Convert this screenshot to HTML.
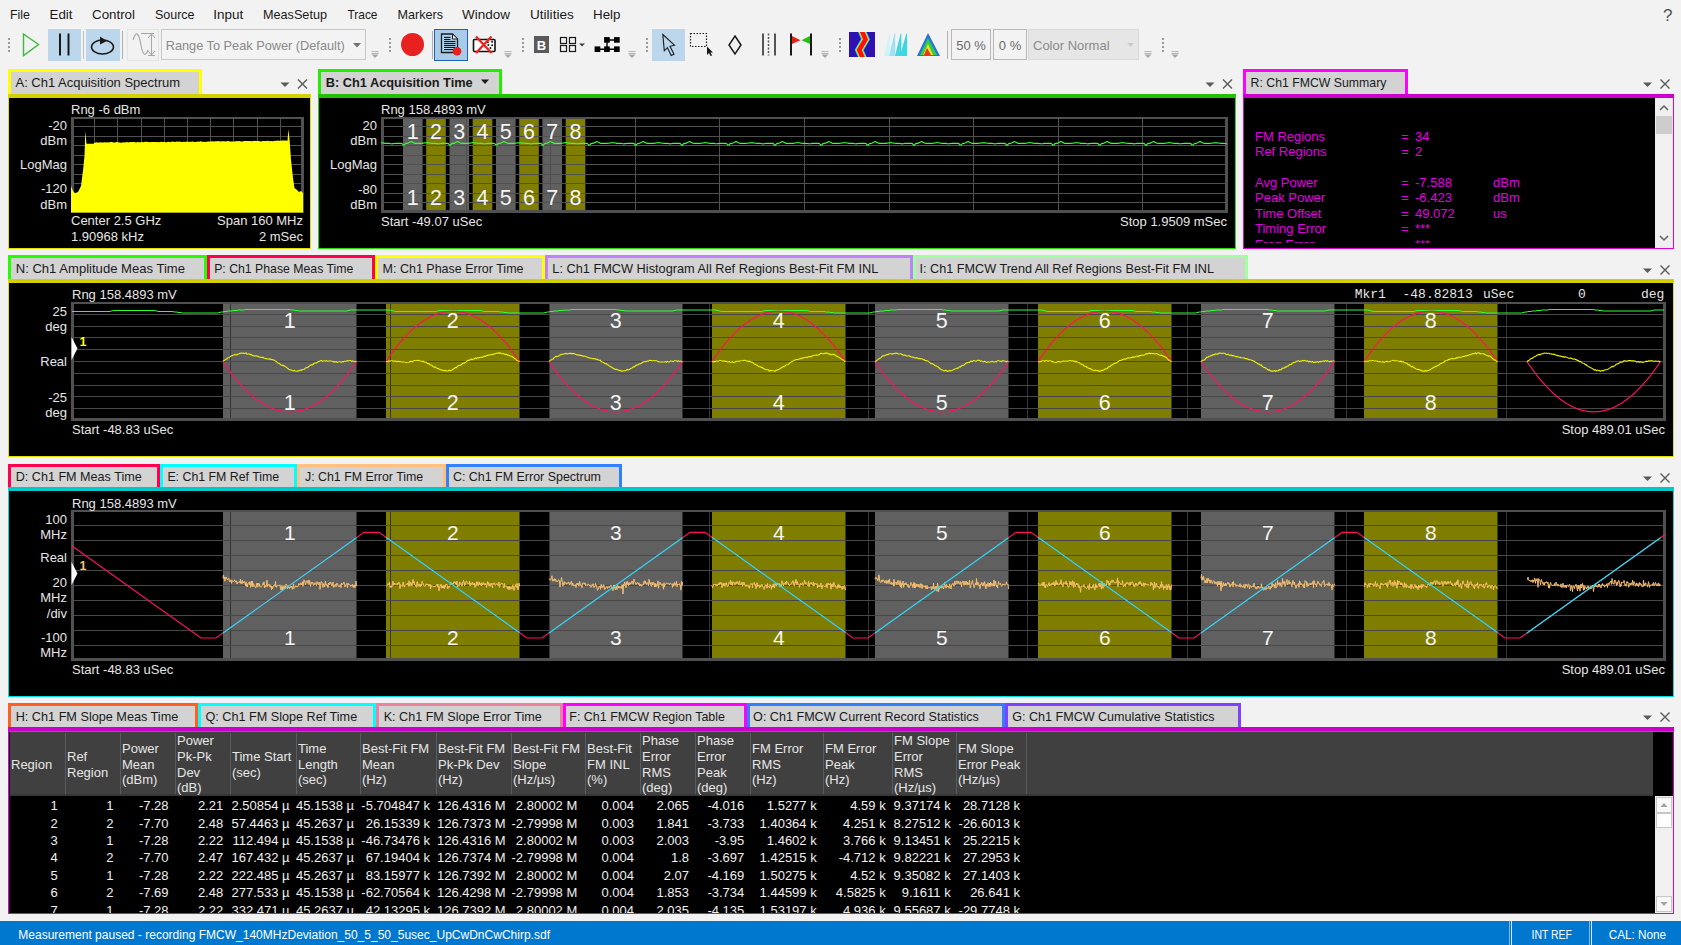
<!DOCTYPE html>
<html><head><meta charset="utf-8"><title>VSA</title>
<style>
html,body{margin:0;padding:0;}
body{width:1681px;height:945px;overflow:hidden;position:relative;background:#f2f2f2;font-family:"Liberation Sans", sans-serif;}
body>div{position:absolute;}
svg{position:absolute;left:0;top:0;}
text{font-family:"Liberation Sans", sans-serif;}
</style></head><body>
<div style="left:8px;top:69px;width:194px;height:25px;background:#d3d3d3;box-sizing:border-box;border:3px solid #ffff00;border-bottom:none"></div><div style="left:8px;top:94px;width:303px;height:155px;background:#000;box-sizing:border-box;border:1px solid #e0e000;border-top:4px solid #d4d000"></div><div style="left:318px;top:69px;width:184px;height:25px;background:#d3d3d3;box-sizing:border-box;border:3px solid #22ee00;border-bottom:none"></div><div style="left:318px;top:94px;width:918px;height:155px;background:#000;box-sizing:border-box;border:1px solid #22dd00;border-top:4px solid #22c000"></div><div style="left:1243px;top:69px;width:165px;height:25px;background:#d3d3d3;box-sizing:border-box;border:3px solid #ff00ff;border-bottom:none"></div><div style="left:1243px;top:94px;width:431px;height:155px;background:#000;box-sizing:border-box;border:1px solid #dd00dd;border-top:4px solid #cc00cc"></div><div style="left:8px;top:255px;width:199px;height:24px;background:#d3d3d3;box-sizing:border-box;border:3px solid #22ff00;border-bottom:none"></div><div style="left:207px;top:255px;width:168px;height:24px;background:#d3d3d3;box-sizing:border-box;border:3px solid #ff0050;border-bottom:none"></div><div style="left:375px;top:255px;width:170px;height:24px;background:#d3d3d3;box-sizing:border-box;border:3px solid #ffff00;border-bottom:none"></div><div style="left:545px;top:255px;width:368px;height:24px;background:#d3d3d3;box-sizing:border-box;border:3px solid #c080ff;border-bottom:none"></div><div style="left:913px;top:255px;width:335px;height:24px;background:#d3d3d3;box-sizing:border-box;border:3px solid #a0ffa0;border-bottom:none"></div><div style="left:8px;top:279px;width:1666px;height:178px;background:#000;box-sizing:border-box;border:1px solid #e0e000;border-top:4px solid #d4d000"></div><div style="left:8px;top:464px;width:152px;height:23px;background:#d3d3d3;box-sizing:border-box;border:3px solid #ff0050;border-bottom:none"></div><div style="left:160px;top:464px;width:137px;height:23px;background:#d3d3d3;box-sizing:border-box;border:3px solid #00ffff;border-bottom:none"></div><div style="left:297px;top:464px;width:149px;height:23px;background:#d3d3d3;box-sizing:border-box;border:3px solid #ffc080;border-bottom:none"></div><div style="left:446px;top:464px;width:176px;height:23px;background:#d3d3d3;box-sizing:border-box;border:3px solid #3080ff;border-bottom:none"></div><div style="left:8px;top:487px;width:1666px;height:210px;background:#000;box-sizing:border-box;border:1px solid #00e0e0;border-top:4px solid #00c8c8"></div><div style="left:8px;top:703px;width:190px;height:24px;background:#d3d3d3;box-sizing:border-box;border:3px solid #ff6020;border-bottom:none"></div><div style="left:198px;top:703px;width:178px;height:24px;background:#d3d3d3;box-sizing:border-box;border:3px solid #00ffff;border-bottom:none"></div><div style="left:376px;top:703px;width:187px;height:24px;background:#d3d3d3;box-sizing:border-box;border:3px solid #f080a0;border-bottom:none"></div><div style="left:563px;top:703px;width:184px;height:24px;background:#d3d3d3;box-sizing:border-box;border:3px solid #ff00ff;border-bottom:none"></div><div style="left:747px;top:703px;width:258px;height:24px;background:#d3d3d3;box-sizing:border-box;border:3px solid #3080ff;border-bottom:none"></div><div style="left:1005px;top:703px;width:236px;height:24px;background:#d3d3d3;box-sizing:border-box;border:3px solid #8040ff;border-bottom:none"></div><div style="left:8px;top:727px;width:1666px;height:187px;background:#000;box-sizing:border-box;border:1px solid #dd00dd;border-top:4px solid #cc00cc"></div><div style="left:0px;top:921px;width:1681px;height:24px;background:#0078d0"></div>
<svg width="1681" height="945" viewBox="0 0 1681 945">
<text x="10" y="19" font-size="13" fill="#1a1a1a" text-anchor="start" textLength="20" lengthAdjust="spacingAndGlyphs">File</text>
<text x="49.5" y="19" font-size="13" fill="#1a1a1a" text-anchor="start" textLength="23.0" lengthAdjust="spacingAndGlyphs">Edit</text>
<text x="92" y="19" font-size="13" fill="#1a1a1a" text-anchor="start" textLength="43" lengthAdjust="spacingAndGlyphs">Control</text>
<text x="155" y="19" font-size="13" fill="#1a1a1a" text-anchor="start" textLength="39.5" lengthAdjust="spacingAndGlyphs">Source</text>
<text x="213.3" y="19" font-size="13" fill="#1a1a1a" text-anchor="start" textLength="30.0" lengthAdjust="spacingAndGlyphs">Input</text>
<text x="263" y="19" font-size="13" fill="#1a1a1a" text-anchor="start" textLength="64" lengthAdjust="spacingAndGlyphs">MeasSetup</text>
<text x="347.5" y="19" font-size="13" fill="#1a1a1a" text-anchor="start" textLength="30.0" lengthAdjust="spacingAndGlyphs">Trace</text>
<text x="397.5" y="19" font-size="13" fill="#1a1a1a" text-anchor="start" textLength="45.5" lengthAdjust="spacingAndGlyphs">Markers</text>
<text x="462" y="19" font-size="13" fill="#1a1a1a" text-anchor="start" textLength="48" lengthAdjust="spacingAndGlyphs">Window</text>
<text x="530" y="19" font-size="13" fill="#1a1a1a" text-anchor="start" textLength="43.8" lengthAdjust="spacingAndGlyphs">Utilities</text>
<text x="593" y="19" font-size="13" fill="#1a1a1a" text-anchor="start" textLength="27.5" lengthAdjust="spacingAndGlyphs">Help</text>
<text x="1663" y="21" font-size="17" fill="#505050" text-anchor="start">?</text>
<text x="15.5" y="87" font-size="13.5" fill="#1a1a1a" text-anchor="start" textLength="164.5" lengthAdjust="spacingAndGlyphs">A: Ch1 Acquisition Spectrum</text>
<path d="M280.5,82.5 L289.5,82.5 L285,87 Z" fill="#5a5a5a"/>
<path d="M298.0,79.5 L307.0,88.5 M307.0,79.5 L298.0,88.5" stroke="#5a5a5a" stroke-width="1.4"/>
<text x="325.7" y="87" font-size="13.5" fill="#1a1a1a" text-anchor="start" font-weight="bold" textLength="147" lengthAdjust="spacingAndGlyphs">B: Ch1 Acquisition Time</text>
<path d="M481,79.5 L489,79.5 L485,84 Z" fill="#1a1a1a"/>
<path d="M1205.5,82.5 L1214.5,82.5 L1210,87 Z" fill="#5a5a5a"/>
<path d="M1223.0,79.5 L1232.0,88.5 M1232.0,79.5 L1223.0,88.5" stroke="#5a5a5a" stroke-width="1.4"/>
<text x="1250.6" y="87" font-size="13.5" fill="#1a1a1a" text-anchor="start" textLength="135.8" lengthAdjust="spacingAndGlyphs">R: Ch1 FMCW Summary</text>
<path d="M1643.0,82.5 L1652.0,82.5 L1647.5,87 Z" fill="#5a5a5a"/>
<path d="M1660.5,79.5 L1669.5,88.5 M1669.5,79.5 L1660.5,88.5" stroke="#5a5a5a" stroke-width="1.4"/>
<text x="15.7" y="273" font-size="13.5" fill="#1a1a1a" text-anchor="start" textLength="169.3" lengthAdjust="spacingAndGlyphs">N: Ch1 Amplitude Meas Time</text>
<text x="214.2" y="273" font-size="13.5" fill="#1a1a1a" text-anchor="start" textLength="139.1" lengthAdjust="spacingAndGlyphs">P: Ch1 Phase Meas Time</text>
<text x="382.6" y="273" font-size="13.5" fill="#1a1a1a" text-anchor="start" textLength="140.9" lengthAdjust="spacingAndGlyphs">M: Ch1 Phase Error Time</text>
<text x="552.3" y="273" font-size="13.5" fill="#1a1a1a" text-anchor="start" textLength="326" lengthAdjust="spacingAndGlyphs">L: Ch1 FMCW Histogram All Ref Regions Best-Fit FM INL</text>
<text x="919.5" y="273" font-size="13.5" fill="#1a1a1a" text-anchor="start" textLength="294.5" lengthAdjust="spacingAndGlyphs">I: Ch1 FMCW Trend All Ref Regions Best-Fit FM INL</text>
<path d="M1643.0,268.5 L1652.0,268.5 L1647.5,273 Z" fill="#5a5a5a"/>
<path d="M1660.5,265.5 L1669.5,274.5 M1669.5,265.5 L1660.5,274.5" stroke="#5a5a5a" stroke-width="1.4"/>
<text x="15.7" y="481" font-size="13.5" fill="#1a1a1a" text-anchor="start" textLength="126" lengthAdjust="spacingAndGlyphs">D: Ch1 FM Meas Time</text>
<text x="167.4" y="481" font-size="13.5" fill="#1a1a1a" text-anchor="start" textLength="111.8" lengthAdjust="spacingAndGlyphs">E: Ch1 FM Ref Time</text>
<text x="305" y="481" font-size="13.5" fill="#1a1a1a" text-anchor="start" textLength="118.2" lengthAdjust="spacingAndGlyphs">J: Ch1 FM Error Time</text>
<text x="452.9" y="481" font-size="13.5" fill="#1a1a1a" text-anchor="start" textLength="148.1" lengthAdjust="spacingAndGlyphs">C: Ch1 FM Error Spectrum</text>
<path d="M1643.0,476.5 L1652.0,476.5 L1647.5,481 Z" fill="#5a5a5a"/>
<path d="M1660.5,473.5 L1669.5,482.5 M1669.5,473.5 L1660.5,482.5" stroke="#5a5a5a" stroke-width="1.4"/>
<text x="15.7" y="721" font-size="13.5" fill="#1a1a1a" text-anchor="start" textLength="162.6" lengthAdjust="spacingAndGlyphs">H: Ch1 FM Slope Meas Time</text>
<text x="205.4" y="721" font-size="13.5" fill="#1a1a1a" text-anchor="start" textLength="151.8" lengthAdjust="spacingAndGlyphs">Q: Ch1 FM Slope Ref Time</text>
<text x="383.7" y="721" font-size="13.5" fill="#1a1a1a" text-anchor="start" textLength="158.1" lengthAdjust="spacingAndGlyphs">K: Ch1 FM Slope Error Time</text>
<text x="569.3" y="721" font-size="13.5" fill="#1a1a1a" text-anchor="start" textLength="155.7" lengthAdjust="spacingAndGlyphs">F: Ch1 FMCW Region Table</text>
<text x="753.1" y="721" font-size="13.5" fill="#1a1a1a" text-anchor="start" textLength="225.8" lengthAdjust="spacingAndGlyphs">O: Ch1 FMCW Current Record Statistics</text>
<text x="1012.3" y="721" font-size="13.5" fill="#1a1a1a" text-anchor="start" textLength="202.2" lengthAdjust="spacingAndGlyphs">G: Ch1 FMCW Cumulative Statistics</text>
<path d="M1643.0,715.5 L1652.0,715.5 L1647.5,720 Z" fill="#5a5a5a"/>
<path d="M1660.5,712.5 L1669.5,721.5 M1669.5,712.5 L1660.5,721.5" stroke="#5a5a5a" stroke-width="1.4"/>
<rect x="94" y="117" width="1" height="95" fill="#505050"/>
<rect x="117" y="117" width="1" height="95" fill="#505050"/>
<rect x="141" y="117" width="1" height="95" fill="#505050"/>
<rect x="164" y="117" width="1" height="95" fill="#505050"/>
<rect x="187" y="117" width="1" height="95" fill="#505050"/>
<rect x="210" y="117" width="1" height="95" fill="#505050"/>
<rect x="233" y="117" width="1" height="95" fill="#505050"/>
<rect x="257" y="117" width="1" height="95" fill="#505050"/>
<rect x="280" y="117" width="1" height="95" fill="#505050"/>
<rect x="71" y="126" width="232" height="1" fill="#505050"/>
<rect x="71" y="136" width="232" height="1" fill="#505050"/>
<rect x="71" y="145" width="232" height="1" fill="#505050"/>
<rect x="71" y="155" width="232" height="1" fill="#505050"/>
<rect x="71" y="164" width="232" height="1" fill="#505050"/>
<rect x="71" y="174" width="232" height="1" fill="#505050"/>
<rect x="71" y="183" width="232" height="1" fill="#505050"/>
<rect x="71" y="193" width="232" height="1" fill="#505050"/>
<rect x="71" y="202" width="232" height="1" fill="#505050"/>
<rect x="71" y="117" width="233" height="2" fill="#505050"/>
<rect x="71" y="210" width="233" height="3" fill="#505050"/>
<rect x="71" y="117" width="3" height="96" fill="#505050"/>
<rect x="301" y="117" width="3" height="96" fill="#505050"/>
<polygon points="71.0,212.5 71.0,186.0 73.0,191.0 75.0,193.3 78.0,192.0 81.0,186.0 83.3,168.0 84.5,156.0 85.3,131.0 86.5,143.8 93.8,143.8 94.0,142.9 95.5,142.5 97.0,142.3 98.5,142.7 100.0,142.2 101.5,142.6 103.0,142.4 104.5,142.2 106.0,142.5 107.5,142.2 109.0,142.4 110.5,142.1 112.0,142.1 113.5,142.4 115.0,142.6 116.5,142.1 118.0,142.2 119.5,142.5 121.0,142.7 122.5,142.4 124.0,142.2 125.5,142.6 127.0,142.0 128.5,142.5 130.0,142.1 131.5,142.0 133.0,142.0 134.5,142.1 136.0,142.4 137.5,142.0 139.0,142.2 140.5,142.3 142.0,142.1 143.5,142.2 145.0,141.8 146.5,141.8 148.0,141.9 149.5,142.2 151.0,142.0 152.5,141.9 154.0,142.1 155.5,142.0 157.0,141.9 158.5,142.2 160.0,142.1 161.5,141.8 163.0,142.0 164.5,142.0 166.0,142.2 167.5,142.1 169.0,141.8 170.5,142.2 172.0,141.6 173.5,141.8 175.0,142.0 176.5,141.6 178.0,141.8 179.5,141.5 181.0,141.9 182.5,142.0 184.0,141.8 185.5,142.0 187.0,141.6 188.5,141.9 190.0,141.8 191.5,141.7 193.0,141.6 194.5,141.9 196.0,142.0 197.5,141.6 199.0,141.7 200.5,141.3 202.0,141.7 203.5,141.7 205.0,141.9 206.5,141.8 208.0,141.4 209.5,141.4 211.0,141.6 212.5,141.2 214.0,141.5 215.5,141.2 217.0,141.2 218.5,141.1 220.0,141.6 221.5,141.2 223.0,141.2 224.5,141.3 226.0,141.6 227.5,141.1 229.0,141.3 230.5,141.4 232.0,141.6 233.5,141.5 235.0,141.5 236.5,141.1 238.0,141.2 239.5,141.1 241.0,141.5 242.5,141.5 244.0,141.0 245.5,141.0 247.0,141.0 248.5,141.0 250.0,141.1 251.5,141.2 253.0,141.0 254.5,140.8 256.0,141.0 257.5,141.0 259.0,141.1 260.5,141.4 262.0,141.2 263.5,141.0 265.0,141.1 266.5,141.1 268.0,140.7 269.5,141.2 271.0,141.1 272.5,141.2 274.0,141.1 275.5,140.8 277.0,140.8 278.5,140.6 280.0,141.0 281.5,140.5 283.0,140.5 284.5,140.6 286.0,140.6 287.5,140.7 287.5,141.0 288.4,129.3 289.6,140.0 291.0,160.0 293.0,178.0 294.5,188.0 297.0,190.0 299.0,192.0 301.0,191.0 303.0,193.0 303.0,212.5" fill="#ffff00"/>
<text x="71" y="114" font-size="13" fill="#e6e6e6" text-anchor="start">Rng -6 dBm</text>
<text x="67" y="130" font-size="13" fill="#e6e6e6" text-anchor="end">-20</text>
<text x="67" y="145" font-size="13" fill="#e6e6e6" text-anchor="end">dBm</text>
<text x="67" y="169" font-size="13" fill="#e6e6e6" text-anchor="end">LogMag</text>
<text x="67" y="193" font-size="13" fill="#e6e6e6" text-anchor="end">-120</text>
<text x="67" y="208.5" font-size="13" fill="#e6e6e6" text-anchor="end">dBm</text>
<text x="71" y="225" font-size="13" fill="#e6e6e6" text-anchor="start">Center 2.5 GHz</text>
<text x="303" y="225" font-size="13" fill="#e6e6e6" text-anchor="end">Span 160 MHz</text>
<text x="71" y="240.5" font-size="13" fill="#e6e6e6" text-anchor="start">1.90968 kHz</text>
<text x="303" y="240.5" font-size="13" fill="#e6e6e6" text-anchor="end">2 mSec</text>
<rect x="403.0" y="119" width="19.6" height="93" fill="#606060"/>
<rect x="426.2" y="119" width="19.6" height="93" fill="#807e00"/>
<rect x="449.5" y="119" width="19.6" height="93" fill="#606060"/>
<rect x="472.7" y="119" width="19.6" height="93" fill="#807e00"/>
<rect x="496.0" y="119" width="19.6" height="93" fill="#606060"/>
<rect x="519.2" y="119" width="19.6" height="93" fill="#807e00"/>
<rect x="542.4" y="119" width="19.6" height="93" fill="#606060"/>
<rect x="565.7" y="119" width="19.6" height="93" fill="#807e00"/>
<rect x="466" y="117" width="1" height="95" fill="#505050"/>
<rect x="550" y="117" width="1" height="95" fill="#505050"/>
<rect x="635" y="117" width="1" height="95" fill="#505050"/>
<rect x="719" y="117" width="1" height="95" fill="#505050"/>
<rect x="804" y="117" width="1" height="95" fill="#505050"/>
<rect x="889" y="117" width="1" height="95" fill="#505050"/>
<rect x="973" y="117" width="1" height="95" fill="#505050"/>
<rect x="1058" y="117" width="1" height="95" fill="#505050"/>
<rect x="1142" y="117" width="1" height="95" fill="#505050"/>
<rect x="381" y="126" width="846" height="1" fill="#505050"/>
<rect x="381" y="136" width="846" height="1" fill="#505050"/>
<rect x="381" y="145" width="846" height="1" fill="#505050"/>
<rect x="381" y="155" width="846" height="1" fill="#505050"/>
<rect x="381" y="164" width="846" height="1" fill="#505050"/>
<rect x="381" y="174" width="846" height="1" fill="#505050"/>
<rect x="381" y="183" width="846" height="1" fill="#505050"/>
<rect x="381" y="193" width="846" height="1" fill="#505050"/>
<rect x="381" y="202" width="846" height="1" fill="#505050"/>
<rect x="381" y="117" width="847" height="2" fill="#505050"/>
<rect x="381" y="210" width="847" height="3" fill="#505050"/>
<rect x="381" y="117" width="3" height="96" fill="#505050"/>
<rect x="1225" y="117" width="3" height="96" fill="#505050"/>
<text x="412.8" y="139" font-size="21.5" fill="#f4f4f4" text-anchor="middle">1</text>
<text x="412.8" y="205" font-size="21.5" fill="#f4f4f4" text-anchor="middle">1</text>
<text x="436.0" y="139" font-size="21.5" fill="#f4f4f4" text-anchor="middle">2</text>
<text x="436.0" y="205" font-size="21.5" fill="#f4f4f4" text-anchor="middle">2</text>
<text x="459.3" y="139" font-size="21.5" fill="#f4f4f4" text-anchor="middle">3</text>
<text x="459.3" y="205" font-size="21.5" fill="#f4f4f4" text-anchor="middle">3</text>
<text x="482.5" y="139" font-size="21.5" fill="#f4f4f4" text-anchor="middle">4</text>
<text x="482.5" y="205" font-size="21.5" fill="#f4f4f4" text-anchor="middle">4</text>
<text x="505.8" y="139" font-size="21.5" fill="#f4f4f4" text-anchor="middle">5</text>
<text x="505.8" y="205" font-size="21.5" fill="#f4f4f4" text-anchor="middle">5</text>
<text x="529.0" y="139" font-size="21.5" fill="#f4f4f4" text-anchor="middle">6</text>
<text x="529.0" y="205" font-size="21.5" fill="#f4f4f4" text-anchor="middle">6</text>
<text x="552.2" y="139" font-size="21.5" fill="#f4f4f4" text-anchor="middle">7</text>
<text x="552.2" y="205" font-size="21.5" fill="#f4f4f4" text-anchor="middle">7</text>
<text x="575.5" y="139" font-size="21.5" fill="#f4f4f4" text-anchor="middle">8</text>
<text x="575.5" y="205" font-size="21.5" fill="#f4f4f4" text-anchor="middle">8</text>
<polyline points="381.0,142.8 382.0,142.9 383.0,143.0 384.0,143.1 385.0,143.3 386.0,143.3 387.0,143.3 388.0,143.3 389.0,143.4 390.0,143.5 391.0,143.7 392.0,143.8 393.0,143.6 394.0,143.5 395.0,143.3 396.0,143.3 397.0,143.3 398.0,143.3 399.0,143.3 400.0,143.3 401.0,143.3 402.0,143.6 403.0,144.7 404.0,145.2 405.0,144.1 406.0,143.3 407.0,143.3 408.0,143.1 409.0,142.6 410.0,142.1 411.0,141.6 412.0,141.9 413.0,142.4 414.0,142.9 415.0,143.3 416.0,143.3 417.0,143.3 418.0,143.3 419.0,143.3 420.0,143.3 421.0,143.3 422.0,143.3 423.0,143.1 424.0,143.0 425.0,142.9 426.0,142.8 427.0,142.7 428.0,142.9 429.0,143.0 430.0,143.1 431.0,143.2 432.0,143.3 433.0,143.3 434.0,143.3 435.0,143.3 436.0,143.5 437.0,143.6 438.0,143.8 439.0,143.7 440.0,143.5 441.0,143.4 442.0,143.3 443.0,143.3 444.0,143.3 445.0,143.3 446.0,143.3 447.0,143.3 448.0,143.3 449.0,144.3 450.0,145.4 451.0,144.5 452.0,143.4 453.0,143.3 454.0,143.3 455.0,142.8 456.0,142.3 457.0,141.8 458.0,141.7 459.0,142.2 460.0,142.7 461.0,143.2 462.0,143.3 463.0,143.3 464.0,143.3 465.0,143.3 466.0,143.3 467.0,143.3 468.0,143.3 469.0,143.2 470.0,143.1 471.0,143.0 472.0,142.8 473.0,142.7 474.0,142.8 475.0,142.9 476.0,143.0 477.0,143.2 478.0,143.3 479.0,143.3 480.0,143.3 481.0,143.3 482.0,143.4 483.0,143.6 484.0,143.7 485.0,143.7 486.0,143.6 487.0,143.5 488.0,143.3 489.0,143.3 490.0,143.3 491.0,143.3 492.0,143.3 493.0,143.3 494.0,143.3 495.0,143.9 496.0,145.0 497.0,144.9 498.0,143.8 499.0,143.3 500.0,143.3 501.0,143.0 502.0,142.5 503.0,142.0 504.0,141.5 505.0,142.0 506.0,142.5 507.0,143.0 508.0,143.3 509.0,143.3 510.0,143.3 511.0,143.3 512.0,143.3 513.0,143.3 514.0,143.3 515.0,143.2 516.0,143.1 517.0,143.0 518.0,142.9 519.0,142.8 520.0,142.8 521.0,142.9 522.0,143.0 523.0,143.1 524.0,143.2 525.0,143.3 526.0,143.3 527.0,143.3 528.0,143.4 529.0,143.5 530.0,143.7 531.0,143.8 532.0,143.7 533.0,143.5 534.0,143.4 535.0,143.3 536.0,143.3 537.0,143.3 538.0,143.3 539.0,143.3 540.0,143.3 541.0,143.4 542.0,144.5 543.0,145.4 544.0,144.3 545.0,143.3 546.0,143.3 547.0,143.2 548.0,142.7 549.0,142.2 550.0,141.7 551.0,141.8 552.0,142.3 553.0,142.8 554.0,143.3 555.0,143.3 556.0,143.3 557.0,143.3 558.0,143.3 559.0,143.3 560.0,143.3 561.0,143.3 562.0,143.2 563.0,143.0 564.0,142.9 565.0,142.8 566.0,142.7 567.0,142.8 568.0,143.0 569.0,143.1 570.0,143.2 571.0,143.3 572.0,143.3 573.0,143.3 574.0,143.3 575.0,143.5 576.0,143.6 577.0,143.7 578.0,143.7 579.0,143.6 580.0,143.4 581.0,143.3 582.0,143.3 583.0,143.3 584.0,143.3 585.0,143.3 586.0,143.3 587.0,143.3 588.0,144.1 589.0,145.2 590.0,144.7 591.0,143.6 592.0,143.3 593.0,143.3 594.0,142.9 595.0,142.4 596.0,141.9 597.0,141.6 598.0,142.1 599.0,142.6 600.0,143.1 601.0,143.3 602.0,143.3 603.0,143.3 604.0,143.3 605.0,143.3 606.0,143.3 607.0,143.3 608.0,143.2 609.0,143.1 610.0,143.0 611.0,142.9 612.0,142.7 613.0,142.8 614.0,142.9 615.0,143.0 616.0,143.1 617.0,143.3 618.0,143.3 619.0,143.3 620.0,143.3 621.0,143.4 622.0,143.5 623.0,143.7 624.0,143.8 625.0,143.6 626.0,143.5 627.0,143.3 628.0,143.3 629.0,143.3 630.0,143.3 631.0,143.3 632.0,143.3 633.0,143.3 634.0,143.6 635.0,144.7 636.0,145.2 637.0,144.1 638.0,143.3 639.0,143.3 640.0,143.1 641.0,142.6 642.0,142.1 643.0,141.6 644.0,141.9 645.0,142.4 646.0,142.9 647.0,143.3 648.0,143.3 649.0,143.3 650.0,143.3 651.0,143.3 652.0,143.3 653.0,143.3 654.0,143.3 655.0,143.1 656.0,143.0 657.0,142.9 658.0,142.8 659.0,142.7 660.0,142.9 661.0,143.0 662.0,143.1 663.0,143.2 664.0,143.3 665.0,143.3 666.0,143.3 667.0,143.3 668.0,143.5 669.0,143.6 670.0,143.8 671.0,143.7 672.0,143.5 673.0,143.4 674.0,143.3 675.0,143.3 676.0,143.3 677.0,143.3 678.0,143.3 679.0,143.3 680.0,143.3 681.0,144.3 682.0,145.4 683.0,144.5 684.0,143.4 685.0,143.3 686.0,143.3 687.0,142.8 688.0,142.3 689.0,141.8 690.0,141.7 691.0,142.2 692.0,142.7 693.0,143.2 694.0,143.3 695.0,143.3 696.0,143.3 697.0,143.3 698.0,143.3 699.0,143.3 700.0,143.3 701.0,143.2 702.0,143.1 703.0,143.0 704.0,142.8 705.0,142.7 706.0,142.8 707.0,142.9 708.0,143.0 709.0,143.2 710.0,143.3 711.0,143.3 712.0,143.3 713.0,143.3 714.0,143.4 715.0,143.6 716.0,143.7 717.0,143.7 718.0,143.6 719.0,143.5 720.0,143.3 721.0,143.3 722.0,143.3 723.0,143.3 724.0,143.3 725.0,143.3 726.0,143.3 727.0,143.9 728.0,145.0 729.0,144.9 730.0,143.8 731.0,143.3 732.0,143.3 733.0,143.0 734.0,142.5 735.0,142.0 736.0,141.5 737.0,142.0 738.0,142.5 739.0,143.0 740.0,143.3 741.0,143.3 742.0,143.3 743.0,143.3 744.0,143.3 745.0,143.3 746.0,143.3 747.0,143.2 748.0,143.1 749.0,143.0 750.0,142.9 751.0,142.8 752.0,142.8 753.0,142.9 754.0,143.0 755.0,143.1 756.0,143.2 757.0,143.3 758.0,143.3 759.0,143.3 760.0,143.4 761.0,143.5 762.0,143.7 763.0,143.8 764.0,143.7 765.0,143.5 766.0,143.4 767.0,143.3 768.0,143.3 769.0,143.3 770.0,143.3 771.0,143.3 772.0,143.3 773.0,143.4 774.0,144.5 775.0,145.4 776.0,144.3 777.0,143.3 778.0,143.3 779.0,143.2 780.0,142.7 781.0,142.2 782.0,141.7 783.0,141.8 784.0,142.3 785.0,142.8 786.0,143.3 787.0,143.3 788.0,143.3 789.0,143.3 790.0,143.3 791.0,143.3 792.0,143.3 793.0,143.3 794.0,143.2 795.0,143.0 796.0,142.9 797.0,142.8 798.0,142.7 799.0,142.8 800.0,143.0 801.0,143.1 802.0,143.2 803.0,143.3 804.0,143.3 805.0,143.3 806.0,143.3 807.0,143.5 808.0,143.6 809.0,143.7 810.0,143.7 811.0,143.6 812.0,143.4 813.0,143.3 814.0,143.3 815.0,143.3 816.0,143.3 817.0,143.3 818.0,143.3 819.0,143.3 820.0,144.1 821.0,145.2 822.0,144.7 823.0,143.6 824.0,143.3 825.0,143.3 826.0,142.9 827.0,142.4 828.0,141.9 829.0,141.6 830.0,142.1 831.0,142.6 832.0,143.1 833.0,143.3 834.0,143.3 835.0,143.3 836.0,143.3 837.0,143.3 838.0,143.3 839.0,143.3 840.0,143.2 841.0,143.1 842.0,143.0 843.0,142.9 844.0,142.7 845.0,142.8 846.0,142.9 847.0,143.0 848.0,143.1 849.0,143.3 850.0,143.3 851.0,143.3 852.0,143.3 853.0,143.4 854.0,143.5 855.0,143.7 856.0,143.8 857.0,143.6 858.0,143.5 859.0,143.3 860.0,143.3 861.0,143.3 862.0,143.3 863.0,143.3 864.0,143.3 865.0,143.3 866.0,143.6 867.0,144.7 868.0,145.2 869.0,144.1 870.0,143.3 871.0,143.3 872.0,143.1 873.0,142.6 874.0,142.1 875.0,141.6 876.0,141.9 877.0,142.4 878.0,142.9 879.0,143.3 880.0,143.3 881.0,143.3 882.0,143.3 883.0,143.3 884.0,143.3 885.0,143.3 886.0,143.3 887.0,143.1 888.0,143.0 889.0,142.9 890.0,142.8 891.0,142.7 892.0,142.9 893.0,143.0 894.0,143.1 895.0,143.2 896.0,143.3 897.0,143.3 898.0,143.3 899.0,143.3 900.0,143.5 901.0,143.6 902.0,143.8 903.0,143.7 904.0,143.5 905.0,143.4 906.0,143.3 907.0,143.3 908.0,143.3 909.0,143.3 910.0,143.3 911.0,143.3 912.0,143.3 913.0,144.3 914.0,145.4 915.0,144.5 916.0,143.4 917.0,143.3 918.0,143.3 919.0,142.8 920.0,142.3 921.0,141.8 922.0,141.7 923.0,142.2 924.0,142.7 925.0,143.2 926.0,143.3 927.0,143.3 928.0,143.3 929.0,143.3 930.0,143.3 931.0,143.3 932.0,143.3 933.0,143.2 934.0,143.1 935.0,143.0 936.0,142.8 937.0,142.7 938.0,142.8 939.0,142.9 940.0,143.0 941.0,143.2 942.0,143.3 943.0,143.3 944.0,143.3 945.0,143.3 946.0,143.4 947.0,143.6 948.0,143.7 949.0,143.7 950.0,143.6 951.0,143.5 952.0,143.3 953.0,143.3 954.0,143.3 955.0,143.3 956.0,143.3 957.0,143.3 958.0,143.3 959.0,143.8 960.0,144.9 961.0,145.0 962.0,143.9 963.0,143.3 964.0,143.3 965.0,143.0 966.0,142.5 967.0,142.0 968.0,141.5 969.0,142.0 970.0,142.5 971.0,143.0 972.0,143.3 973.0,143.3 974.0,143.3 975.0,143.3 976.0,143.3 977.0,143.3 978.0,143.3 979.0,143.2 980.0,143.1 981.0,143.0 982.0,142.9 983.0,142.8 984.0,142.8 985.0,142.9 986.0,143.0 987.0,143.1 988.0,143.2 989.0,143.3 990.0,143.3 991.0,143.3 992.0,143.4 993.0,143.5 994.0,143.7 995.0,143.8 996.0,143.7 997.0,143.5 998.0,143.4 999.0,143.3 1000.0,143.3 1001.0,143.3 1002.0,143.3 1003.0,143.3 1004.0,143.3 1005.0,143.4 1006.0,144.5 1007.0,145.4 1008.0,144.3 1009.0,143.3 1010.0,143.3 1011.0,143.2 1012.0,142.7 1013.0,142.2 1014.0,141.7 1015.0,141.8 1016.0,142.3 1017.0,142.8 1018.0,143.3 1019.0,143.3 1020.0,143.3 1021.0,143.3 1022.0,143.3 1023.0,143.3 1024.0,143.3 1025.0,143.3 1026.0,143.2 1027.0,143.0 1028.0,142.9 1029.0,142.8 1030.0,142.7 1031.0,142.8 1032.0,143.0 1033.0,143.1 1034.0,143.2 1035.0,143.3 1036.0,143.3 1037.0,143.3 1038.0,143.3 1039.0,143.5 1040.0,143.6 1041.0,143.7 1042.0,143.7 1043.0,143.6 1044.0,143.4 1045.0,143.3 1046.0,143.3 1047.0,143.3 1048.0,143.3 1049.0,143.3 1050.0,143.3 1051.0,143.3 1052.0,144.1 1053.0,145.2 1054.0,144.7 1055.0,143.6 1056.0,143.3 1057.0,143.3 1058.0,142.9 1059.0,142.4 1060.0,141.9 1061.0,141.6 1062.0,142.1 1063.0,142.6 1064.0,143.1 1065.0,143.3 1066.0,143.3 1067.0,143.3 1068.0,143.3 1069.0,143.3 1070.0,143.3 1071.0,143.3 1072.0,143.2 1073.0,143.1 1074.0,143.0 1075.0,142.9 1076.0,142.7 1077.0,142.8 1078.0,142.9 1079.0,143.0 1080.0,143.1 1081.0,143.3 1082.0,143.3 1083.0,143.3 1084.0,143.3 1085.0,143.4 1086.0,143.5 1087.0,143.7 1088.0,143.8 1089.0,143.6 1090.0,143.5 1091.0,143.3 1092.0,143.3 1093.0,143.3 1094.0,143.3 1095.0,143.3 1096.0,143.3 1097.0,143.3 1098.0,143.6 1099.0,144.7 1100.0,145.2 1101.0,144.1 1102.0,143.3 1103.0,143.3 1104.0,143.1 1105.0,142.6 1106.0,142.1 1107.0,141.6 1108.0,141.9 1109.0,142.4 1110.0,142.9 1111.0,143.3 1112.0,143.3 1113.0,143.3 1114.0,143.3 1115.0,143.3 1116.0,143.3 1117.0,143.3 1118.0,143.3 1119.0,143.1 1120.0,143.0 1121.0,142.9 1122.0,142.8 1123.0,142.7 1124.0,142.9 1125.0,143.0 1126.0,143.1 1127.0,143.2 1128.0,143.3 1129.0,143.3 1130.0,143.3 1131.0,143.3 1132.0,143.5 1133.0,143.6 1134.0,143.8 1135.0,143.7 1136.0,143.5 1137.0,143.4 1138.0,143.3 1139.0,143.3 1140.0,143.3 1141.0,143.3 1142.0,143.3 1143.0,143.3 1144.0,143.3 1145.0,144.3 1146.0,145.4 1147.0,144.5 1148.0,143.4 1149.0,143.3 1150.0,143.3 1151.0,142.8 1152.0,142.3 1153.0,141.8 1154.0,141.7 1155.0,142.2 1156.0,142.7 1157.0,143.2 1158.0,143.3 1159.0,143.3 1160.0,143.3 1161.0,143.3 1162.0,143.3 1163.0,143.3 1164.0,143.3 1165.0,143.2 1166.0,143.1 1167.0,143.0 1168.0,142.8 1169.0,142.7 1170.0,142.8 1171.0,142.9 1172.0,143.0 1173.0,143.2 1174.0,143.3 1175.0,143.3 1176.0,143.3 1177.0,143.3 1178.0,143.4 1179.0,143.6 1180.0,143.7 1181.0,143.7 1182.0,143.6 1183.0,143.5 1184.0,143.3 1185.0,143.3 1186.0,143.3 1187.0,143.3 1188.0,143.3 1189.0,143.3 1190.0,143.3 1191.0,143.8 1192.0,144.9 1193.0,145.0 1194.0,143.9 1195.0,143.3 1196.0,143.3 1197.0,143.0 1198.0,142.5 1199.0,142.0 1200.0,141.5 1201.0,142.0 1202.0,142.5 1203.0,143.0 1204.0,143.3 1205.0,143.3 1206.0,143.3 1207.0,143.3 1208.0,143.3 1209.0,143.3 1210.0,143.3 1211.0,143.2 1212.0,143.1 1213.0,143.0 1214.0,142.9 1215.0,142.8 1216.0,142.8 1217.0,142.9 1218.0,143.0 1219.0,143.1 1220.0,143.2 1221.0,143.3 1222.0,143.3 1223.0,143.3 1224.0,143.4 1225.0,143.5 1226.0,143.7 1227.0,143.8" stroke="#38ff38" stroke-width="1.15" fill="none"/>
<text x="381" y="114" font-size="13" fill="#e6e6e6" text-anchor="start">Rng 158.4893 mV</text>
<text x="377" y="130" font-size="13" fill="#e6e6e6" text-anchor="end">20</text>
<text x="377" y="145" font-size="13" fill="#e6e6e6" text-anchor="end">dBm</text>
<text x="377" y="169" font-size="13" fill="#e6e6e6" text-anchor="end">LogMag</text>
<text x="377" y="194" font-size="13" fill="#e6e6e6" text-anchor="end">-80</text>
<text x="377" y="209" font-size="13" fill="#e6e6e6" text-anchor="end">dBm</text>
<text x="381" y="225.5" font-size="13" fill="#e6e6e6" text-anchor="start">Start -49.07 uSec</text>
<text x="1227" y="225.5" font-size="13" fill="#e6e6e6" text-anchor="end">Stop 1.9509 mSec</text>
<clipPath id="rclip"><rect x="1244" y="98" width="410" height="145"/></clipPath><g clip-path="url(#rclip)">
<text x="1255" y="140.5" font-size="13" fill="#e000e0" text-anchor="start">FM Regions</text>
<text x="1401" y="140.5" font-size="13" fill="#e000e0" text-anchor="start">=</text>
<text x="1415" y="140.5" font-size="13" fill="#e000e0" text-anchor="start">34</text>
<text x="1493" y="140.5" font-size="13" fill="#e000e0" text-anchor="start"></text>
<text x="1255" y="156" font-size="13" fill="#e000e0" text-anchor="start">Ref Regions</text>
<text x="1401" y="156" font-size="13" fill="#e000e0" text-anchor="start">=</text>
<text x="1415" y="156" font-size="13" fill="#e000e0" text-anchor="start">2</text>
<text x="1493" y="156" font-size="13" fill="#e000e0" text-anchor="start"></text>
<text x="1255" y="186.5" font-size="13" fill="#e000e0" text-anchor="start">Avg Power</text>
<text x="1401" y="186.5" font-size="13" fill="#e000e0" text-anchor="start">=</text>
<text x="1415" y="186.5" font-size="13" fill="#e000e0" text-anchor="start">-7.588</text>
<text x="1493" y="186.5" font-size="13" fill="#e000e0" text-anchor="start">dBm</text>
<text x="1255" y="202" font-size="13" fill="#e000e0" text-anchor="start">Peak Power</text>
<text x="1401" y="202" font-size="13" fill="#e000e0" text-anchor="start">=</text>
<text x="1415" y="202" font-size="13" fill="#e000e0" text-anchor="start">-6.423</text>
<text x="1493" y="202" font-size="13" fill="#e000e0" text-anchor="start">dBm</text>
<text x="1255" y="217.5" font-size="13" fill="#e000e0" text-anchor="start">Time Offset</text>
<text x="1401" y="217.5" font-size="13" fill="#e000e0" text-anchor="start">=</text>
<text x="1415" y="217.5" font-size="13" fill="#e000e0" text-anchor="start">49.072</text>
<text x="1493" y="217.5" font-size="13" fill="#e000e0" text-anchor="start">us</text>
<text x="1255" y="233" font-size="13" fill="#e000e0" text-anchor="start">Timing Error</text>
<text x="1401" y="233" font-size="13" fill="#e000e0" text-anchor="start">=</text>
<text x="1415" y="233" font-size="13" fill="#e000e0" text-anchor="start">***</text>
<text x="1493" y="233" font-size="13" fill="#e000e0" text-anchor="start"></text>
<text x="1255" y="248.5" font-size="13" fill="#e000e0" text-anchor="start">Freq Error</text>
<text x="1401" y="248.5" font-size="13" fill="#e000e0" text-anchor="start">=</text>
<text x="1415" y="248.5" font-size="13" fill="#e000e0" text-anchor="start">***</text>
<text x="1493" y="248.5" font-size="13" fill="#e000e0" text-anchor="start"></text>
</g>
<rect x="1655" y="98" width="18" height="150" fill="#f0f0f0"/>
<rect x="1656" y="116" width="16" height="18" fill="#cdcdcd"/>
<path d="M1660,110 L1664,106 L1668,110" stroke="#606060" stroke-width="1.5" fill="none"/>
<path d="M1660,236 L1664,240 L1668,236" stroke="#606060" stroke-width="1.5" fill="none"/>
<rect x="223.0" y="304" width="133.5" height="116" fill="#606060"/>
<rect x="386.0" y="304" width="133.5" height="116" fill="#807e00"/>
<rect x="549.0" y="304" width="133.5" height="116" fill="#606060"/>
<rect x="712.0" y="304" width="133.5" height="116" fill="#807e00"/>
<rect x="875.0" y="304" width="133.5" height="116" fill="#606060"/>
<rect x="1038.0" y="304" width="133.5" height="116" fill="#807e00"/>
<rect x="1201.0" y="304" width="133.5" height="116" fill="#606060"/>
<rect x="1364.0" y="304" width="133.5" height="116" fill="#807e00"/>
<rect x="230" y="302" width="1" height="118" fill="#343434"/>
<rect x="390" y="302" width="1" height="118" fill="#343434"/>
<rect x="549" y="302" width="1" height="118" fill="#343434"/>
<rect x="709" y="302" width="1" height="118" fill="#343434"/>
<rect x="868" y="302" width="1" height="118" fill="#343434"/>
<rect x="1027" y="302" width="1" height="118" fill="#343434"/>
<rect x="1187" y="302" width="1" height="118" fill="#343434"/>
<rect x="1346" y="302" width="1" height="118" fill="#343434"/>
<rect x="1506" y="302" width="1" height="118" fill="#343434"/>
<rect x="71" y="314" width="1594" height="1" fill="#484848"/>
<rect x="71" y="326" width="1594" height="1" fill="#484848"/>
<rect x="71" y="337" width="1594" height="1" fill="#484848"/>
<rect x="71" y="349" width="1594" height="1" fill="#484848"/>
<rect x="71" y="361" width="1594" height="1" fill="#484848"/>
<rect x="71" y="373" width="1594" height="1" fill="#484848"/>
<rect x="71" y="385" width="1594" height="1" fill="#484848"/>
<rect x="71" y="396" width="1594" height="1" fill="#484848"/>
<rect x="71" y="408" width="1594" height="1" fill="#484848"/>
<rect x="71" y="302" width="1595" height="2" fill="#505050"/>
<rect x="71" y="418" width="1595" height="3" fill="#505050"/>
<rect x="71" y="302" width="3" height="119" fill="#505050"/>
<rect x="1663" y="302" width="3" height="119" fill="#505050"/>
<text x="289.8" y="327.8" font-size="21.5" fill="#f4f4f4" text-anchor="middle">1</text>
<text x="289.8" y="410" font-size="21.5" fill="#f4f4f4" text-anchor="middle">1</text>
<text x="452.8" y="327.8" font-size="21.5" fill="#f4f4f4" text-anchor="middle">2</text>
<text x="452.8" y="410" font-size="21.5" fill="#f4f4f4" text-anchor="middle">2</text>
<text x="615.8" y="327.8" font-size="21.5" fill="#f4f4f4" text-anchor="middle">3</text>
<text x="615.8" y="410" font-size="21.5" fill="#f4f4f4" text-anchor="middle">3</text>
<text x="778.8" y="327.8" font-size="21.5" fill="#f4f4f4" text-anchor="middle">4</text>
<text x="778.8" y="410" font-size="21.5" fill="#f4f4f4" text-anchor="middle">4</text>
<text x="941.8" y="327.8" font-size="21.5" fill="#f4f4f4" text-anchor="middle">5</text>
<text x="941.8" y="410" font-size="21.5" fill="#f4f4f4" text-anchor="middle">5</text>
<text x="1104.8" y="327.8" font-size="21.5" fill="#f4f4f4" text-anchor="middle">6</text>
<text x="1104.8" y="410" font-size="21.5" fill="#f4f4f4" text-anchor="middle">6</text>
<text x="1267.8" y="327.8" font-size="21.5" fill="#f4f4f4" text-anchor="middle">7</text>
<text x="1267.8" y="410" font-size="21.5" fill="#f4f4f4" text-anchor="middle">7</text>
<text x="1430.8" y="327.8" font-size="21.5" fill="#f4f4f4" text-anchor="middle">8</text>
<text x="1430.8" y="410" font-size="21.5" fill="#f4f4f4" text-anchor="middle">8</text>
<polyline points="72.0,311.5 73.0,311.5 74.0,311.5 75.0,311.5 76.0,311.5 77.0,311.5 78.0,311.5 79.0,311.5 80.0,311.5 81.0,311.5 82.0,311.5 83.0,311.5 84.0,311.5 85.0,311.5 86.0,311.5 87.0,311.5 88.0,311.5 89.0,311.5 90.0,311.5 91.0,311.5 92.0,311.5 93.0,311.5 94.0,311.5 95.0,311.5 96.0,311.5 97.0,311.5 98.0,311.5 99.0,311.5 100.0,311.5 101.0,311.5 102.0,311.5 103.0,311.5 104.0,311.5 105.0,311.5 106.0,311.5 107.0,311.5 108.0,311.5 109.0,311.5 110.0,311.5 111.0,311.0 112.0,311.0 113.0,310.5 114.0,310.5 115.0,310.5 116.0,310.5 117.0,310.5 118.0,310.5 119.0,310.5 120.0,310.5 121.0,310.5 122.0,310.5 123.0,310.5 124.0,310.5 125.0,310.5 126.0,310.5 127.0,310.5 128.0,310.5 129.0,310.5 130.0,310.5 131.0,310.5 132.0,310.5 133.0,310.5 134.0,310.5 135.0,310.5 136.0,310.5 137.0,310.5 138.0,310.5 139.0,310.5 140.0,310.5 141.0,310.5 142.0,310.5 143.0,310.5 144.0,310.5 145.0,310.5 146.0,310.5 147.0,310.5 148.0,310.5 149.0,310.5 150.0,310.5 151.0,310.5 152.0,310.5 153.0,310.5 154.0,310.5 155.0,310.5 156.0,311.0 157.0,311.0 158.0,311.5 159.0,311.5 160.0,311.5 161.0,311.5 162.0,311.5 163.0,311.5 164.0,311.5 165.0,311.5 166.0,311.5 167.0,311.5 168.0,311.5 169.0,311.5 170.0,311.5 171.0,311.5 172.0,311.5 173.0,311.5 174.0,312.0 175.0,312.0 176.0,312.0 177.0,312.0 178.0,312.5 179.0,312.5 180.0,312.5 181.0,312.5 182.0,313.0 183.0,313.0 184.0,313.0 185.0,313.0 186.0,313.0 187.0,313.0 188.0,313.0 189.0,313.0 190.0,313.0 191.0,313.0 192.0,313.0 193.0,313.0 194.0,313.0 195.0,313.0 196.0,313.0 197.0,313.0 198.0,313.0 199.0,313.0 200.0,313.0 201.0,313.0 202.0,313.0 203.0,313.0 204.0,313.0 205.0,313.0 206.0,313.0 207.0,313.0 208.0,313.0 209.0,313.0 210.0,313.0 211.0,313.0 212.0,313.0 213.0,313.0 214.0,313.0 215.0,313.0 216.0,313.0 217.0,313.0 218.0,313.0 219.0,312.5 220.0,312.5 221.0,312.0 222.0,312.0 223.0,312.0 224.0,311.5 225.0,311.5 226.0,311.5 227.0,311.5 228.0,311.0 229.0,311.0 230.0,311.0 231.0,311.0 232.0,311.0 233.0,310.5 234.0,310.5 235.0,310.5 236.0,310.5 237.0,310.5 238.0,310.0 239.0,310.0 240.0,310.0 241.0,310.0 242.0,310.0 243.0,310.0 244.0,310.0 245.0,309.5 246.0,309.5 247.0,309.5 248.0,309.5 249.0,309.5 250.0,309.5 251.0,309.5 252.0,309.5 253.0,309.5 254.0,309.5 255.0,309.5 256.0,309.5 257.0,309.5 258.0,309.5 259.0,309.5 260.0,309.5 261.0,309.5 262.0,309.5 263.0,309.5 264.0,309.5 265.0,309.5 266.0,309.5 267.0,309.5 268.0,309.5 269.0,309.5 270.0,309.5 271.0,309.5 272.0,309.5 273.0,309.5 274.0,309.5 275.0,309.5 276.0,309.5 277.0,309.5 278.0,309.5 279.0,309.5 280.0,309.5 281.0,309.5 282.0,309.5 283.0,309.5 284.0,309.5 285.0,309.5 286.0,309.5 287.0,309.5 288.0,309.5 289.0,309.5 290.0,309.5 291.0,310.0 292.0,310.0 293.0,310.0 294.0,310.0 295.0,310.5 296.0,310.5 297.0,310.5 298.0,310.5 299.0,311.0 300.0,311.0 301.0,311.0 302.0,311.0 303.0,311.0 304.0,311.0 305.0,311.0 306.0,311.0 307.0,311.0 308.0,311.0 309.0,311.0 310.0,311.0 311.0,311.0 312.0,311.0 313.0,311.0 314.0,311.0 315.0,311.0 316.0,311.0 317.0,311.0 318.0,311.0 319.0,311.0 320.0,311.0 321.0,311.0 322.0,311.0 323.0,311.0 324.0,311.0 325.0,311.0 326.0,311.0 327.0,311.0 328.0,311.0 329.0,311.0 330.0,311.0 331.0,311.0 332.0,311.0 333.0,311.0 334.0,311.0 335.0,311.0 336.0,311.0 337.0,311.0 338.0,311.0 339.0,311.0 340.0,311.0 341.0,311.0 342.0,311.0 343.0,311.0 344.0,311.0 345.0,311.0 346.0,311.0 347.0,311.0 348.0,310.5 349.0,310.5 350.0,310.0 351.0,310.0 352.0,310.0 353.0,310.0 354.0,310.0 355.0,310.0 356.0,310.0 357.0,310.0 358.0,310.0 359.0,310.0 360.0,310.0 361.0,310.0 362.0,310.0 363.0,310.0 364.0,310.0 365.0,310.0 366.0,310.0 367.0,310.0 368.0,310.0 369.0,310.0 370.0,310.0 371.0,310.0 372.0,310.0 373.0,310.0 374.0,310.0 375.0,310.0 376.0,310.0 377.0,310.0 378.0,310.0 379.0,310.0 380.0,310.0 381.0,310.0 382.0,310.0 383.0,310.0 384.0,310.0 385.0,310.0 386.0,310.0 387.0,310.0 388.0,310.0 389.0,310.0 390.0,310.0 391.0,310.5 392.0,310.5 393.0,311.0 394.0,311.0 395.0,311.5 396.0,311.5 397.0,311.5 398.0,311.5 399.0,311.5 400.0,311.5 401.0,311.5 402.0,311.5 403.0,311.5 404.0,311.5 405.0,311.5 406.0,311.5 407.0,311.5 408.0,311.5 409.0,311.5 410.0,311.5 411.0,311.5 412.0,311.5 413.0,311.5 414.0,311.5 415.0,311.5 416.0,311.5 417.0,311.5 418.0,311.5 419.0,311.5 420.0,311.5 421.0,311.5 422.0,311.5 423.0,311.5 424.0,311.5 425.0,311.5 426.0,311.5 427.0,311.5 428.0,311.5 429.0,311.5 430.0,311.5 431.0,311.5 432.0,311.5 433.0,311.5 434.0,311.5 435.0,311.5 436.0,311.5 437.0,311.0 438.0,311.0 439.0,310.5 440.0,310.5 441.0,310.5 442.0,310.5 443.0,310.5 444.0,310.5 445.0,310.5 446.0,310.5 447.0,310.5 448.0,310.5 449.0,310.5 450.0,310.5 451.0,310.5 452.0,310.5 453.0,310.5 454.0,310.5 455.0,310.5 456.0,310.5 457.0,310.5 458.0,310.5 459.0,310.5 460.0,310.5 461.0,310.5 462.0,310.5 463.0,310.5 464.0,310.5 465.0,310.5 466.0,310.5 467.0,310.5 468.0,310.5 469.0,310.5 470.0,310.5 471.0,310.5 472.0,310.5 473.0,310.5 474.0,310.5 475.0,310.5 476.0,310.5 477.0,310.5 478.0,310.5 479.0,310.5 480.0,310.5 481.0,310.5 482.0,311.0 483.0,311.0 484.0,311.5 485.0,311.5 486.0,311.5 487.0,311.5 488.0,311.5 489.0,311.5 490.0,311.5 491.0,311.5 492.0,311.5 493.0,311.5 494.0,311.5 495.0,311.5 496.0,311.5 497.0,311.5 498.0,311.5 499.0,311.5 500.0,312.0 501.0,312.0 502.0,312.0 503.0,312.0 504.0,312.5 505.0,312.5 506.0,312.5 507.0,312.5 508.0,313.0 509.0,313.0 510.0,313.0 511.0,313.0 512.0,313.0 513.0,313.0 514.0,313.0 515.0,313.0 516.0,313.0 517.0,313.0 518.0,313.0 519.0,313.0 520.0,313.0 521.0,313.0 522.0,313.0 523.0,313.0 524.0,313.0 525.0,313.0 526.0,313.0 527.0,313.0 528.0,313.0 529.0,313.0 530.0,313.0 531.0,313.0 532.0,313.0 533.0,313.0 534.0,313.0 535.0,313.0 536.0,313.0 537.0,313.0 538.0,313.0 539.0,313.0 540.0,313.0 541.0,313.0 542.0,313.0 543.0,313.0 544.0,313.0 545.0,312.5 546.0,312.5 547.0,312.0 548.0,312.0 549.0,312.0 550.0,311.5 551.0,311.5 552.0,311.5 553.0,311.5 554.0,311.0 555.0,311.0 556.0,311.0 557.0,311.0 558.0,311.0 559.0,310.5 560.0,310.5 561.0,310.5 562.0,310.5 563.0,310.5 564.0,310.0 565.0,310.0 566.0,310.0 567.0,310.0 568.0,310.0 569.0,310.0 570.0,310.0 571.0,309.5 572.0,309.5 573.0,309.5 574.0,309.5 575.0,309.5 576.0,309.5 577.0,309.5 578.0,309.5 579.0,309.5 580.0,309.5 581.0,309.5 582.0,309.5 583.0,309.5 584.0,309.5 585.0,309.5 586.0,309.5 587.0,309.5 588.0,309.5 589.0,309.5 590.0,309.5 591.0,309.5 592.0,309.5 593.0,309.5 594.0,309.5 595.0,309.5 596.0,309.5 597.0,309.5 598.0,309.5 599.0,309.5 600.0,309.5 601.0,309.5 602.0,309.5 603.0,309.5 604.0,309.5 605.0,309.5 606.0,309.5 607.0,309.5 608.0,309.5 609.0,309.5 610.0,309.5 611.0,309.5 612.0,309.5 613.0,309.5 614.0,309.5 615.0,309.5 616.0,309.5 617.0,310.0 618.0,310.0 619.0,310.0 620.0,310.0 621.0,310.5 622.0,310.5 623.0,310.5 624.0,310.5 625.0,311.0 626.0,311.0 627.0,311.0 628.0,311.0 629.0,311.0 630.0,311.0 631.0,311.0 632.0,311.0 633.0,311.0 634.0,311.0 635.0,311.0 636.0,311.0 637.0,311.0 638.0,311.0 639.0,311.0 640.0,311.0 641.0,311.0 642.0,311.0 643.0,311.0 644.0,311.0 645.0,311.0 646.0,311.0 647.0,311.0 648.0,311.0 649.0,311.0 650.0,311.0 651.0,311.0 652.0,311.0 653.0,311.0 654.0,311.0 655.0,311.0 656.0,311.0 657.0,311.0 658.0,311.0 659.0,311.0 660.0,311.0 661.0,311.0 662.0,311.0 663.0,311.0 664.0,311.0 665.0,311.0 666.0,311.0 667.0,311.0 668.0,311.0 669.0,311.0 670.0,311.0 671.0,311.0 672.0,311.0 673.0,311.0 674.0,310.5 675.0,310.5 676.0,310.0 677.0,310.0 678.0,310.0 679.0,310.0 680.0,310.0 681.0,310.0 682.0,310.0 683.0,310.0 684.0,310.0 685.0,310.0 686.0,310.0 687.0,310.0 688.0,310.0 689.0,310.0 690.0,310.0 691.0,310.0 692.0,310.0 693.0,310.0 694.0,310.0 695.0,310.0 696.0,310.0 697.0,310.0 698.0,310.0 699.0,310.0 700.0,310.0 701.0,310.0 702.0,310.0 703.0,310.0 704.0,310.0 705.0,310.0 706.0,310.0 707.0,310.0 708.0,310.0 709.0,310.0 710.0,310.0 711.0,310.0 712.0,310.0 713.0,310.0 714.0,310.0 715.0,310.0 716.0,310.0 717.0,310.5 718.0,310.5 719.0,311.0 720.0,311.0 721.0,311.5 722.0,311.5 723.0,311.5 724.0,311.5 725.0,311.5 726.0,311.5 727.0,311.5 728.0,311.5 729.0,311.5 730.0,311.5 731.0,311.5 732.0,311.5 733.0,311.5 734.0,311.5 735.0,311.5 736.0,311.5 737.0,311.5 738.0,311.5 739.0,311.5 740.0,311.5 741.0,311.5 742.0,311.5 743.0,311.5 744.0,311.5 745.0,311.5 746.0,311.5 747.0,311.5 748.0,311.5 749.0,311.5 750.0,311.5 751.0,311.5 752.0,311.5 753.0,311.5 754.0,311.5 755.0,311.5 756.0,311.5 757.0,311.5 758.0,311.5 759.0,311.5 760.0,311.5 761.0,311.5 762.0,311.5 763.0,311.0 764.0,311.0 765.0,310.5 766.0,310.5 767.0,310.5 768.0,310.5 769.0,310.5 770.0,310.5 771.0,310.5 772.0,310.5 773.0,310.5 774.0,310.5 775.0,310.5 776.0,310.5 777.0,310.5 778.0,310.5 779.0,310.5 780.0,310.5 781.0,310.5 782.0,310.5 783.0,310.5 784.0,310.5 785.0,310.5 786.0,310.5 787.0,310.5 788.0,310.5 789.0,310.5 790.0,310.5 791.0,310.5 792.0,310.5 793.0,310.5 794.0,310.5 795.0,310.5 796.0,310.5 797.0,310.5 798.0,310.5 799.0,310.5 800.0,310.5 801.0,310.5 802.0,310.5 803.0,310.5 804.0,310.5 805.0,310.5 806.0,310.5 807.0,310.5 808.0,311.0 809.0,311.0 810.0,311.5 811.0,311.5 812.0,311.5 813.0,311.5 814.0,311.5 815.0,311.5 816.0,311.5 817.0,311.5 818.0,311.5 819.0,311.5 820.0,311.5 821.0,311.5 822.0,311.5 823.0,311.5 824.0,311.5 825.0,311.5 826.0,312.0 827.0,312.0 828.0,312.0 829.0,312.0 830.0,312.5 831.0,312.5 832.0,312.5 833.0,312.5 834.0,313.0 835.0,313.0 836.0,313.0 837.0,313.0 838.0,313.0 839.0,313.0 840.0,313.0 841.0,313.0 842.0,313.0 843.0,313.0 844.0,313.0 845.0,313.0 846.0,313.0 847.0,313.0 848.0,313.0 849.0,313.0 850.0,313.0 851.0,313.0 852.0,313.0 853.0,313.0 854.0,313.0 855.0,313.0 856.0,313.0 857.0,313.0 858.0,313.0 859.0,313.0 860.0,313.0 861.0,313.0 862.0,313.0 863.0,313.0 864.0,313.0 865.0,313.0 866.0,313.0 867.0,313.0 868.0,313.0 869.0,313.0 870.0,313.0 871.0,312.5 872.0,312.5 873.0,312.0 874.0,312.0 875.0,312.0 876.0,311.5 877.0,311.5 878.0,311.5 879.0,311.5 880.0,311.0 881.0,311.0 882.0,311.0 883.0,311.0 884.0,311.0 885.0,310.5 886.0,310.5 887.0,310.5 888.0,310.5 889.0,310.5 890.0,310.0 891.0,310.0 892.0,310.0 893.0,310.0 894.0,310.0 895.0,310.0 896.0,310.0 897.0,309.5 898.0,309.5 899.0,309.5 900.0,309.5 901.0,309.5 902.0,309.5 903.0,309.5 904.0,309.5 905.0,309.5 906.0,309.5 907.0,309.5 908.0,309.5 909.0,309.5 910.0,309.5 911.0,309.5 912.0,309.5 913.0,309.5 914.0,309.5 915.0,309.5 916.0,309.5 917.0,309.5 918.0,309.5 919.0,309.5 920.0,309.5 921.0,309.5 922.0,309.5 923.0,309.5 924.0,309.5 925.0,309.5 926.0,309.5 927.0,309.5 928.0,309.5 929.0,309.5 930.0,309.5 931.0,309.5 932.0,309.5 933.0,309.5 934.0,309.5 935.0,309.5 936.0,309.5 937.0,309.5 938.0,309.5 939.0,309.5 940.0,309.5 941.0,309.5 942.0,309.5 943.0,310.0 944.0,310.0 945.0,310.0 946.0,310.0 947.0,310.5 948.0,310.5 949.0,310.5 950.0,310.5 951.0,311.0 952.0,311.0 953.0,311.0 954.0,311.0 955.0,311.0 956.0,311.0 957.0,311.0 958.0,311.0 959.0,311.0 960.0,311.0 961.0,311.0 962.0,311.0 963.0,311.0 964.0,311.0 965.0,311.0 966.0,311.0 967.0,311.0 968.0,311.0 969.0,311.0 970.0,311.0 971.0,311.0 972.0,311.0 973.0,311.0 974.0,311.0 975.0,311.0 976.0,311.0 977.0,311.0 978.0,311.0 979.0,311.0 980.0,311.0 981.0,311.0 982.0,311.0 983.0,311.0 984.0,311.0 985.0,311.0 986.0,311.0 987.0,311.0 988.0,311.0 989.0,311.0 990.0,311.0 991.0,311.0 992.0,311.0 993.0,311.0 994.0,311.0 995.0,311.0 996.0,311.0 997.0,311.0 998.0,311.0 999.0,311.0 1000.0,310.5 1001.0,310.5 1002.0,310.0 1003.0,310.0 1004.0,310.0 1005.0,310.0 1006.0,310.0 1007.0,310.0 1008.0,310.0 1009.0,310.0 1010.0,310.0 1011.0,310.0 1012.0,310.0 1013.0,310.0 1014.0,310.0 1015.0,310.0 1016.0,310.0 1017.0,310.0 1018.0,310.0 1019.0,310.0 1020.0,310.0 1021.0,310.0 1022.0,310.0 1023.0,310.0 1024.0,310.0 1025.0,310.0 1026.0,310.0 1027.0,310.0 1028.0,310.0 1029.0,310.0 1030.0,310.0 1031.0,310.0 1032.0,310.0 1033.0,310.0 1034.0,310.0 1035.0,310.0 1036.0,310.0 1037.0,310.0 1038.0,310.0 1039.0,310.0 1040.0,310.0 1041.0,310.0 1042.0,310.0 1043.0,310.5 1044.0,310.5 1045.0,311.0 1046.0,311.0 1047.0,311.5 1048.0,311.5 1049.0,311.5 1050.0,311.5 1051.0,311.5 1052.0,311.5 1053.0,311.5 1054.0,311.5 1055.0,311.5 1056.0,311.5 1057.0,311.5 1058.0,311.5 1059.0,311.5 1060.0,311.5 1061.0,311.5 1062.0,311.5 1063.0,311.5 1064.0,311.5 1065.0,311.5 1066.0,311.5 1067.0,311.5 1068.0,311.5 1069.0,311.5 1070.0,311.5 1071.0,311.5 1072.0,311.5 1073.0,311.5 1074.0,311.5 1075.0,311.5 1076.0,311.5 1077.0,311.5 1078.0,311.5 1079.0,311.5 1080.0,311.5 1081.0,311.5 1082.0,311.5 1083.0,311.5 1084.0,311.5 1085.0,311.5 1086.0,311.5 1087.0,311.5 1088.0,311.5 1089.0,311.0 1090.0,311.0 1091.0,310.5 1092.0,310.5 1093.0,310.5 1094.0,310.5 1095.0,310.5 1096.0,310.5 1097.0,310.5 1098.0,310.5 1099.0,310.5 1100.0,310.5 1101.0,310.5 1102.0,310.5 1103.0,310.5 1104.0,310.5 1105.0,310.5 1106.0,310.5 1107.0,310.5 1108.0,310.5 1109.0,310.5 1110.0,310.5 1111.0,310.5 1112.0,310.5 1113.0,310.5 1114.0,310.5 1115.0,310.5 1116.0,310.5 1117.0,310.5 1118.0,310.5 1119.0,310.5 1120.0,310.5 1121.0,310.5 1122.0,310.5 1123.0,310.5 1124.0,310.5 1125.0,310.5 1126.0,310.5 1127.0,310.5 1128.0,310.5 1129.0,310.5 1130.0,310.5 1131.0,310.5 1132.0,310.5 1133.0,310.5 1134.0,311.0 1135.0,311.0 1136.0,311.5 1137.0,311.5 1138.0,311.5 1139.0,311.5 1140.0,311.5 1141.0,311.5 1142.0,311.5 1143.0,311.5 1144.0,311.5 1145.0,311.5 1146.0,311.5 1147.0,311.5 1148.0,311.5 1149.0,311.5 1150.0,311.5 1151.0,311.5 1152.0,312.0 1153.0,312.0 1154.0,312.0 1155.0,312.0 1156.0,312.5 1157.0,312.5 1158.0,312.5 1159.0,312.5 1160.0,313.0 1161.0,313.0 1162.0,313.0 1163.0,313.0 1164.0,313.0 1165.0,313.0 1166.0,313.0 1167.0,313.0 1168.0,313.0 1169.0,313.0 1170.0,313.0 1171.0,313.0 1172.0,313.0 1173.0,313.0 1174.0,313.0 1175.0,313.0 1176.0,313.0 1177.0,313.0 1178.0,313.0 1179.0,313.0 1180.0,313.0 1181.0,313.0 1182.0,313.0 1183.0,313.0 1184.0,313.0 1185.0,313.0 1186.0,313.0 1187.0,313.0 1188.0,313.0 1189.0,313.0 1190.0,313.0 1191.0,313.0 1192.0,313.0 1193.0,313.0 1194.0,313.0 1195.0,313.0 1196.0,313.0 1197.0,312.5 1198.0,312.5 1199.0,312.0 1200.0,312.0 1201.0,312.0 1202.0,311.5 1203.0,311.5 1204.0,311.5 1205.0,311.5 1206.0,311.0 1207.0,311.0 1208.0,311.0 1209.0,311.0 1210.0,311.0 1211.0,310.5 1212.0,310.5 1213.0,310.5 1214.0,310.5 1215.0,310.5 1216.0,310.0 1217.0,310.0 1218.0,310.0 1219.0,310.0 1220.0,310.0 1221.0,310.0 1222.0,310.0 1223.0,309.5 1224.0,309.5 1225.0,309.5 1226.0,309.5 1227.0,309.5 1228.0,309.5 1229.0,309.5 1230.0,309.5 1231.0,309.5 1232.0,309.5 1233.0,309.5 1234.0,309.5 1235.0,309.5 1236.0,309.5 1237.0,309.5 1238.0,309.5 1239.0,309.5 1240.0,309.5 1241.0,309.5 1242.0,309.5 1243.0,309.5 1244.0,309.5 1245.0,309.5 1246.0,309.5 1247.0,309.5 1248.0,309.5 1249.0,309.5 1250.0,309.5 1251.0,309.5 1252.0,309.5 1253.0,309.5 1254.0,309.5 1255.0,309.5 1256.0,309.5 1257.0,309.5 1258.0,309.5 1259.0,309.5 1260.0,309.5 1261.0,309.5 1262.0,309.5 1263.0,309.5 1264.0,309.5 1265.0,309.5 1266.0,309.5 1267.0,309.5 1268.0,309.5 1269.0,310.0 1270.0,310.0 1271.0,310.0 1272.0,310.0 1273.0,310.5 1274.0,310.5 1275.0,310.5 1276.0,310.5 1277.0,311.0 1278.0,311.0 1279.0,311.0 1280.0,311.0 1281.0,311.0 1282.0,311.0 1283.0,311.0 1284.0,311.0 1285.0,311.0 1286.0,311.0 1287.0,311.0 1288.0,311.0 1289.0,311.0 1290.0,311.0 1291.0,311.0 1292.0,311.0 1293.0,311.0 1294.0,311.0 1295.0,311.0 1296.0,311.0 1297.0,311.0 1298.0,311.0 1299.0,311.0 1300.0,311.0 1301.0,311.0 1302.0,311.0 1303.0,311.0 1304.0,311.0 1305.0,311.0 1306.0,311.0 1307.0,311.0 1308.0,311.0 1309.0,311.0 1310.0,311.0 1311.0,311.0 1312.0,311.0 1313.0,311.0 1314.0,311.0 1315.0,311.0 1316.0,311.0 1317.0,311.0 1318.0,311.0 1319.0,311.0 1320.0,311.0 1321.0,311.0 1322.0,311.0 1323.0,311.0 1324.0,311.0 1325.0,311.0 1326.0,310.5 1327.0,310.5 1328.0,310.0 1329.0,310.0 1330.0,310.0 1331.0,310.0 1332.0,310.0 1333.0,310.0 1334.0,310.0 1335.0,310.0 1336.0,310.0 1337.0,310.0 1338.0,310.0 1339.0,310.0 1340.0,310.0 1341.0,310.0 1342.0,310.0 1343.0,310.0 1344.0,310.0 1345.0,310.0 1346.0,310.0 1347.0,310.0 1348.0,310.0 1349.0,310.0 1350.0,310.0 1351.0,310.0 1352.0,310.0 1353.0,310.0 1354.0,310.0 1355.0,310.0 1356.0,310.0 1357.0,310.0 1358.0,310.0 1359.0,310.0 1360.0,310.0 1361.0,310.0 1362.0,310.0 1363.0,310.0 1364.0,310.0 1365.0,310.0 1366.0,310.0 1367.0,310.0 1368.0,310.0 1369.0,310.5 1370.0,310.5 1371.0,311.0 1372.0,311.0 1373.0,311.5 1374.0,311.5 1375.0,311.5 1376.0,311.5 1377.0,311.5 1378.0,311.5 1379.0,311.5 1380.0,311.5 1381.0,311.5 1382.0,311.5 1383.0,311.5 1384.0,311.5 1385.0,311.5 1386.0,311.5 1387.0,311.5 1388.0,311.5 1389.0,311.5 1390.0,311.5 1391.0,311.5 1392.0,311.5 1393.0,311.5 1394.0,311.5 1395.0,311.5 1396.0,311.5 1397.0,311.5 1398.0,311.5 1399.0,311.5 1400.0,311.5 1401.0,311.5 1402.0,311.5 1403.0,311.5 1404.0,311.5 1405.0,311.5 1406.0,311.5 1407.0,311.5 1408.0,311.5 1409.0,311.5 1410.0,311.5 1411.0,311.5 1412.0,311.5 1413.0,311.5 1414.0,311.5 1415.0,311.0 1416.0,311.0 1417.0,310.5 1418.0,310.5 1419.0,310.5 1420.0,310.5 1421.0,310.5 1422.0,310.5 1423.0,310.5 1424.0,310.5 1425.0,310.5 1426.0,310.5 1427.0,310.5 1428.0,310.5 1429.0,310.5 1430.0,310.5 1431.0,310.5 1432.0,310.5 1433.0,310.5 1434.0,310.5 1435.0,310.5 1436.0,310.5 1437.0,310.5 1438.0,310.5 1439.0,310.5 1440.0,310.5 1441.0,310.5 1442.0,310.5 1443.0,310.5 1444.0,310.5 1445.0,310.5 1446.0,310.5 1447.0,310.5 1448.0,310.5 1449.0,310.5 1450.0,310.5 1451.0,310.5 1452.0,310.5 1453.0,310.5 1454.0,310.5 1455.0,310.5 1456.0,310.5 1457.0,310.5 1458.0,310.5 1459.0,310.5 1460.0,311.0 1461.0,311.0 1462.0,311.5 1463.0,311.5 1464.0,311.5 1465.0,311.5 1466.0,311.5 1467.0,311.5 1468.0,311.5 1469.0,311.5 1470.0,311.5 1471.0,311.5 1472.0,311.5 1473.0,311.5 1474.0,311.5 1475.0,311.5 1476.0,311.5 1477.0,311.5 1478.0,312.0 1479.0,312.0 1480.0,312.0 1481.0,312.0 1482.0,312.5 1483.0,312.5 1484.0,312.5 1485.0,312.5 1486.0,313.0 1487.0,313.0 1488.0,313.0 1489.0,313.0 1490.0,313.0 1491.0,313.0 1492.0,313.0 1493.0,313.0 1494.0,313.0 1495.0,313.0 1496.0,313.0 1497.0,313.0 1498.0,313.0 1499.0,313.0 1500.0,313.0 1501.0,313.0 1502.0,313.0 1503.0,313.0 1504.0,313.0 1505.0,313.0 1506.0,313.0 1507.0,313.0 1508.0,313.0 1509.0,313.0 1510.0,313.0 1511.0,313.0 1512.0,313.0 1513.0,313.0 1514.0,313.0 1515.0,313.0 1516.0,313.0 1517.0,313.0 1518.0,313.0 1519.0,313.0 1520.0,313.0 1521.0,313.0 1522.0,313.0 1523.0,312.5 1524.0,312.5 1525.0,312.0 1526.0,312.0 1527.0,312.0 1528.0,311.5 1529.0,311.5 1530.0,311.5 1531.0,311.5 1532.0,311.0 1533.0,311.0 1534.0,311.0 1535.0,311.0 1536.0,311.0 1537.0,310.5 1538.0,310.5 1539.0,310.5 1540.0,310.5 1541.0,310.5 1542.0,310.0 1543.0,310.0 1544.0,310.0 1545.0,310.0 1546.0,310.0 1547.0,310.0 1548.0,310.0 1549.0,309.5 1550.0,309.5 1551.0,309.5 1552.0,309.5 1553.0,309.5 1554.0,309.5 1555.0,309.5 1556.0,309.5 1557.0,309.5 1558.0,309.5 1559.0,309.5 1560.0,309.5 1561.0,309.5 1562.0,309.5 1563.0,309.5 1564.0,309.5 1565.0,309.5 1566.0,309.5 1567.0,309.5 1568.0,309.5 1569.0,309.5 1570.0,309.5 1571.0,309.5 1572.0,309.5 1573.0,309.5 1574.0,309.5 1575.0,309.5 1576.0,309.5 1577.0,309.5 1578.0,309.5 1579.0,309.5 1580.0,309.5 1581.0,309.5 1582.0,309.5 1583.0,309.5 1584.0,309.5 1585.0,309.5 1586.0,309.5 1587.0,309.5 1588.0,309.5 1589.0,309.5 1590.0,309.5 1591.0,309.5 1592.0,309.5 1593.0,309.5 1594.0,309.5 1595.0,310.0 1596.0,310.0 1597.0,310.0 1598.0,310.0 1599.0,310.5 1600.0,310.5 1601.0,310.5 1602.0,310.5 1603.0,311.0 1604.0,311.0 1605.0,311.0 1606.0,311.0 1607.0,311.0 1608.0,311.0 1609.0,311.0 1610.0,311.0 1611.0,311.0 1612.0,311.0 1613.0,311.0 1614.0,311.0 1615.0,311.0 1616.0,311.0 1617.0,311.0 1618.0,311.0 1619.0,311.0 1620.0,311.0 1621.0,311.0 1622.0,311.0 1623.0,311.0 1624.0,311.0 1625.0,311.0 1626.0,311.0 1627.0,311.0 1628.0,311.0 1629.0,311.0 1630.0,311.0 1631.0,311.0 1632.0,311.0 1633.0,311.0 1634.0,311.0 1635.0,311.0 1636.0,311.0 1637.0,311.0 1638.0,311.0 1639.0,311.0 1640.0,311.0 1641.0,311.0 1642.0,311.0 1643.0,311.0 1644.0,311.0 1645.0,311.0 1646.0,311.0 1647.0,311.0 1648.0,311.0 1649.0,311.0 1650.0,311.0 1651.0,311.0 1652.0,310.5 1653.0,310.5 1654.0,310.0 1655.0,310.0 1656.0,310.0 1657.0,310.0 1658.0,310.0 1659.0,310.0 1660.0,310.0 1661.0,310.0 1662.0,310.0 1663.0,310.0 1664.0,310.0" stroke="#30ff30" stroke-width="1" fill="none"/>
<polyline points="223.0,361.5 225.2,364.8 227.4,368.0 229.7,371.1 231.9,374.0 234.1,376.9 236.3,379.6 238.6,382.2 240.8,384.7 243.0,387.2 245.2,389.4 247.5,391.6 249.7,393.7 251.9,395.6 254.2,397.5 256.4,399.2 258.6,400.8 260.8,402.4 263.1,403.8 265.3,405.0 267.5,406.2 269.7,407.3 271.9,408.2 274.2,409.1 276.4,409.8 278.6,410.4 280.9,410.9 283.1,411.3 285.3,411.6 287.5,411.7 289.8,411.8 292.0,411.7 294.2,411.6 296.4,411.3 298.6,410.9 300.9,410.4 303.1,409.8 305.3,409.1 307.6,408.2 309.8,407.3 312.0,406.2 314.2,405.0 316.4,403.8 318.7,402.4 320.9,400.8 323.1,399.2 325.4,397.5 327.6,395.6 329.8,393.7 332.0,391.6 334.2,389.4 336.5,387.2 338.7,384.7 340.9,382.2 343.1,379.6 345.4,376.9 347.6,374.0 349.8,371.1 352.1,368.0 354.3,364.8 356.5,361.5" stroke="#ff1060" stroke-width="1.2" fill="none"/>
<polyline points="223.0,361.1 224.0,360.6 225.0,360.1 226.0,359.3 227.0,358.8 228.0,357.7 229.0,357.8 230.0,356.9 231.0,355.9 232.0,355.6 233.0,355.3 234.0,355.0 235.0,354.4 236.0,354.9 237.1,354.7 238.1,354.0 239.1,353.8 240.1,353.2 241.1,353.0 242.1,353.2 243.1,353.1 244.1,353.7 245.1,353.1 246.1,353.1 247.1,354.2 248.1,354.0 249.1,353.9 250.1,354.6 251.1,354.4 252.1,355.2 253.1,355.8 254.1,355.9 255.1,356.0 256.1,355.8 257.1,356.1 258.1,356.2 259.1,357.0 260.1,357.0 261.1,357.5 262.1,357.3 263.2,357.4 264.2,358.2 265.2,358.5 266.2,358.6 267.2,358.8 268.2,359.0 269.2,359.1 270.2,358.9 271.2,359.5 272.2,359.6 273.2,359.7 274.2,360.2 275.2,360.9 276.2,361.4 277.2,362.4 278.2,363.2 279.2,363.3 280.2,364.3 281.2,364.9 282.2,365.4 283.2,365.4 284.2,365.9 285.2,366.5 286.2,367.1 287.2,367.8 288.2,368.8 289.2,369.6 290.3,370.0 291.3,370.0 292.3,370.5 293.3,370.9 294.3,370.4 295.3,371.0 296.3,371.3 297.3,371.1 298.3,371.0 299.3,370.5 300.3,370.0 301.3,370.3 302.3,369.5 303.3,369.5 304.3,369.2 305.3,368.1 306.3,367.6 307.3,367.7 308.3,367.0 309.3,365.9 310.3,365.3 311.3,364.8 312.3,364.9 313.3,364.3 314.3,363.0 315.3,363.2 316.3,362.9 317.4,362.2 318.4,361.5 319.4,361.5 320.4,360.8 321.4,360.5 322.4,361.4 323.4,361.0 324.4,360.8 325.4,361.2 326.4,360.7 327.4,361.2 328.4,361.2 329.4,360.8 330.4,361.0 331.4,361.2 332.4,361.3 333.4,361.8 334.4,361.6 335.4,361.9 336.4,361.6 337.4,362.4 338.4,361.8 339.4,361.8 340.4,361.9 341.4,362.1 342.4,361.5 343.5,361.8 344.5,361.3 345.5,361.2 346.5,361.1 347.5,360.6 348.5,360.9 349.5,360.7 350.5,360.5 351.5,361.4 352.5,360.9 353.5,361.3 354.5,361.6 355.5,361.5 356.5,361.3" stroke="#f0f000" stroke-width="1.1" fill="none"/>
<polyline points="386.0,361.5 388.2,358.2 390.4,355.0 392.7,351.9 394.9,349.0 397.1,346.1 399.4,343.4 401.6,340.8 403.8,338.3 406.0,335.8 408.2,333.6 410.5,331.4 412.7,329.3 414.9,327.4 417.1,325.5 419.4,323.8 421.6,322.2 423.8,320.6 426.1,319.2 428.3,318.0 430.5,316.8 432.7,315.7 434.9,314.8 437.2,313.9 439.4,313.2 441.6,312.6 443.9,312.1 446.1,311.7 448.3,311.4 450.5,311.3 452.8,311.2 455.0,311.3 457.2,311.4 459.4,311.7 461.6,312.1 463.9,312.6 466.1,313.2 468.3,313.9 470.6,314.8 472.8,315.7 475.0,316.8 477.2,318.0 479.4,319.2 481.7,320.6 483.9,322.2 486.1,323.8 488.4,325.5 490.6,327.4 492.8,329.3 495.0,331.4 497.2,333.6 499.5,335.8 501.7,338.3 503.9,340.8 506.1,343.4 508.4,346.1 510.6,349.0 512.8,351.9 515.0,355.0 517.3,358.2 519.5,361.5" stroke="#ff1060" stroke-width="1.2" fill="none"/>
<polyline points="386.0,361.5 387.0,361.5 388.0,361.7 389.0,360.9 390.0,361.2 391.0,360.8 392.0,360.8 393.0,361.3 394.0,361.0 395.0,361.1 396.0,361.4 397.0,361.6 398.0,361.3 399.0,361.5 400.1,361.6 401.1,361.7 402.1,362.0 403.1,361.8 404.1,362.0 405.1,362.0 406.1,362.4 407.1,362.2 408.1,362.2 409.1,362.2 410.1,361.3 411.1,361.4 412.1,361.7 413.1,361.4 414.1,360.6 415.1,360.5 416.1,360.7 417.1,360.4 418.1,360.6 419.1,360.4 420.1,361.1 421.1,361.3 422.1,361.6 423.1,361.1 424.1,361.9 425.1,362.2 426.2,362.1 427.2,363.3 428.2,363.9 429.2,363.7 430.2,365.0 431.2,365.0 432.2,365.7 433.2,366.7 434.2,367.1 435.2,366.9 436.2,367.7 437.2,368.3 438.2,368.6 439.2,368.9 440.2,369.4 441.2,370.2 442.2,369.8 443.2,370.6 444.2,370.7 445.2,370.4 446.2,370.7 447.2,371.0 448.2,370.8 449.2,370.2 450.2,370.8 451.2,370.3 452.2,370.1 453.3,368.8 454.3,368.4 455.3,367.6 456.3,367.7 457.3,366.6 458.3,365.8 459.3,365.5 460.3,365.4 461.3,364.8 462.3,363.7 463.3,363.0 464.3,363.2 465.3,362.3 466.3,361.9 467.3,360.7 468.3,360.2 469.3,360.4 470.3,359.7 471.3,359.0 472.3,359.6 473.3,359.0 474.3,359.0 475.3,358.0 476.3,358.6 477.3,357.6 478.3,358.2 479.3,357.6 480.4,357.3 481.4,357.3 482.4,357.4 483.4,356.5 484.4,356.1 485.4,356.3 486.4,355.8 487.4,355.4 488.4,355.2 489.4,354.9 490.4,354.8 491.4,354.7 492.4,354.4 493.4,354.5 494.4,353.8 495.4,353.7 496.4,353.2 497.4,353.3 498.4,352.9 499.4,353.1 500.4,352.9 501.4,353.7 502.4,353.7 503.4,353.5 504.4,354.0 505.4,354.7 506.5,354.1 507.5,355.1 508.5,355.1 509.5,355.5 510.5,356.2 511.5,356.2 512.5,356.8 513.5,357.6 514.5,358.6 515.5,358.8 516.5,360.1 517.5,360.7 518.5,361.2 519.5,361.4" stroke="#f0f000" stroke-width="1.1" fill="none"/>
<polyline points="549.0,361.5 551.2,364.8 553.5,368.0 555.7,371.1 557.9,374.0 560.1,376.9 562.4,379.6 564.6,382.2 566.8,384.7 569.0,387.2 571.2,389.4 573.5,391.6 575.7,393.7 577.9,395.6 580.1,397.5 582.4,399.2 584.6,400.8 586.8,402.4 589.0,403.8 591.3,405.0 593.5,406.2 595.7,407.3 598.0,408.2 600.2,409.1 602.4,409.8 604.6,410.4 606.9,410.9 609.1,411.3 611.3,411.6 613.5,411.7 615.8,411.8 618.0,411.7 620.2,411.6 622.4,411.3 624.6,410.9 626.9,410.4 629.1,409.8 631.3,409.1 633.5,408.2 635.8,407.3 638.0,406.2 640.2,405.0 642.5,403.8 644.7,402.4 646.9,400.8 649.1,399.2 651.4,397.5 653.6,395.6 655.8,393.7 658.0,391.6 660.2,389.4 662.5,387.2 664.7,384.7 666.9,382.2 669.1,379.6 671.4,376.9 673.6,374.0 675.8,371.1 678.0,368.0 680.3,364.8 682.5,361.5" stroke="#ff1060" stroke-width="1.2" fill="none"/>
<polyline points="549.0,361.3 550.0,360.6 551.0,360.1 552.0,359.3 553.0,359.2 554.0,357.9 555.0,357.1 556.0,356.3 557.0,356.6 558.0,356.2 559.0,355.7 560.0,354.9 561.0,354.6 562.0,354.3 563.1,354.2 564.1,353.7 565.1,353.8 566.1,353.4 567.1,353.9 568.1,353.8 569.1,353.4 570.1,353.1 571.1,353.9 572.1,353.4 573.1,353.6 574.1,353.5 575.1,354.1 576.1,354.5 577.1,354.9 578.1,354.8 579.1,355.3 580.1,355.1 581.1,355.6 582.1,355.6 583.1,356.2 584.1,356.1 585.1,356.3 586.1,356.8 587.1,357.0 588.1,357.6 589.2,357.7 590.2,358.1 591.2,358.2 592.2,358.5 593.2,358.8 594.2,358.5 595.2,358.7 596.2,359.6 597.2,359.1 598.2,360.0 599.2,360.3 600.2,360.2 601.2,361.5 602.2,362.0 603.2,362.3 604.2,363.0 605.2,363.6 606.2,363.5 607.2,364.5 608.2,365.0 609.2,365.9 610.2,366.5 611.2,367.1 612.2,367.5 613.2,368.5 614.2,368.8 615.2,369.4 616.3,369.4 617.3,369.6 618.3,370.0 619.3,370.5 620.3,370.4 621.3,371.2 622.3,370.9 623.3,371.0 624.3,370.8 625.3,370.7 626.3,370.3 627.3,369.5 628.3,369.9 629.3,369.5 630.3,368.7 631.3,368.3 632.3,367.9 633.3,366.8 634.3,367.0 635.3,366.0 636.3,365.3 637.3,364.9 638.3,364.8 639.3,363.7 640.3,363.6 641.3,363.4 642.3,362.4 643.4,361.9 644.4,361.7 645.4,361.6 646.4,361.5 647.4,361.1 648.4,361.1 649.4,360.4 650.4,360.5 651.4,360.6 652.4,361.0 653.4,360.6 654.4,361.0 655.4,360.6 656.4,360.8 657.4,361.2 658.4,361.7 659.4,361.9 660.4,362.0 661.4,361.7 662.4,362.0 663.4,362.0 664.4,361.9 665.4,361.5 666.4,362.2 667.4,361.4 668.4,362.0 669.5,361.9 670.5,360.8 671.5,361.2 672.5,361.4 673.5,361.5 674.5,360.9 675.5,360.8 676.5,360.7 677.5,361.5 678.5,360.9 679.5,361.4 680.5,361.0 681.5,361.5 682.5,362.0" stroke="#f0f000" stroke-width="1.1" fill="none"/>
<polyline points="712.0,361.5 714.2,358.2 716.5,355.0 718.7,351.9 720.9,349.0 723.1,346.1 725.4,343.4 727.6,340.8 729.8,338.3 732.0,335.8 734.2,333.6 736.5,331.4 738.7,329.3 740.9,327.4 743.1,325.5 745.4,323.8 747.6,322.2 749.8,320.6 752.0,319.2 754.3,318.0 756.5,316.8 758.7,315.7 761.0,314.8 763.2,313.9 765.4,313.2 767.6,312.6 769.9,312.1 772.1,311.7 774.3,311.4 776.5,311.3 778.8,311.2 781.0,311.3 783.2,311.4 785.4,311.7 787.6,312.1 789.9,312.6 792.1,313.2 794.3,313.9 796.5,314.8 798.8,315.7 801.0,316.8 803.2,318.0 805.5,319.2 807.7,320.6 809.9,322.2 812.1,323.8 814.4,325.5 816.6,327.4 818.8,329.3 821.0,331.4 823.2,333.6 825.5,335.8 827.7,338.3 829.9,340.8 832.1,343.4 834.4,346.1 836.6,349.0 838.8,351.9 841.0,355.0 843.3,358.2 845.5,361.5" stroke="#ff1060" stroke-width="1.2" fill="none"/>
<polyline points="712.0,361.1 713.0,361.8 714.0,361.4 715.0,361.7 716.0,361.4 717.0,360.8 718.0,361.4 719.0,361.0 720.0,360.5 721.0,360.5 722.0,361.1 723.0,361.1 724.0,361.1 725.0,361.1 726.1,361.4 727.1,361.5 728.1,362.1 729.1,361.4 730.1,362.2 731.1,362.3 732.1,361.6 733.1,362.4 734.1,362.1 735.1,362.1 736.1,361.3 737.1,361.3 738.1,361.1 739.1,361.5 740.1,361.0 741.1,360.7 742.1,360.7 743.1,360.6 744.1,360.4 745.1,360.4 746.1,361.2 747.1,360.8 748.1,361.6 749.1,361.2 750.1,361.5 751.1,362.1 752.2,362.1 753.2,362.8 754.2,363.9 755.2,364.3 756.2,364.8 757.2,365.2 758.2,366.1 759.2,366.7 760.2,366.8 761.2,367.4 762.2,367.3 763.2,368.5 764.2,368.7 765.2,369.5 766.2,369.8 767.2,369.8 768.2,369.9 769.2,371.0 770.2,370.3 771.2,370.8 772.2,370.7 773.2,370.7 774.2,371.0 775.2,371.1 776.2,370.1 777.2,370.2 778.2,369.4 779.3,369.2 780.3,368.5 781.3,367.7 782.3,367.1 783.3,366.5 784.3,366.6 785.3,365.6 786.3,364.7 787.3,364.8 788.3,364.4 789.3,363.3 790.3,362.4 791.3,361.9 792.3,361.2 793.3,361.0 794.3,360.2 795.3,359.9 796.3,359.5 797.3,359.5 798.3,359.5 799.3,359.1 800.3,358.6 801.3,358.4 802.3,358.3 803.3,357.9 804.3,357.7 805.3,357.2 806.4,357.3 807.4,357.7 808.4,356.6 809.4,356.8 810.4,356.6 811.4,356.6 812.4,355.7 813.4,355.6 814.4,355.3 815.4,355.2 816.4,355.1 817.4,355.3 818.4,354.9 819.4,354.6 820.4,353.5 821.4,353.3 822.4,353.8 823.4,353.8 824.4,353.3 825.4,353.4 826.4,352.8 827.4,353.3 828.4,354.0 829.4,354.1 830.4,354.4 831.4,354.7 832.5,354.3 833.5,354.4 834.5,354.8 835.5,355.5 836.5,356.0 837.5,356.7 838.5,357.0 839.5,357.6 840.5,358.4 841.5,358.9 842.5,359.8 843.5,360.0 844.5,361.3 845.5,361.2" stroke="#f0f000" stroke-width="1.1" fill="none"/>
<polyline points="875.0,361.5 877.2,364.8 879.5,368.0 881.7,371.1 883.9,374.0 886.1,376.9 888.4,379.6 890.6,382.2 892.8,384.7 895.0,387.2 897.2,389.4 899.5,391.6 901.7,393.7 903.9,395.6 906.1,397.5 908.4,399.2 910.6,400.8 912.8,402.4 915.0,403.8 917.3,405.0 919.5,406.2 921.7,407.3 924.0,408.2 926.2,409.1 928.4,409.8 930.6,410.4 932.9,410.9 935.1,411.3 937.3,411.6 939.5,411.7 941.8,411.8 944.0,411.7 946.2,411.6 948.4,411.3 950.6,410.9 952.9,410.4 955.1,409.8 957.3,409.1 959.5,408.2 961.8,407.3 964.0,406.2 966.2,405.0 968.5,403.8 970.7,402.4 972.9,400.8 975.1,399.2 977.4,397.5 979.6,395.6 981.8,393.7 984.0,391.6 986.2,389.4 988.5,387.2 990.7,384.7 992.9,382.2 995.1,379.6 997.4,376.9 999.6,374.0 1001.8,371.1 1004.0,368.0 1006.3,364.8 1008.5,361.5" stroke="#ff1060" stroke-width="1.2" fill="none"/>
<polyline points="875.0,361.9 876.0,361.2 877.0,360.3 878.0,359.4 879.0,358.7 880.0,358.3 881.0,357.6 882.0,356.4 883.0,355.8 884.0,355.9 885.0,355.6 886.0,355.0 887.0,354.5 888.0,354.6 889.1,353.8 890.1,353.8 891.1,353.8 892.1,354.1 893.1,353.6 894.1,353.7 895.1,353.3 896.1,353.1 897.1,353.2 898.1,354.0 899.1,354.0 900.1,353.8 901.1,353.8 902.1,354.6 903.1,355.1 904.1,355.1 905.1,355.1 906.1,355.7 907.1,356.2 908.1,355.8 909.1,355.8 910.1,356.4 911.1,356.7 912.1,357.2 913.1,357.0 914.1,357.8 915.2,357.9 916.2,357.9 917.2,357.8 918.2,358.7 919.2,358.3 920.2,359.0 921.2,358.6 922.2,358.9 923.2,359.7 924.2,359.6 925.2,360.6 926.2,360.6 927.2,360.8 928.2,361.4 929.2,362.1 930.2,362.9 931.2,363.8 932.2,363.5 933.2,364.3 934.2,364.7 935.2,366.0 936.2,365.8 937.2,366.4 938.2,367.0 939.2,368.0 940.2,369.0 941.2,369.6 942.3,369.9 943.3,370.5 944.3,370.8 945.3,370.4 946.3,370.5 947.3,371.3 948.3,371.1 949.3,370.4 950.3,370.9 951.3,370.4 952.3,370.2 953.3,369.8 954.3,369.3 955.3,368.7 956.3,368.5 957.3,368.1 958.3,368.2 959.3,366.8 960.3,367.2 961.3,365.9 962.3,365.5 963.3,365.4 964.3,364.8 965.3,363.9 966.3,362.9 967.3,362.9 968.3,362.3 969.4,362.5 970.4,361.4 971.4,361.3 972.4,361.6 973.4,360.6 974.4,360.8 975.4,361.2 976.4,361.1 977.4,360.3 978.4,360.3 979.4,360.4 980.4,361.3 981.4,360.8 982.4,361.5 983.4,361.8 984.4,361.4 985.4,361.5 986.4,362.3 987.4,362.1 988.4,361.8 989.4,362.2 990.4,361.8 991.4,361.6 992.4,361.3 993.4,361.9 994.4,362.0 995.5,361.6 996.5,361.8 997.5,360.7 998.5,360.8 999.5,361.0 1000.5,361.5 1001.5,361.4 1002.5,360.9 1003.5,360.8 1004.5,361.1 1005.5,361.3 1006.5,361.8 1007.5,361.1 1008.5,361.8" stroke="#f0f000" stroke-width="1.1" fill="none"/>
<polyline points="1038.0,361.5 1040.2,358.2 1042.5,355.0 1044.7,351.9 1046.9,349.0 1049.1,346.1 1051.3,343.4 1053.6,340.8 1055.8,338.3 1058.0,335.8 1060.2,333.6 1062.5,331.4 1064.7,329.3 1066.9,327.4 1069.2,325.5 1071.4,323.8 1073.6,322.2 1075.8,320.6 1078.0,319.2 1080.3,318.0 1082.5,316.8 1084.7,315.7 1087.0,314.8 1089.2,313.9 1091.4,313.2 1093.6,312.6 1095.8,312.1 1098.1,311.7 1100.3,311.4 1102.5,311.3 1104.8,311.2 1107.0,311.3 1109.2,311.4 1111.4,311.7 1113.7,312.1 1115.9,312.6 1118.1,313.2 1120.3,313.9 1122.5,314.8 1124.8,315.7 1127.0,316.8 1129.2,318.0 1131.5,319.2 1133.7,320.6 1135.9,322.2 1138.1,323.8 1140.3,325.5 1142.6,327.4 1144.8,329.3 1147.0,331.4 1149.2,333.6 1151.5,335.8 1153.7,338.3 1155.9,340.8 1158.2,343.4 1160.4,346.1 1162.6,349.0 1164.8,351.9 1167.0,355.0 1169.3,358.2 1171.5,361.5" stroke="#ff1060" stroke-width="1.2" fill="none"/>
<polyline points="1038.0,361.7 1039.0,361.8 1040.0,361.6 1041.0,361.4 1042.0,361.0 1043.0,360.9 1044.0,360.9 1045.0,361.3 1046.0,360.6 1047.0,360.7 1048.0,361.4 1049.0,360.9 1050.0,360.9 1051.0,361.0 1052.1,361.6 1053.1,361.5 1054.1,362.3 1055.1,362.3 1056.1,362.4 1057.1,361.8 1058.1,361.6 1059.1,361.6 1060.1,361.9 1061.1,361.9 1062.1,361.5 1063.1,361.1 1064.1,361.1 1065.1,361.2 1066.1,361.1 1067.1,361.1 1068.1,361.1 1069.1,361.0 1070.1,360.4 1071.1,361.2 1072.1,360.7 1073.1,361.1 1074.1,361.1 1075.1,361.6 1076.1,361.4 1077.1,361.8 1078.2,362.2 1079.2,362.5 1080.2,363.8 1081.2,364.0 1082.2,364.4 1083.2,365.0 1084.2,366.2 1085.2,366.2 1086.2,366.5 1087.2,367.5 1088.2,367.9 1089.2,368.7 1090.2,368.3 1091.2,369.2 1092.2,369.9 1093.2,370.3 1094.2,370.7 1095.2,370.1 1096.2,370.5 1097.2,370.5 1098.2,370.6 1099.2,371.4 1100.2,370.9 1101.2,371.0 1102.2,370.2 1103.2,370.4 1104.2,369.6 1105.3,368.9 1106.3,368.9 1107.3,368.5 1108.3,367.0 1109.3,366.9 1110.3,366.3 1111.3,365.3 1112.3,364.8 1113.3,364.1 1114.3,363.6 1115.3,363.1 1116.3,362.9 1117.3,362.4 1118.3,361.4 1119.3,360.6 1120.3,360.5 1121.3,360.4 1122.3,359.5 1123.3,359.3 1124.3,358.9 1125.3,359.2 1126.3,358.7 1127.3,358.0 1128.3,357.8 1129.3,358.0 1130.3,357.9 1131.3,357.8 1132.4,357.1 1133.4,356.9 1134.4,357.2 1135.4,356.7 1136.4,356.3 1137.4,356.1 1138.4,356.5 1139.4,355.6 1140.4,355.6 1141.4,355.2 1142.4,355.0 1143.4,355.3 1144.4,355.1 1145.4,354.1 1146.4,353.7 1147.4,354.0 1148.4,353.3 1149.4,353.0 1150.4,353.8 1151.4,353.3 1152.4,353.7 1153.4,353.3 1154.4,354.0 1155.4,353.8 1156.4,353.7 1157.4,353.8 1158.5,354.6 1159.5,355.0 1160.5,355.5 1161.5,355.1 1162.5,356.0 1163.5,356.1 1164.5,356.8 1165.5,357.1 1166.5,357.9 1167.5,359.0 1168.5,360.2 1169.5,360.1 1170.5,361.1 1171.5,361.8" stroke="#f0f000" stroke-width="1.1" fill="none"/>
<polyline points="1201.0,361.5 1203.2,364.8 1205.5,368.0 1207.7,371.1 1209.9,374.0 1212.1,376.9 1214.3,379.6 1216.6,382.2 1218.8,384.7 1221.0,387.2 1223.2,389.4 1225.5,391.6 1227.7,393.7 1229.9,395.6 1232.2,397.5 1234.4,399.2 1236.6,400.8 1238.8,402.4 1241.0,403.8 1243.3,405.0 1245.5,406.2 1247.7,407.3 1250.0,408.2 1252.2,409.1 1254.4,409.8 1256.6,410.4 1258.8,410.9 1261.1,411.3 1263.3,411.6 1265.5,411.7 1267.8,411.8 1270.0,411.7 1272.2,411.6 1274.4,411.3 1276.7,410.9 1278.9,410.4 1281.1,409.8 1283.3,409.1 1285.5,408.2 1287.8,407.3 1290.0,406.2 1292.2,405.0 1294.5,403.8 1296.7,402.4 1298.9,400.8 1301.1,399.2 1303.3,397.5 1305.6,395.6 1307.8,393.7 1310.0,391.6 1312.2,389.4 1314.5,387.2 1316.7,384.7 1318.9,382.2 1321.2,379.6 1323.4,376.9 1325.6,374.0 1327.8,371.1 1330.0,368.0 1332.3,364.8 1334.5,361.5" stroke="#ff1060" stroke-width="1.2" fill="none"/>
<polyline points="1201.0,362.0 1202.0,360.8 1203.0,360.1 1204.0,360.2 1205.0,359.4 1206.0,358.1 1207.0,357.0 1208.0,357.2 1209.0,356.2 1210.0,356.3 1211.0,355.6 1212.0,355.5 1213.0,354.5 1214.0,354.8 1215.1,354.0 1216.1,353.9 1217.1,354.2 1218.1,353.9 1219.1,353.1 1220.1,353.1 1221.1,353.2 1222.1,353.4 1223.1,353.3 1224.1,353.2 1225.1,353.5 1226.1,354.2 1227.1,354.7 1228.1,354.1 1229.1,355.0 1230.1,355.4 1231.1,354.9 1232.1,355.9 1233.1,355.4 1234.1,356.1 1235.1,356.3 1236.1,356.6 1237.1,356.6 1238.1,356.9 1239.1,357.3 1240.1,357.4 1241.2,357.8 1242.2,357.8 1243.2,358.0 1244.2,357.8 1245.2,358.6 1246.2,358.6 1247.2,358.6 1248.2,359.4 1249.2,359.7 1250.2,359.7 1251.2,359.9 1252.2,360.6 1253.2,360.7 1254.2,361.3 1255.2,362.1 1256.2,362.4 1257.2,363.3 1258.2,363.9 1259.2,364.0 1260.2,365.1 1261.2,365.1 1262.2,366.4 1263.2,367.1 1264.2,367.5 1265.2,367.6 1266.2,368.7 1267.2,369.1 1268.3,370.1 1269.3,369.7 1270.3,370.7 1271.3,371.1 1272.3,371.0 1273.3,371.2 1274.3,370.6 1275.3,371.3 1276.3,370.7 1277.3,371.0 1278.3,370.7 1279.3,369.7 1280.3,369.9 1281.3,369.6 1282.3,368.3 1283.3,368.1 1284.3,368.0 1285.3,366.9 1286.3,367.2 1287.3,366.0 1288.3,366.0 1289.3,364.8 1290.3,364.5 1291.3,364.4 1292.3,363.1 1293.3,362.6 1294.3,362.4 1295.4,361.9 1296.4,361.2 1297.4,361.1 1298.4,360.8 1299.4,361.5 1300.4,361.1 1301.4,361.2 1302.4,360.5 1303.4,361.1 1304.4,360.4 1305.4,360.9 1306.4,361.1 1307.4,360.9 1308.4,361.6 1309.4,361.4 1310.4,361.6 1311.4,362.1 1312.4,361.5 1313.4,362.4 1314.4,362.1 1315.4,361.9 1316.4,362.2 1317.4,361.6 1318.4,362.3 1319.4,361.7 1320.4,361.4 1321.5,361.7 1322.5,361.2 1323.5,360.9 1324.5,361.4 1325.5,360.6 1326.5,361.3 1327.5,360.7 1328.5,361.2 1329.5,361.6 1330.5,361.3 1331.5,361.4 1332.5,361.2 1333.5,361.0 1334.5,361.0" stroke="#f0f000" stroke-width="1.1" fill="none"/>
<polyline points="1364.0,361.5 1366.2,358.2 1368.5,355.0 1370.7,351.9 1372.9,349.0 1375.1,346.1 1377.3,343.4 1379.6,340.8 1381.8,338.3 1384.0,335.8 1386.2,333.6 1388.5,331.4 1390.7,329.3 1392.9,327.4 1395.2,325.5 1397.4,323.8 1399.6,322.2 1401.8,320.6 1404.0,319.2 1406.3,318.0 1408.5,316.8 1410.7,315.7 1413.0,314.8 1415.2,313.9 1417.4,313.2 1419.6,312.6 1421.8,312.1 1424.1,311.7 1426.3,311.4 1428.5,311.3 1430.8,311.2 1433.0,311.3 1435.2,311.4 1437.4,311.7 1439.7,312.1 1441.9,312.6 1444.1,313.2 1446.3,313.9 1448.5,314.8 1450.8,315.7 1453.0,316.8 1455.2,318.0 1457.5,319.2 1459.7,320.6 1461.9,322.2 1464.1,323.8 1466.3,325.5 1468.6,327.4 1470.8,329.3 1473.0,331.4 1475.2,333.6 1477.5,335.8 1479.7,338.3 1481.9,340.8 1484.2,343.4 1486.4,346.1 1488.6,349.0 1490.8,351.9 1493.0,355.0 1495.3,358.2 1497.5,361.5" stroke="#ff1060" stroke-width="1.2" fill="none"/>
<polyline points="1364.0,361.1 1365.0,361.6 1366.0,361.3 1367.0,361.3 1368.0,361.6 1369.0,360.7 1370.0,360.8 1371.0,361.1 1372.0,360.5 1373.0,360.5 1374.0,361.0 1375.0,360.8 1376.0,361.2 1377.0,361.1 1378.1,361.6 1379.1,361.8 1380.1,361.5 1381.1,362.0 1382.1,361.9 1383.1,361.6 1384.1,362.4 1385.1,361.7 1386.1,361.5 1387.1,361.3 1388.1,361.7 1389.1,361.8 1390.1,361.5 1391.1,361.0 1392.1,360.7 1393.1,360.3 1394.1,360.9 1395.1,360.9 1396.1,360.7 1397.1,361.0 1398.1,360.9 1399.1,361.5 1400.1,361.4 1401.1,361.2 1402.1,362.1 1403.1,361.6 1404.2,362.5 1405.2,362.8 1406.2,363.1 1407.2,363.5 1408.2,364.8 1409.2,364.6 1410.2,365.7 1411.2,366.7 1412.2,366.4 1413.2,366.9 1414.2,367.8 1415.2,368.2 1416.2,368.9 1417.2,369.5 1418.2,369.3 1419.2,369.8 1420.2,370.1 1421.2,370.1 1422.2,371.1 1423.2,371.1 1424.2,371.1 1425.2,370.4 1426.2,371.1 1427.2,370.9 1428.2,370.3 1429.2,370.3 1430.2,369.6 1431.3,368.9 1432.3,368.3 1433.3,367.8 1434.3,367.0 1435.3,366.6 1436.3,366.4 1437.3,365.7 1438.3,365.3 1439.3,364.7 1440.3,363.7 1441.3,363.4 1442.3,362.7 1443.3,362.5 1444.3,361.7 1445.3,360.9 1446.3,360.8 1447.3,360.6 1448.3,359.5 1449.3,359.8 1450.3,358.7 1451.3,358.7 1452.3,358.4 1453.3,358.7 1454.3,358.7 1455.3,358.3 1456.3,357.7 1457.3,358.1 1458.4,357.3 1459.4,357.0 1460.4,357.4 1461.4,356.9 1462.4,356.7 1463.4,356.4 1464.4,356.5 1465.4,355.8 1466.4,355.9 1467.4,355.5 1468.4,355.5 1469.4,354.8 1470.4,354.8 1471.4,354.3 1472.4,353.8 1473.4,353.5 1474.4,353.7 1475.4,353.0 1476.4,353.8 1477.4,353.0 1478.4,352.9 1479.4,353.0 1480.4,354.0 1481.4,353.7 1482.4,353.7 1483.4,353.8 1484.5,354.1 1485.5,355.0 1486.5,355.3 1487.5,355.7 1488.5,356.1 1489.5,355.8 1490.5,356.8 1491.5,357.3 1492.5,358.5 1493.5,359.3 1494.5,360.1 1495.5,360.0 1496.5,361.4 1497.5,361.9" stroke="#f0f000" stroke-width="1.1" fill="none"/>
<polyline points="1527.0,361.5 1529.2,364.8 1531.5,368.0 1533.7,371.1 1535.9,374.0 1538.1,376.9 1540.3,379.6 1542.6,382.2 1544.8,384.7 1547.0,387.2 1549.2,389.4 1551.5,391.6 1553.7,393.7 1555.9,395.6 1558.2,397.5 1560.4,399.2 1562.6,400.8 1564.8,402.4 1567.0,403.8 1569.3,405.0 1571.5,406.2 1573.7,407.3 1576.0,408.2 1578.2,409.1 1580.4,409.8 1582.6,410.4 1584.8,410.9 1587.1,411.3 1589.3,411.6 1591.5,411.7 1593.8,411.8 1596.0,411.7 1598.2,411.6 1600.4,411.3 1602.7,410.9 1604.9,410.4 1607.1,409.8 1609.3,409.1 1611.5,408.2 1613.8,407.3 1616.0,406.2 1618.2,405.0 1620.5,403.8 1622.7,402.4 1624.9,400.8 1627.1,399.2 1629.3,397.5 1631.6,395.6 1633.8,393.7 1636.0,391.6 1638.2,389.4 1640.5,387.2 1642.7,384.7 1644.9,382.2 1647.2,379.6 1649.4,376.9 1651.6,374.0 1653.8,371.1 1656.0,368.0 1658.3,364.8 1660.5,361.5" stroke="#ff1060" stroke-width="1.2" fill="none"/>
<polyline points="1527.0,361.9 1528.0,360.7 1529.0,360.2 1530.0,359.4 1531.0,358.5 1532.0,358.5 1533.0,357.7 1534.0,356.9 1535.0,356.6 1536.0,356.0 1537.0,355.3 1538.0,354.7 1539.0,354.4 1540.0,354.8 1541.1,354.0 1542.1,353.8 1543.1,353.7 1544.1,353.1 1545.1,353.2 1546.1,353.1 1547.1,353.5 1548.1,353.2 1549.1,353.3 1550.1,354.0 1551.1,353.8 1552.1,354.3 1553.1,354.4 1554.1,354.1 1555.1,354.8 1556.1,355.1 1557.1,355.6 1558.1,355.4 1559.1,356.0 1560.1,356.1 1561.1,356.0 1562.1,356.9 1563.1,356.4 1564.1,357.3 1565.1,356.9 1566.1,357.0 1567.2,357.4 1568.2,358.1 1569.2,358.5 1570.2,357.8 1571.2,358.4 1572.2,358.7 1573.2,359.2 1574.2,358.8 1575.2,359.4 1576.2,359.6 1577.2,360.5 1578.2,360.4 1579.2,361.6 1580.2,361.4 1581.2,361.9 1582.2,363.0 1583.2,363.3 1584.2,363.5 1585.2,364.6 1586.2,364.6 1587.2,365.8 1588.2,366.4 1589.2,367.1 1590.2,367.6 1591.2,367.9 1592.2,368.6 1593.2,369.1 1594.3,370.0 1595.3,369.6 1596.3,370.7 1597.3,370.1 1598.3,370.5 1599.3,370.6 1600.3,371.3 1601.3,370.8 1602.3,370.6 1603.3,370.9 1604.3,370.0 1605.3,370.0 1606.3,369.7 1607.3,369.5 1608.3,369.0 1609.3,368.4 1610.3,367.6 1611.3,367.0 1612.3,366.4 1613.3,366.6 1614.3,365.9 1615.3,365.4 1616.3,364.2 1617.3,363.9 1618.3,363.7 1619.3,363.0 1620.3,362.1 1621.4,362.0 1622.4,362.1 1623.4,361.1 1624.4,360.9 1625.4,360.8 1626.4,361.1 1627.4,361.2 1628.4,360.5 1629.4,360.5 1630.4,360.5 1631.4,360.7 1632.4,360.9 1633.4,360.7 1634.4,361.0 1635.4,361.1 1636.4,362.0 1637.4,361.9 1638.4,361.5 1639.4,362.4 1640.4,361.6 1641.4,361.9 1642.4,362.4 1643.4,362.2 1644.4,362.0 1645.4,361.6 1646.4,361.2 1647.5,361.6 1648.5,360.9 1649.5,360.9 1650.5,361.0 1651.5,360.6 1652.5,360.9 1653.5,361.3 1654.5,361.2 1655.5,361.1 1656.5,361.3 1657.5,361.2 1658.5,361.0 1659.5,361.6 1660.5,361.4" stroke="#f0f000" stroke-width="1.1" fill="none"/>
<text x="72" y="299" font-size="13" fill="#e6e6e6" text-anchor="start">Rng 158.4893 mV</text>
<text x="67" y="315.5" font-size="13" fill="#e6e6e6" text-anchor="end">25</text>
<text x="67" y="330.5" font-size="13" fill="#e6e6e6" text-anchor="end">deg</text>
<text x="67" y="365.5" font-size="13" fill="#e6e6e6" text-anchor="end">Real</text>
<text x="67" y="402" font-size="13" fill="#e6e6e6" text-anchor="end">-25</text>
<text x="67" y="417" font-size="13" fill="#e6e6e6" text-anchor="end">deg</text>
<text x="72" y="433.5" font-size="13" fill="#e6e6e6" text-anchor="start">Start -48.83 uSec</text>
<text x="1665" y="433.5" font-size="13" fill="#e6e6e6" text-anchor="end">Stop 489.01 uSec</text>
<path d="M71.5,337 L77.5,348.5 L71.5,360 Z" fill="#ffffff"/>
<text x="79.5" y="345.7" font-size="12.5" fill="#ffff00" text-anchor="start" font-weight="bold">1</text>
<text x="1354.7" y="298" font-size="13" fill="#e6e6e6" text-anchor="start" style='font-family:"Liberation Mono", monospace'>Mkr1</text>
<text x="1402.5" y="298" font-size="13" fill="#e6e6e6" text-anchor="start" style='font-family:"Liberation Mono", monospace'>-48.82813</text>
<text x="1483" y="298" font-size="13" fill="#e6e6e6" text-anchor="start" style='font-family:"Liberation Mono", monospace'>uSec</text>
<text x="1578" y="298" font-size="13" fill="#e6e6e6" text-anchor="start" style='font-family:"Liberation Mono", monospace'>0</text>
<text x="1641" y="298" font-size="13" fill="#e6e6e6" text-anchor="start" style='font-family:"Liberation Mono", monospace'>deg</text>
<rect x="223.0" y="512" width="133.5" height="148" fill="#606060"/>
<rect x="386.0" y="512" width="133.5" height="148" fill="#807e00"/>
<rect x="549.0" y="512" width="133.5" height="148" fill="#606060"/>
<rect x="712.0" y="512" width="133.5" height="148" fill="#807e00"/>
<rect x="875.0" y="512" width="133.5" height="148" fill="#606060"/>
<rect x="1038.0" y="512" width="133.5" height="148" fill="#807e00"/>
<rect x="1201.0" y="512" width="133.5" height="148" fill="#606060"/>
<rect x="1364.0" y="512" width="133.5" height="148" fill="#807e00"/>
<rect x="230" y="510" width="1" height="150" fill="#343434"/>
<rect x="390" y="510" width="1" height="150" fill="#343434"/>
<rect x="549" y="510" width="1" height="150" fill="#343434"/>
<rect x="709" y="510" width="1" height="150" fill="#343434"/>
<rect x="868" y="510" width="1" height="150" fill="#343434"/>
<rect x="1027" y="510" width="1" height="150" fill="#343434"/>
<rect x="1187" y="510" width="1" height="150" fill="#343434"/>
<rect x="1346" y="510" width="1" height="150" fill="#343434"/>
<rect x="1506" y="510" width="1" height="150" fill="#343434"/>
<rect x="71" y="525" width="1594" height="1" fill="#484848"/>
<rect x="71" y="540" width="1594" height="1" fill="#484848"/>
<rect x="71" y="555" width="1594" height="1" fill="#484848"/>
<rect x="71" y="570" width="1594" height="1" fill="#484848"/>
<rect x="71" y="585" width="1594" height="1" fill="#484848"/>
<rect x="71" y="600" width="1594" height="1" fill="#484848"/>
<rect x="71" y="615" width="1594" height="1" fill="#484848"/>
<rect x="71" y="630" width="1594" height="1" fill="#484848"/>
<rect x="71" y="645" width="1594" height="1" fill="#484848"/>
<rect x="71" y="510" width="1595" height="2" fill="#505050"/>
<rect x="71" y="658" width="1595" height="3" fill="#505050"/>
<rect x="71" y="510" width="3" height="151" fill="#505050"/>
<rect x="1663" y="510" width="3" height="151" fill="#505050"/>
<text x="289.8" y="540.2" font-size="21" fill="#f4f4f4" text-anchor="middle">1</text>
<text x="289.8" y="645.2" font-size="21" fill="#f4f4f4" text-anchor="middle">1</text>
<text x="452.8" y="540.2" font-size="21" fill="#f4f4f4" text-anchor="middle">2</text>
<text x="452.8" y="645.2" font-size="21" fill="#f4f4f4" text-anchor="middle">2</text>
<text x="615.8" y="540.2" font-size="21" fill="#f4f4f4" text-anchor="middle">3</text>
<text x="615.8" y="645.2" font-size="21" fill="#f4f4f4" text-anchor="middle">3</text>
<text x="778.8" y="540.2" font-size="21" fill="#f4f4f4" text-anchor="middle">4</text>
<text x="778.8" y="645.2" font-size="21" fill="#f4f4f4" text-anchor="middle">4</text>
<text x="941.8" y="540.2" font-size="21" fill="#f4f4f4" text-anchor="middle">5</text>
<text x="941.8" y="645.2" font-size="21" fill="#f4f4f4" text-anchor="middle">5</text>
<text x="1104.8" y="540.2" font-size="21" fill="#f4f4f4" text-anchor="middle">6</text>
<text x="1104.8" y="645.2" font-size="21" fill="#f4f4f4" text-anchor="middle">6</text>
<text x="1267.8" y="540.2" font-size="21" fill="#f4f4f4" text-anchor="middle">7</text>
<text x="1267.8" y="645.2" font-size="21" fill="#f4f4f4" text-anchor="middle">7</text>
<text x="1430.8" y="540.2" font-size="21" fill="#f4f4f4" text-anchor="middle">8</text>
<text x="1430.8" y="645.2" font-size="21" fill="#f4f4f4" text-anchor="middle">8</text>
<polyline points="71.7,545.7 201.0,638.0 216.0,638.0 364.0,532.3 379.0,532.3 527.0,638.0 542.0,638.0 690.0,532.3 705.0,532.3 853.0,638.0 868.0,638.0 1016.0,532.3 1031.0,532.3 1179.0,638.0 1194.0,638.0 1342.0,532.3 1357.0,532.3 1505.0,638.0 1520.0,638.0 1665.0,534.4" stroke="#ff1060" stroke-width="1.2" fill="none"/>
<polyline points="223.0,578.3 223.5,574.9 224.0,578.7 224.5,577.1 225.0,581.2 225.5,577.2 226.0,578.4 226.5,577.5 227.0,579.3 227.5,579.5 228.0,579.8 228.5,578.2 229.0,578.5 229.5,581.6 230.0,582.0 230.5,580.7 231.0,579.7 231.5,583.4 232.0,580.5 232.5,581.3 233.0,580.9 233.5,581.6 234.0,581.4 234.5,579.9 235.0,580.3 235.5,581.9 236.0,581.5 236.5,580.8 237.0,584.0 237.5,582.3 238.0,582.4 238.5,582.9 239.0,582.3 239.5,581.4 240.0,582.8 240.5,579.0 241.0,583.7 241.5,581.6 242.0,583.8 242.5,580.4 243.0,582.4 243.5,583.1 244.0,581.6 244.5,581.3 245.0,583.1 245.5,585.8 246.0,581.8 246.5,586.5 247.0,583.9 247.5,586.8 248.0,583.8 248.5,582.7 249.0,582.4 249.5,584.4 250.0,581.7 250.5,587.3 251.0,586.1 251.5,581.1 252.0,586.3 252.5,581.1 253.0,586.9 253.5,583.8 254.0,585.4 254.5,585.6 255.0,586.8 255.5,587.8 256.0,586.6 256.5,583.4 257.0,587.3 257.5,583.1 258.0,584.3 258.5,583.1 259.0,586.7 259.5,583.7 260.0,586.5 260.5,586.8 261.0,586.5 261.5,586.9 262.0,585.5 262.5,585.3 263.0,583.2 263.5,584.6 264.0,581.8 264.5,587.8 265.0,585.4 265.5,585.5 266.0,587.2 266.5,585.3 267.0,580.2 267.5,586.4 268.0,585.0 268.5,585.0 269.0,584.2 269.5,586.6 270.0,584.7 270.5,587.1 271.0,585.6 271.5,589.6 272.0,586.3 272.5,588.7 273.0,587.1 273.5,585.3 274.0,584.8 274.5,584.9 275.0,586.3 275.5,581.4 276.0,587.0 276.5,587.3 277.0,585.2 277.5,585.6 278.0,585.4 278.5,585.8 279.0,585.2 279.5,585.9 280.0,584.6 280.5,588.2 281.0,590.3 281.5,588.1 282.0,585.3 282.5,589.8 283.0,587.4 283.5,588.9 284.0,585.3 284.5,588.5 285.0,587.0 285.5,587.3 286.0,584.0 286.5,584.6 287.0,585.6 287.5,588.8 288.0,585.5 288.5,587.5 289.0,587.5 289.5,588.6 290.0,586.7 290.5,586.2 291.0,587.9 291.5,586.2 292.0,586.9 292.5,589.4 293.0,587.0 293.5,583.8 294.0,588.5 294.5,587.5 295.0,587.4 295.5,585.6 296.0,586.4 296.5,586.0 297.0,587.1 297.5,586.4 298.0,586.8 298.5,583.9 299.0,583.5 299.5,584.1 300.0,585.3 300.5,583.0 301.0,582.9 301.5,585.0 302.0,584.5 302.5,581.7 303.0,586.3 303.5,583.1 304.0,579.7 304.5,580.3 305.0,582.5 305.5,584.7 306.0,582.1 306.5,580.8 307.0,582.9 307.5,583.0 308.0,580.3 308.5,580.3 309.0,584.5 309.5,580.3 310.0,582.5 310.5,586.3 311.0,584.4 311.5,582.2 312.0,583.4 312.5,582.0 313.0,583.4 313.5,585.5 314.0,583.6 314.5,584.5 315.0,582.6 315.5,583.6 316.0,583.7 316.5,585.7 317.0,581.6 317.5,583.3 318.0,584.0 318.5,584.7 319.0,582.1 319.5,583.1 320.0,589.4 320.5,585.4 321.0,581.9 321.5,581.7 322.0,582.1 322.5,586.7 323.0,587.4 323.5,583.8 324.0,583.8 324.5,587.0 325.0,584.4 325.5,581.0 326.0,585.2 326.5,584.4 327.0,586.2 327.5,584.8 328.0,587.7 328.5,583.0 329.0,583.5 329.5,584.7 330.0,582.0 330.5,583.3 331.0,582.8 331.5,585.4 332.0,586.2 332.5,584.2 333.0,582.1 333.5,587.3 334.0,587.2 334.5,585.2 335.0,584.9 335.5,584.3 336.0,586.8 336.5,583.4 337.0,584.4 337.5,583.6 338.0,585.8 338.5,585.8 339.0,587.0 339.5,586.4 340.0,584.6 340.5,584.9 341.0,587.6 341.5,583.1 342.0,583.8 342.5,584.7 343.0,583.2 343.5,583.2 344.0,582.1 344.5,584.9 345.0,587.0 345.5,585.5 346.0,585.5 346.5,583.6 347.0,584.1 347.5,587.8 348.0,583.1 348.5,584.6 349.0,585.1 349.5,584.5 350.0,585.0 350.5,586.4 351.0,585.0 351.5,586.1 352.0,585.2 352.5,584.2 353.0,587.1 353.5,585.5 354.0,587.6 354.5,584.8 355.0,587.7 355.5,584.5 356.0,581.1 356.5,586.0" stroke="#f8c070" stroke-width="1.0" fill="none"/>
<polyline points="386.0,585.7 386.5,585.8 387.0,585.2 387.5,585.6 388.0,583.6 388.5,584.9 389.0,584.1 389.5,581.9 390.0,587.4 390.5,585.9 391.0,587.7 391.5,585.8 392.0,586.8 392.5,583.2 393.0,581.2 393.5,585.1 394.0,585.3 394.5,583.1 395.0,584.3 395.5,584.3 396.0,583.5 396.5,584.3 397.0,585.3 397.5,583.2 398.0,584.2 398.5,583.6 399.0,582.1 399.5,584.2 400.0,588.5 400.5,584.6 401.0,585.0 401.5,585.2 402.0,586.1 402.5,586.3 403.0,582.0 403.5,582.5 404.0,586.5 404.5,587.1 405.0,585.1 405.5,585.1 406.0,584.9 406.5,584.8 407.0,584.2 407.5,582.9 408.0,585.2 408.5,586.3 409.0,580.7 409.5,585.1 410.0,586.3 410.5,582.4 411.0,582.6 411.5,585.1 412.0,586.2 412.5,581.9 413.0,579.3 413.5,583.1 414.0,581.4 414.5,584.7 415.0,585.3 415.5,584.9 416.0,586.6 416.5,587.3 417.0,581.8 417.5,581.7 418.0,586.4 418.5,584.7 419.0,583.9 419.5,586.4 420.0,584.4 420.5,586.6 421.0,584.3 421.5,586.1 422.0,581.3 422.5,582.5 423.0,583.0 423.5,585.5 424.0,586.1 424.5,586.3 425.0,585.4 425.5,586.2 426.0,583.8 426.5,584.2 427.0,585.2 427.5,583.9 428.0,584.4 428.5,586.2 429.0,584.4 429.5,585.9 430.0,584.2 430.5,589.0 431.0,585.0 431.5,586.6 432.0,586.7 432.5,585.7 433.0,586.2 433.5,587.0 434.0,586.8 434.5,586.1 435.0,586.9 435.5,586.0 436.0,585.9 436.5,584.9 437.0,584.2 437.5,586.7 438.0,584.0 438.5,587.4 439.0,590.8 439.5,589.4 440.0,585.1 440.5,585.8 441.0,584.2 441.5,588.2 442.0,585.3 442.5,587.8 443.0,586.0 443.5,588.1 444.0,585.0 444.5,589.0 445.0,585.2 445.5,586.5 446.0,584.0 446.5,584.9 447.0,584.4 447.5,588.7 448.0,586.1 448.5,588.3 449.0,587.5 449.5,586.0 450.0,585.5 450.5,583.0 451.0,582.3 451.5,584.5 452.0,583.3 452.5,583.5 453.0,583.5 453.5,583.9 454.0,581.8 454.5,582.9 455.0,581.7 455.5,583.5 456.0,582.1 456.5,584.8 457.0,581.0 457.5,587.1 458.0,585.5 458.5,584.9 459.0,586.1 459.5,582.3 460.0,582.0 460.5,584.4 461.0,583.4 461.5,584.6 462.0,586.3 462.5,582.4 463.0,582.8 463.5,580.2 464.0,581.5 464.5,585.7 465.0,583.3 465.5,584.6 466.0,581.5 466.5,581.1 467.0,582.1 467.5,583.4 468.0,583.6 468.5,583.5 469.0,584.1 469.5,581.1 470.0,586.1 470.5,583.5 471.0,582.7 471.5,584.2 472.0,585.3 472.5,582.2 473.0,583.1 473.5,583.9 474.0,585.3 474.5,583.1 475.0,587.4 475.5,584.7 476.0,586.2 476.5,581.8 477.0,585.6 477.5,583.2 478.0,581.7 478.5,585.5 479.0,585.2 479.5,582.4 480.0,584.6 480.5,585.3 481.0,583.3 481.5,586.0 482.0,582.6 482.5,585.1 483.0,584.7 483.5,582.6 484.0,583.6 484.5,585.3 485.0,583.5 485.5,584.9 486.0,583.7 486.5,587.4 487.0,585.8 487.5,581.6 488.0,583.9 488.5,582.6 489.0,586.2 489.5,583.7 490.0,586.1 490.5,586.3 491.0,583.0 491.5,583.6 492.0,585.3 492.5,587.8 493.0,583.2 493.5,584.2 494.0,583.4 494.5,582.8 495.0,585.6 495.5,585.3 496.0,584.4 496.5,584.2 497.0,583.5 497.5,585.0 498.0,585.2 498.5,586.0 499.0,582.1 499.5,587.3 500.0,585.9 500.5,584.2 501.0,584.3 501.5,583.2 502.0,584.1 502.5,583.4 503.0,584.2 503.5,587.6 504.0,588.1 504.5,583.5 505.0,586.8 505.5,586.2 506.0,585.6 506.5,586.4 507.0,587.5 507.5,589.1 508.0,586.2 508.5,588.1 509.0,589.6 509.5,586.4 510.0,589.7 510.5,588.0 511.0,586.6 511.5,587.5 512.0,589.2 512.5,585.4 513.0,584.7 513.5,588.7 514.0,590.5 514.5,589.3 515.0,586.1 515.5,584.6 516.0,586.7 516.5,587.4 517.0,583.4 517.5,587.1 518.0,589.9 518.5,588.2 519.0,583.2 519.5,586.2" stroke="#f8c070" stroke-width="1.0" fill="none"/>
<polyline points="549.0,578.5 549.5,579.2 550.0,579.2 550.5,580.3 551.0,578.5 551.5,578.2 552.0,575.7 552.5,581.0 553.0,580.6 553.5,579.5 554.0,581.2 554.5,578.6 555.0,579.6 555.5,578.9 556.0,581.5 556.5,580.4 557.0,581.4 557.5,581.9 558.0,580.9 558.5,579.8 559.0,580.1 559.5,582.0 560.0,587.1 560.5,582.3 561.0,581.0 561.5,577.5 562.0,580.4 562.5,582.4 563.0,586.2 563.5,582.7 564.0,584.9 564.5,581.7 565.0,583.0 565.5,583.2 566.0,582.7 566.5,584.1 567.0,584.1 567.5,582.8 568.0,583.3 568.5,581.9 569.0,582.8 569.5,585.0 570.0,584.6 570.5,582.6 571.0,581.5 571.5,581.5 572.0,585.7 572.5,583.2 573.0,583.2 573.5,586.1 574.0,585.0 574.5,585.7 575.0,585.9 575.5,584.6 576.0,587.5 576.5,584.3 577.0,583.1 577.5,585.0 578.0,583.1 578.5,585.2 579.0,586.2 579.5,581.3 580.0,582.6 580.5,585.4 581.0,586.0 581.5,585.5 582.0,587.7 582.5,583.0 583.0,582.6 583.5,582.8 584.0,583.9 584.5,584.2 585.0,582.7 585.5,585.4 586.0,585.5 586.5,585.0 587.0,584.6 587.5,585.6 588.0,583.9 588.5,584.6 589.0,584.8 589.5,586.1 590.0,584.8 590.5,585.4 591.0,587.4 591.5,586.9 592.0,584.7 592.5,585.5 593.0,583.7 593.5,585.8 594.0,587.7 594.5,587.0 595.0,585.6 595.5,583.5 596.0,586.2 596.5,585.6 597.0,588.5 597.5,590.3 598.0,588.5 598.5,588.9 599.0,586.5 599.5,587.0 600.0,586.0 600.5,589.4 601.0,584.4 601.5,584.6 602.0,587.8 602.5,586.4 603.0,587.4 603.5,584.6 604.0,585.3 604.5,589.3 605.0,589.5 605.5,588.0 606.0,587.7 606.5,586.6 607.0,587.4 607.5,588.6 608.0,586.3 608.5,587.1 609.0,587.8 609.5,586.5 610.0,586.9 610.5,586.0 611.0,585.0 611.5,586.8 612.0,589.0 612.5,587.5 613.0,590.8 613.5,585.1 614.0,588.3 614.5,584.9 615.0,588.9 615.5,589.8 616.0,586.5 616.5,586.5 617.0,589.7 617.5,585.4 618.0,585.5 618.5,588.1 619.0,586.5 619.5,586.6 620.0,588.3 620.5,586.7 621.0,587.8 621.5,588.2 622.0,584.7 622.5,586.0 623.0,594.0 623.5,584.3 624.0,586.0 624.5,581.9 625.0,584.1 625.5,583.8 626.0,587.6 626.5,581.7 627.0,584.6 627.5,581.4 628.0,582.7 628.5,585.6 629.0,582.9 629.5,584.8 630.0,582.5 630.5,584.2 631.0,583.2 631.5,583.2 632.0,580.9 632.5,583.7 633.0,584.3 633.5,583.5 634.0,579.1 634.5,581.7 635.0,582.3 635.5,582.6 636.0,584.6 636.5,582.9 637.0,583.5 637.5,582.6 638.0,582.7 638.5,584.4 639.0,582.9 639.5,585.8 640.0,584.0 640.5,585.5 641.0,584.2 641.5,586.0 642.0,586.1 642.5,585.0 643.0,584.2 643.5,584.4 644.0,581.2 644.5,580.7 645.0,583.7 645.5,581.3 646.0,583.5 646.5,584.6 647.0,582.8 647.5,582.8 648.0,583.8 648.5,585.9 649.0,579.4 649.5,582.0 650.0,583.8 650.5,582.6 651.0,585.9 651.5,586.4 652.0,582.2 652.5,585.1 653.0,582.9 653.5,582.2 654.0,584.0 654.5,586.9 655.0,583.1 655.5,586.9 656.0,583.9 656.5,586.3 657.0,586.2 657.5,584.4 658.0,580.9 658.5,588.2 659.0,584.7 659.5,584.5 660.0,582.2 660.5,584.3 661.0,583.7 661.5,585.1 662.0,585.8 662.5,583.9 663.0,584.6 663.5,589.2 664.0,582.7 664.5,587.0 665.0,585.1 665.5,584.0 666.0,583.4 666.5,583.1 667.0,582.9 667.5,583.8 668.0,583.6 668.5,583.6 669.0,583.4 669.5,585.0 670.0,583.6 670.5,583.4 671.0,583.6 671.5,584.1 672.0,584.2 672.5,587.4 673.0,583.6 673.5,586.2 674.0,583.6 674.5,582.4 675.0,585.4 675.5,583.7 676.0,585.2 676.5,581.2 677.0,586.8 677.5,584.5 678.0,584.7 678.5,584.5 679.0,584.4 679.5,583.7 680.0,585.8 680.5,585.3 681.0,590.1 681.5,581.3 682.0,585.6 682.5,582.0" stroke="#f8c070" stroke-width="1.0" fill="none"/>
<polyline points="712.0,585.2 712.5,587.9 713.0,586.4 713.5,584.9 714.0,584.0 714.5,585.0 715.0,584.5 715.5,584.0 716.0,586.0 716.5,585.8 717.0,584.1 717.5,585.7 718.0,584.5 718.5,583.3 719.0,585.1 719.5,584.8 720.0,582.1 720.5,584.0 721.0,583.3 721.5,582.7 722.0,587.8 722.5,584.0 723.0,583.6 723.5,585.9 724.0,582.9 724.5,585.3 725.0,586.5 725.5,584.2 726.0,582.8 726.5,583.0 727.0,586.4 727.5,586.1 728.0,586.4 728.5,584.7 729.0,582.4 729.5,583.1 730.0,583.7 730.5,580.4 731.0,585.0 731.5,583.7 732.0,581.7 732.5,585.5 733.0,581.7 733.5,581.9 734.0,582.4 734.5,583.2 735.0,585.2 735.5,582.5 736.0,582.3 736.5,583.7 737.0,581.5 737.5,583.1 738.0,583.6 738.5,584.5 739.0,581.5 739.5,581.1 740.0,585.2 740.5,584.0 741.0,584.3 741.5,584.4 742.0,581.9 742.5,586.2 743.0,585.4 743.5,584.9 744.0,582.2 744.5,584.8 745.0,585.8 745.5,586.4 746.0,584.6 746.5,586.2 747.0,585.8 747.5,584.8 748.0,586.0 748.5,587.3 749.0,585.2 749.5,588.3 750.0,585.9 750.5,584.4 751.0,583.4 751.5,584.3 752.0,583.7 752.5,587.6 753.0,583.8 753.5,583.3 754.0,582.4 754.5,584.1 755.0,585.6 755.5,584.5 756.0,588.8 756.5,587.5 757.0,582.7 757.5,586.6 758.0,585.0 758.5,585.6 759.0,585.1 759.5,587.8 760.0,584.8 760.5,587.0 761.0,586.8 761.5,585.2 762.0,584.2 762.5,586.0 763.0,587.1 763.5,587.7 764.0,589.4 764.5,588.5 765.0,585.8 765.5,584.5 766.0,586.2 766.5,585.2 767.0,588.2 767.5,583.5 768.0,586.4 768.5,586.5 769.0,586.4 769.5,587.9 770.0,584.4 770.5,585.6 771.0,585.0 771.5,589.3 772.0,586.0 772.5,587.1 773.0,584.5 773.5,587.1 774.0,583.6 774.5,587.8 775.0,584.9 775.5,585.1 776.0,583.3 776.5,586.2 777.0,585.3 777.5,583.4 778.0,583.0 778.5,583.4 779.0,584.6 779.5,583.6 780.0,587.1 780.5,584.7 781.0,585.2 781.5,586.9 782.0,580.7 782.5,583.1 783.0,583.7 783.5,586.0 784.0,582.9 784.5,583.4 785.0,584.2 785.5,582.0 786.0,584.6 786.5,581.0 787.0,582.3 787.5,582.0 788.0,582.7 788.5,584.7 789.0,584.6 789.5,585.6 790.0,584.3 790.5,585.1 791.0,584.3 791.5,583.0 792.0,582.0 792.5,582.6 793.0,580.5 793.5,584.0 794.0,585.8 794.5,585.7 795.0,581.7 795.5,582.9 796.0,579.3 796.5,583.4 797.0,584.8 797.5,581.7 798.0,584.3 798.5,584.5 799.0,584.4 799.5,587.4 800.0,585.1 800.5,583.3 801.0,585.1 801.5,584.1 802.0,583.6 802.5,582.6 803.0,585.7 803.5,584.6 804.0,584.3 804.5,580.2 805.0,583.0 805.5,583.8 806.0,582.4 806.5,583.1 807.0,584.4 807.5,584.8 808.0,585.8 808.5,581.1 809.0,586.9 809.5,585.9 810.0,583.2 810.5,583.9 811.0,582.1 811.5,583.7 812.0,583.2 812.5,584.8 813.0,585.6 813.5,581.9 814.0,586.1 814.5,583.6 815.0,583.8 815.5,583.2 816.0,584.3 816.5,584.8 817.0,583.5 817.5,587.9 818.0,584.7 818.5,586.8 819.0,585.7 819.5,585.1 820.0,586.9 820.5,585.3 821.0,583.0 821.5,587.4 822.0,588.9 822.5,585.2 823.0,586.0 823.5,585.7 824.0,586.0 824.5,586.4 825.0,585.5 825.5,586.7 826.0,585.8 826.5,583.5 827.0,587.8 827.5,583.9 828.0,583.2 828.5,583.2 829.0,585.3 829.5,584.2 830.0,584.4 830.5,583.3 831.0,589.3 831.5,584.5 832.0,586.7 832.5,583.9 833.0,586.8 833.5,582.8 834.0,582.2 834.5,585.5 835.0,586.6 835.5,585.2 836.0,587.1 836.5,588.3 837.0,588.8 837.5,585.3 838.0,587.4 838.5,583.9 839.0,587.7 839.5,585.4 840.0,587.8 840.5,585.7 841.0,587.1 841.5,586.9 842.0,589.6 842.5,589.3 843.0,585.8 843.5,587.8 844.0,588.7 844.5,585.5 845.0,587.1 845.5,590.1" stroke="#f8c070" stroke-width="1.0" fill="none"/>
<polyline points="875.0,578.8 875.5,577.3 876.0,579.2 876.5,577.9 877.0,578.3 877.5,580.2 878.0,580.8 878.5,578.6 879.0,574.8 879.5,579.9 880.0,582.1 880.5,582.3 881.0,582.5 881.5,580.3 882.0,580.6 882.5,581.8 883.0,579.6 883.5,581.2 884.0,581.1 884.5,581.0 885.0,583.2 885.5,581.3 886.0,580.4 886.5,583.4 887.0,580.4 887.5,582.1 888.0,583.5 888.5,580.1 889.0,582.4 889.5,578.9 890.0,584.1 890.5,583.0 891.0,583.5 891.5,582.3 892.0,584.6 892.5,583.5 893.0,582.6 893.5,586.1 894.0,579.2 894.5,585.7 895.0,582.8 895.5,582.1 896.0,583.1 896.5,582.4 897.0,585.1 897.5,581.1 898.0,580.4 898.5,583.5 899.0,584.6 899.5,585.3 900.0,580.7 900.5,587.1 901.0,582.6 901.5,588.0 902.0,583.5 902.5,584.6 903.0,581.0 903.5,587.3 904.0,586.0 904.5,583.5 905.0,584.8 905.5,583.1 906.0,582.5 906.5,585.1 907.0,584.5 907.5,586.4 908.0,584.2 908.5,587.2 909.0,588.0 909.5,585.8 910.0,586.2 910.5,584.6 911.0,582.4 911.5,584.3 912.0,585.5 912.5,584.5 913.0,587.7 913.5,584.9 914.0,582.2 914.5,587.9 915.0,583.1 915.5,587.5 916.0,587.0 916.5,584.1 917.0,586.5 917.5,585.2 918.0,584.1 918.5,586.9 919.0,584.4 919.5,585.2 920.0,587.8 920.5,583.7 921.0,584.9 921.5,583.8 922.0,588.6 922.5,584.7 923.0,587.1 923.5,585.9 924.0,585.5 924.5,585.8 925.0,587.3 925.5,585.6 926.0,589.0 926.5,588.3 927.0,585.3 927.5,589.0 928.0,587.0 928.5,587.2 929.0,587.1 929.5,587.8 930.0,587.4 930.5,586.8 931.0,587.7 931.5,589.7 932.0,586.3 932.5,586.9 933.0,589.1 933.5,583.3 934.0,587.5 934.5,587.1 935.0,589.7 935.5,588.4 936.0,585.9 936.5,588.7 937.0,591.3 937.5,583.3 938.0,585.1 938.5,591.8 939.0,588.6 939.5,588.7 940.0,585.8 940.5,587.7 941.0,586.9 941.5,588.2 942.0,586.0 942.5,587.4 943.0,586.7 943.5,589.0 944.0,586.7 944.5,582.5 945.0,586.5 945.5,585.5 946.0,588.2 946.5,584.3 947.0,585.6 947.5,587.0 948.0,585.9 948.5,586.5 949.0,588.3 949.5,583.9 950.0,586.3 950.5,586.0 951.0,588.9 951.5,584.8 952.0,585.2 952.5,583.8 953.0,583.2 953.5,584.1 954.0,586.2 954.5,582.4 955.0,581.1 955.5,584.6 956.0,584.1 956.5,582.5 957.0,580.8 957.5,582.2 958.0,583.7 958.5,581.1 959.0,582.3 959.5,582.8 960.0,584.4 960.5,581.6 961.0,583.1 961.5,586.7 962.0,582.2 962.5,582.5 963.0,580.9 963.5,581.8 964.0,585.6 964.5,584.2 965.0,581.1 965.5,584.7 966.0,581.7 966.5,581.2 967.0,585.3 967.5,582.1 968.0,584.6 968.5,583.4 969.0,584.6 969.5,580.1 970.0,587.5 970.5,587.8 971.0,584.9 971.5,584.1 972.0,581.9 972.5,580.4 973.0,583.7 973.5,584.9 974.0,587.6 974.5,586.7 975.0,584.4 975.5,583.1 976.0,584.9 976.5,578.5 977.0,585.4 977.5,582.3 978.0,582.4 978.5,582.6 979.0,586.1 979.5,584.9 980.0,588.7 980.5,584.3 981.0,584.9 981.5,582.5 982.0,584.7 982.5,586.0 983.0,582.7 983.5,583.8 984.0,586.2 984.5,581.6 985.0,583.4 985.5,587.0 986.0,588.9 986.5,584.0 987.0,586.3 987.5,586.1 988.0,582.7 988.5,584.9 989.0,586.8 989.5,583.0 990.0,586.7 990.5,582.1 991.0,585.5 991.5,583.0 992.0,586.2 992.5,583.8 993.0,584.0 993.5,586.0 994.0,580.0 994.5,586.2 995.0,584.7 995.5,581.3 996.0,584.3 996.5,586.6 997.0,585.0 997.5,588.0 998.0,584.9 998.5,581.6 999.0,583.8 999.5,584.4 1000.0,583.4 1000.5,583.4 1001.0,585.6 1001.5,586.3 1002.0,586.1 1002.5,583.9 1003.0,585.2 1003.5,584.4 1004.0,584.8 1004.5,584.4 1005.0,585.6 1005.5,584.4 1006.0,583.5 1006.5,581.9 1007.0,584.5 1007.5,584.9 1008.0,584.2 1008.5,588.9" stroke="#f8c070" stroke-width="1.0" fill="none"/>
<polyline points="1038.0,583.7 1038.5,583.1 1039.0,585.9 1039.5,585.2 1040.0,585.4 1040.5,585.6 1041.0,584.4 1041.5,583.6 1042.0,586.0 1042.5,585.6 1043.0,582.2 1043.5,585.7 1044.0,581.9 1044.5,587.3 1045.0,585.1 1045.5,587.9 1046.0,584.5 1046.5,584.7 1047.0,585.8 1047.5,586.5 1048.0,584.8 1048.5,585.2 1049.0,582.5 1049.5,585.9 1050.0,584.5 1050.5,584.3 1051.0,585.7 1051.5,583.7 1052.0,584.4 1052.5,582.8 1053.0,585.0 1053.5,584.8 1054.0,581.8 1054.5,585.9 1055.0,584.2 1055.5,585.5 1056.0,580.4 1056.5,584.4 1057.0,584.7 1057.5,582.6 1058.0,585.1 1058.5,584.9 1059.0,585.1 1059.5,584.9 1060.0,582.8 1060.5,583.9 1061.0,579.6 1061.5,584.3 1062.0,584.0 1062.5,586.3 1063.0,586.8 1063.5,582.7 1064.0,582.3 1064.5,583.3 1065.0,583.7 1065.5,584.2 1066.0,580.9 1066.5,584.3 1067.0,583.2 1067.5,584.7 1068.0,587.3 1068.5,587.2 1069.0,586.4 1069.5,584.3 1070.0,581.3 1070.5,584.7 1071.0,581.9 1071.5,584.4 1072.0,585.8 1072.5,580.7 1073.0,582.2 1073.5,587.4 1074.0,581.8 1074.5,582.8 1075.0,586.8 1075.5,585.5 1076.0,585.2 1076.5,583.0 1077.0,585.2 1077.5,585.2 1078.0,583.5 1078.5,585.9 1079.0,588.0 1079.5,585.6 1080.0,587.8 1080.5,592.3 1081.0,587.5 1081.5,585.8 1082.0,586.0 1082.5,586.0 1083.0,586.4 1083.5,586.5 1084.0,584.5 1084.5,587.3 1085.0,586.8 1085.5,587.6 1086.0,588.2 1086.5,588.5 1087.0,588.1 1087.5,587.4 1088.0,585.3 1088.5,587.5 1089.0,589.7 1089.5,583.7 1090.0,586.5 1090.5,587.3 1091.0,588.3 1091.5,587.0 1092.0,588.1 1092.5,585.5 1093.0,587.6 1093.5,584.4 1094.0,586.7 1094.5,589.1 1095.0,590.0 1095.5,583.8 1096.0,588.1 1096.5,584.9 1097.0,586.1 1097.5,587.3 1098.0,585.7 1098.5,585.3 1099.0,583.3 1099.5,586.5 1100.0,583.1 1100.5,585.9 1101.0,587.3 1101.5,589.2 1102.0,581.3 1102.5,586.9 1103.0,588.4 1103.5,583.9 1104.0,583.0 1104.5,586.3 1105.0,584.4 1105.5,585.9 1106.0,585.0 1106.5,585.0 1107.0,580.0 1107.5,581.4 1108.0,582.7 1108.5,581.3 1109.0,585.5 1109.5,583.1 1110.0,585.5 1110.5,581.9 1111.0,580.8 1111.5,580.5 1112.0,582.6 1112.5,581.0 1113.0,579.8 1113.5,580.5 1114.0,582.5 1114.5,582.7 1115.0,582.3 1115.5,583.2 1116.0,582.5 1116.5,582.4 1117.0,580.7 1117.5,577.8 1118.0,586.9 1118.5,581.0 1119.0,581.4 1119.5,582.7 1120.0,582.9 1120.5,583.6 1121.0,585.1 1121.5,584.5 1122.0,583.9 1122.5,580.6 1123.0,584.8 1123.5,587.0 1124.0,584.9 1124.5,585.6 1125.0,583.9 1125.5,586.5 1126.0,582.6 1126.5,583.0 1127.0,583.9 1127.5,582.4 1128.0,582.8 1128.5,583.3 1129.0,585.6 1129.5,585.2 1130.0,581.9 1130.5,585.3 1131.0,583.6 1131.5,582.6 1132.0,583.0 1132.5,581.7 1133.0,582.9 1133.5,586.2 1134.0,584.4 1134.5,586.8 1135.0,586.9 1135.5,583.2 1136.0,583.9 1136.5,583.5 1137.0,586.0 1137.5,584.7 1138.0,585.5 1138.5,582.8 1139.0,582.1 1139.5,584.1 1140.0,581.3 1140.5,583.7 1141.0,582.8 1141.5,585.6 1142.0,584.6 1142.5,585.8 1143.0,584.6 1143.5,582.8 1144.0,586.6 1144.5,583.5 1145.0,583.1 1145.5,583.5 1146.0,585.4 1146.5,584.2 1147.0,584.5 1147.5,585.4 1148.0,584.2 1148.5,585.2 1149.0,585.5 1149.5,584.9 1150.0,585.6 1150.5,585.7 1151.0,582.0 1151.5,584.6 1152.0,585.4 1152.5,583.6 1153.0,585.6 1153.5,590.0 1154.0,585.3 1154.5,582.0 1155.0,587.9 1155.5,585.1 1156.0,585.2 1156.5,583.1 1157.0,586.7 1157.5,585.7 1158.0,586.0 1158.5,587.3 1159.0,588.1 1159.5,588.8 1160.0,586.2 1160.5,584.7 1161.0,587.8 1161.5,581.5 1162.0,586.7 1162.5,584.2 1163.0,585.1 1163.5,589.6 1164.0,585.6 1164.5,588.0 1165.0,587.8 1165.5,587.7 1166.0,584.7 1166.5,584.4 1167.0,589.8 1167.5,585.7 1168.0,587.3 1168.5,584.2 1169.0,584.9 1169.5,589.6 1170.0,585.8 1170.5,590.1 1171.0,589.5 1171.5,584.6" stroke="#f8c070" stroke-width="1.0" fill="none"/>
<polyline points="1201.0,578.4 1201.5,574.5 1202.0,580.2 1202.5,577.3 1203.0,579.7 1203.5,576.3 1204.0,578.8 1204.5,580.7 1205.0,582.9 1205.5,580.6 1206.0,582.9 1206.5,581.7 1207.0,578.2 1207.5,582.7 1208.0,578.6 1208.5,578.5 1209.0,581.1 1209.5,579.9 1210.0,583.2 1210.5,582.9 1211.0,579.9 1211.5,581.9 1212.0,582.2 1212.5,583.5 1213.0,581.7 1213.5,580.8 1214.0,580.7 1214.5,581.3 1215.0,584.1 1215.5,583.6 1216.0,581.8 1216.5,583.6 1217.0,583.5 1217.5,586.3 1218.0,581.0 1218.5,584.9 1219.0,582.7 1219.5,584.7 1220.0,581.4 1220.5,582.8 1221.0,590.9 1221.5,581.5 1222.0,585.1 1222.5,587.1 1223.0,584.8 1223.5,582.6 1224.0,585.8 1224.5,584.2 1225.0,585.9 1225.5,583.4 1226.0,585.5 1226.5,586.0 1227.0,583.1 1227.5,583.4 1228.0,582.3 1228.5,584.0 1229.0,582.9 1229.5,586.7 1230.0,584.4 1230.5,586.5 1231.0,585.5 1231.5,583.9 1232.0,584.6 1232.5,582.0 1233.0,586.8 1233.5,581.5 1234.0,584.1 1234.5,585.1 1235.0,584.5 1235.5,584.1 1236.0,586.5 1236.5,585.0 1237.0,585.4 1237.5,586.1 1238.0,584.9 1238.5,586.2 1239.0,585.8 1239.5,586.7 1240.0,583.6 1240.5,585.7 1241.0,587.3 1241.5,584.9 1242.0,586.2 1242.5,586.5 1243.0,587.4 1243.5,585.4 1244.0,584.3 1244.5,588.0 1245.0,588.3 1245.5,584.3 1246.0,585.9 1246.5,584.6 1247.0,584.7 1247.5,587.3 1248.0,584.9 1248.5,584.0 1249.0,584.3 1249.5,589.0 1250.0,585.9 1250.5,585.3 1251.0,585.8 1251.5,587.4 1252.0,587.0 1252.5,586.5 1253.0,585.3 1253.5,587.0 1254.0,583.2 1254.5,586.3 1255.0,586.3 1255.5,588.7 1256.0,587.1 1256.5,588.9 1257.0,589.1 1257.5,586.3 1258.0,587.8 1258.5,586.0 1259.0,587.6 1259.5,588.0 1260.0,587.6 1260.5,588.1 1261.0,586.8 1261.5,583.8 1262.0,588.2 1262.5,587.1 1263.0,588.5 1263.5,590.1 1264.0,590.3 1264.5,589.3 1265.0,587.8 1265.5,587.2 1266.0,589.9 1266.5,587.6 1267.0,587.7 1267.5,588.0 1268.0,588.6 1268.5,586.7 1269.0,585.9 1269.5,587.6 1270.0,589.4 1270.5,586.6 1271.0,587.5 1271.5,587.8 1272.0,582.4 1272.5,585.8 1273.0,586.8 1273.5,584.0 1274.0,584.8 1274.5,585.1 1275.0,588.2 1275.5,582.8 1276.0,586.3 1276.5,587.7 1277.0,586.1 1277.5,580.5 1278.0,585.3 1278.5,582.9 1279.0,584.1 1279.5,582.5 1280.0,586.1 1280.5,582.8 1281.0,583.2 1281.5,587.1 1282.0,585.6 1282.5,578.5 1283.0,583.2 1283.5,581.7 1284.0,584.2 1284.5,581.4 1285.0,586.4 1285.5,584.9 1286.0,583.1 1286.5,580.7 1287.0,579.4 1287.5,584.7 1288.0,584.1 1288.5,583.8 1289.0,580.5 1289.5,584.0 1290.0,582.6 1290.5,582.5 1291.0,583.7 1291.5,585.6 1292.0,586.8 1292.5,581.3 1293.0,580.5 1293.5,582.0 1294.0,584.6 1294.5,582.2 1295.0,585.6 1295.5,585.5 1296.0,588.4 1296.5,585.3 1297.0,585.4 1297.5,585.5 1298.0,584.0 1298.5,583.4 1299.0,587.3 1299.5,581.0 1300.0,581.3 1300.5,584.5 1301.0,585.0 1301.5,583.6 1302.0,584.8 1302.5,584.8 1303.0,586.1 1303.5,587.4 1304.0,584.1 1304.5,587.9 1305.0,580.7 1305.5,581.2 1306.0,580.9 1306.5,583.5 1307.0,586.8 1307.5,582.6 1308.0,584.4 1308.5,586.1 1309.0,585.1 1309.5,583.8 1310.0,583.4 1310.5,584.9 1311.0,583.0 1311.5,584.4 1312.0,584.5 1312.5,582.1 1313.0,581.5 1313.5,587.6 1314.0,580.5 1314.5,582.2 1315.0,584.2 1315.5,584.8 1316.0,583.9 1316.5,586.8 1317.0,583.8 1317.5,583.0 1318.0,581.2 1318.5,583.6 1319.0,583.3 1319.5,583.6 1320.0,585.5 1320.5,584.4 1321.0,585.1 1321.5,586.5 1322.0,583.3 1322.5,582.3 1323.0,582.7 1323.5,580.7 1324.0,580.5 1324.5,586.5 1325.0,586.3 1325.5,584.6 1326.0,584.7 1326.5,584.3 1327.0,584.9 1327.5,583.8 1328.0,586.0 1328.5,583.1 1329.0,582.4 1329.5,586.0 1330.0,585.3 1330.5,584.4 1331.0,585.5 1331.5,585.8 1332.0,589.9 1332.5,584.3 1333.0,586.0 1333.5,586.8 1334.0,585.6 1334.5,583.7" stroke="#f8c070" stroke-width="1.0" fill="none"/>
<polyline points="1364.0,586.3 1364.5,586.8 1365.0,582.7 1365.5,584.9 1366.0,584.6 1366.5,584.8 1367.0,585.1 1367.5,587.7 1368.0,584.9 1368.5,585.5 1369.0,583.3 1369.5,587.2 1370.0,585.6 1370.5,583.1 1371.0,583.8 1371.5,583.9 1372.0,584.2 1372.5,585.2 1373.0,583.7 1373.5,586.3 1374.0,585.2 1374.5,585.6 1375.0,583.8 1375.5,581.5 1376.0,586.6 1376.5,586.5 1377.0,583.7 1377.5,583.7 1378.0,586.3 1378.5,585.7 1379.0,585.2 1379.5,586.2 1380.0,588.8 1380.5,585.9 1381.0,582.9 1381.5,584.5 1382.0,585.3 1382.5,583.7 1383.0,584.0 1383.5,585.4 1384.0,584.0 1384.5,584.2 1385.0,584.3 1385.5,583.2 1386.0,584.4 1386.5,585.9 1387.0,582.5 1387.5,587.4 1388.0,584.7 1388.5,585.0 1389.0,582.8 1389.5,580.1 1390.0,582.8 1390.5,580.5 1391.0,585.6 1391.5,584.3 1392.0,583.0 1392.5,582.1 1393.0,586.5 1393.5,583.4 1394.0,583.3 1394.5,580.5 1395.0,585.8 1395.5,582.0 1396.0,584.0 1396.5,584.0 1397.0,588.3 1397.5,580.3 1398.0,585.2 1398.5,581.2 1399.0,582.1 1399.5,581.5 1400.0,582.9 1400.5,584.7 1401.0,582.7 1401.5,584.9 1402.0,583.2 1402.5,585.2 1403.0,586.2 1403.5,587.3 1404.0,584.6 1404.5,582.7 1405.0,587.5 1405.5,584.8 1406.0,583.7 1406.5,587.5 1407.0,585.9 1407.5,585.0 1408.0,585.7 1408.5,587.8 1409.0,586.7 1409.5,587.7 1410.0,585.5 1410.5,584.5 1411.0,589.1 1411.5,587.4 1412.0,584.3 1412.5,586.5 1413.0,587.1 1413.5,588.5 1414.0,586.8 1414.5,585.0 1415.0,584.3 1415.5,587.2 1416.0,588.2 1416.5,585.6 1417.0,588.0 1417.5,586.7 1418.0,589.8 1418.5,585.2 1419.0,588.1 1419.5,585.6 1420.0,586.0 1420.5,587.2 1421.0,584.7 1421.5,588.6 1422.0,584.3 1422.5,587.3 1423.0,586.3 1423.5,584.6 1424.0,586.1 1424.5,586.2 1425.0,585.5 1425.5,586.8 1426.0,585.9 1426.5,587.8 1427.0,586.9 1427.5,585.7 1428.0,584.3 1428.5,585.0 1429.0,583.5 1429.5,585.5 1430.0,585.8 1430.5,584.3 1431.0,582.0 1431.5,583.2 1432.0,584.4 1432.5,582.5 1433.0,584.1 1433.5,583.3 1434.0,581.1 1434.5,581.0 1435.0,580.6 1435.5,584.8 1436.0,582.7 1436.5,580.8 1437.0,580.7 1437.5,582.8 1438.0,583.8 1438.5,583.3 1439.0,581.8 1439.5,585.0 1440.0,583.4 1440.5,584.2 1441.0,583.2 1441.5,581.6 1442.0,581.3 1442.5,584.6 1443.0,586.3 1443.5,584.8 1444.0,581.6 1444.5,581.1 1445.0,583.7 1445.5,581.6 1446.0,581.9 1446.5,584.4 1447.0,582.2 1447.5,581.6 1448.0,583.7 1448.5,581.5 1449.0,583.3 1449.5,583.0 1450.0,582.4 1450.5,581.2 1451.0,583.9 1451.5,584.5 1452.0,583.4 1452.5,586.0 1453.0,584.6 1453.5,585.4 1454.0,585.0 1454.5,585.1 1455.0,582.8 1455.5,586.1 1456.0,584.2 1456.5,581.6 1457.0,584.9 1457.5,581.9 1458.0,579.6 1458.5,585.3 1459.0,586.8 1459.5,585.4 1460.0,586.6 1460.5,583.5 1461.0,585.4 1461.5,588.6 1462.0,585.4 1462.5,582.9 1463.0,580.8 1463.5,583.4 1464.0,583.9 1464.5,584.5 1465.0,586.3 1465.5,585.2 1466.0,583.9 1466.5,585.6 1467.0,587.8 1467.5,580.6 1468.0,583.6 1468.5,588.2 1469.0,584.5 1469.5,585.2 1470.0,581.9 1470.5,582.3 1471.0,581.6 1471.5,585.2 1472.0,585.9 1472.5,584.3 1473.0,584.8 1473.5,587.4 1474.0,585.7 1474.5,589.0 1475.0,584.5 1475.5,585.0 1476.0,586.2 1476.5,584.0 1477.0,584.9 1477.5,582.7 1478.0,587.4 1478.5,588.5 1479.0,585.7 1479.5,584.4 1480.0,585.8 1480.5,584.9 1481.0,584.0 1481.5,585.9 1482.0,585.7 1482.5,585.9 1483.0,586.9 1483.5,584.0 1484.0,588.1 1484.5,588.1 1485.0,586.7 1485.5,583.7 1486.0,584.3 1486.5,582.6 1487.0,584.6 1487.5,587.5 1488.0,587.6 1488.5,585.3 1489.0,585.6 1489.5,586.2 1490.0,584.9 1490.5,588.0 1491.0,588.5 1491.5,586.4 1492.0,585.1 1492.5,586.1 1493.0,586.2 1493.5,589.7 1494.0,586.2 1494.5,585.9 1495.0,585.7 1495.5,585.3 1496.0,587.3 1496.5,586.7 1497.0,588.7 1497.5,587.9" stroke="#f8c070" stroke-width="1.0" fill="none"/>
<polyline points="1527.0,580.2 1527.5,579.6 1528.0,577.1 1528.5,579.3 1529.0,580.5 1529.5,580.0 1530.0,581.5 1530.5,581.3 1531.0,580.0 1531.5,580.5 1532.0,581.9 1532.5,579.8 1533.0,582.7 1533.5,580.3 1534.0,581.4 1534.5,578.0 1535.0,578.3 1535.5,583.3 1536.0,579.7 1536.5,580.8 1537.0,578.5 1537.5,580.5 1538.0,587.3 1538.5,578.7 1539.0,579.8 1539.5,579.7 1540.0,581.4 1540.5,584.9 1541.0,580.9 1541.5,579.4 1542.0,581.2 1542.5,583.2 1543.0,584.5 1543.5,584.7 1544.0,582.2 1544.5,585.1 1545.0,583.1 1545.5,582.2 1546.0,583.1 1546.5,581.8 1547.0,581.7 1547.5,583.5 1548.0,582.2 1548.5,587.9 1549.0,584.3 1549.5,588.2 1550.0,584.7 1550.5,582.4 1551.0,584.3 1551.5,584.3 1552.0,584.6 1552.5,585.8 1553.0,585.3 1553.5,585.9 1554.0,585.2 1554.5,583.5 1555.0,586.1 1555.5,584.8 1556.0,582.1 1556.5,583.1 1557.0,585.6 1557.5,586.0 1558.0,584.0 1558.5,585.7 1559.0,585.4 1559.5,585.7 1560.0,585.5 1560.5,586.8 1561.0,583.8 1561.5,585.6 1562.0,587.7 1562.5,585.9 1563.0,583.2 1563.5,586.4 1564.0,587.6 1564.5,586.3 1565.0,585.0 1565.5,587.3 1566.0,585.0 1566.5,587.7 1567.0,585.0 1567.5,585.0 1568.0,585.7 1568.5,586.5 1569.0,585.4 1569.5,584.2 1570.0,585.1 1570.5,590.6 1571.0,587.2 1571.5,585.6 1572.0,587.8 1572.5,591.8 1573.0,585.6 1573.5,586.0 1574.0,586.2 1574.5,588.7 1575.0,586.3 1575.5,585.8 1576.0,584.2 1576.5,587.3 1577.0,588.3 1577.5,590.8 1578.0,585.0 1578.5,588.7 1579.0,585.1 1579.5,588.3 1580.0,591.2 1580.5,585.7 1581.0,584.0 1581.5,587.9 1582.0,586.4 1582.5,583.4 1583.0,587.0 1583.5,590.3 1584.0,585.3 1584.5,589.7 1585.0,586.9 1585.5,586.6 1586.0,587.8 1586.5,589.0 1587.0,587.3 1587.5,586.3 1588.0,588.3 1588.5,586.3 1589.0,589.3 1589.5,587.7 1590.0,589.1 1590.5,586.1 1591.0,587.6 1591.5,588.6 1592.0,586.7 1592.5,585.0 1593.0,586.1 1593.5,591.5 1594.0,587.7 1594.5,586.0 1595.0,586.1 1595.5,583.8 1596.0,587.1 1596.5,585.7 1597.0,585.7 1597.5,587.2 1598.0,586.8 1598.5,584.0 1599.0,587.1 1599.5,584.1 1600.0,585.5 1600.5,586.6 1601.0,588.1 1601.5,584.7 1602.0,585.9 1602.5,583.5 1603.0,584.8 1603.5,585.7 1604.0,584.8 1604.5,587.2 1605.0,585.7 1605.5,585.7 1606.0,585.8 1606.5,583.8 1607.0,585.7 1607.5,587.5 1608.0,583.0 1608.5,583.3 1609.0,584.8 1609.5,582.5 1610.0,581.9 1610.5,582.3 1611.0,581.0 1611.5,584.4 1612.0,578.5 1612.5,579.4 1613.0,583.7 1613.5,583.0 1614.0,584.3 1614.5,580.7 1615.0,579.9 1615.5,581.9 1616.0,582.9 1616.5,585.5 1617.0,581.8 1617.5,584.6 1618.0,582.9 1618.5,580.3 1619.0,580.5 1619.5,581.4 1620.0,586.8 1620.5,584.5 1621.0,586.3 1621.5,582.0 1622.0,582.1 1622.5,582.9 1623.0,582.6 1623.5,582.7 1624.0,580.4 1624.5,582.3 1625.0,585.7 1625.5,584.3 1626.0,586.3 1626.5,583.5 1627.0,581.4 1627.5,583.1 1628.0,582.5 1628.5,587.2 1629.0,586.5 1629.5,584.6 1630.0,583.2 1630.5,584.9 1631.0,582.9 1631.5,583.2 1632.0,584.9 1632.5,580.1 1633.0,583.0 1633.5,585.2 1634.0,581.5 1634.5,582.6 1635.0,584.0 1635.5,586.2 1636.0,585.2 1636.5,582.9 1637.0,585.7 1637.5,584.9 1638.0,583.5 1638.5,586.8 1639.0,585.0 1639.5,582.5 1640.0,584.9 1640.5,583.3 1641.0,584.4 1641.5,584.5 1642.0,586.8 1642.5,586.1 1643.0,586.9 1643.5,580.2 1644.0,585.8 1644.5,583.8 1645.0,585.7 1645.5,582.7 1646.0,583.6 1646.5,584.2 1647.0,584.6 1647.5,587.1 1648.0,585.0 1648.5,581.7 1649.0,583.9 1649.5,587.4 1650.0,585.0 1650.5,585.2 1651.0,584.9 1651.5,585.1 1652.0,584.2 1652.5,583.9 1653.0,585.8 1653.5,582.5 1654.0,583.8 1654.5,585.6 1655.0,585.0 1655.5,582.5 1656.0,583.5 1656.5,585.5 1657.0,584.8 1657.5,586.0 1658.0,583.3 1658.5,583.0 1659.0,586.2 1659.5,583.8 1660.0,584.4 1660.5,585.8" stroke="#f8c070" stroke-width="1.0" fill="none"/>
<polyline points="223.0,633.0 356.5,537.7" stroke="#10e8f8" stroke-width="1.2" fill="none"/>
<polyline points="386.0,537.3 519.5,632.6" stroke="#10e8f8" stroke-width="1.2" fill="none"/>
<polyline points="549.0,633.0 682.5,537.7" stroke="#10e8f8" stroke-width="1.2" fill="none"/>
<polyline points="712.0,537.3 845.5,632.6" stroke="#10e8f8" stroke-width="1.2" fill="none"/>
<polyline points="875.0,633.0 1008.5,537.7" stroke="#10e8f8" stroke-width="1.2" fill="none"/>
<polyline points="1038.0,537.3 1171.5,632.6" stroke="#10e8f8" stroke-width="1.2" fill="none"/>
<polyline points="1201.0,633.0 1334.5,537.7" stroke="#10e8f8" stroke-width="1.2" fill="none"/>
<polyline points="1364.0,537.3 1497.5,632.6" stroke="#10e8f8" stroke-width="1.2" fill="none"/>
<polyline points="1527.0,633.0 1660.5,537.7" stroke="#10e8f8" stroke-width="1.2" fill="none"/>
<text x="72" y="507.5" font-size="13" fill="#e6e6e6" text-anchor="start">Rng 158.4893 mV</text>
<text x="67" y="523.5" font-size="13" fill="#e6e6e6" text-anchor="end">100</text>
<text x="67" y="538.5" font-size="13" fill="#e6e6e6" text-anchor="end">MHz</text>
<text x="67" y="562" font-size="13" fill="#e6e6e6" text-anchor="end">Real</text>
<text x="67" y="587" font-size="13" fill="#e6e6e6" text-anchor="end">20</text>
<text x="67" y="602" font-size="13" fill="#e6e6e6" text-anchor="end">MHz</text>
<text x="67" y="617.5" font-size="13" fill="#e6e6e6" text-anchor="end">/div</text>
<text x="67" y="642" font-size="13" fill="#e6e6e6" text-anchor="end">-100</text>
<text x="67" y="657" font-size="13" fill="#e6e6e6" text-anchor="end">MHz</text>
<text x="72" y="673.5" font-size="13" fill="#e6e6e6" text-anchor="start">Start -48.83 uSec</text>
<text x="1665" y="673.5" font-size="13" fill="#e6e6e6" text-anchor="end">Stop 489.01 uSec</text>
<path d="M71.5,562 L77.5,573.5 L71.5,585 Z" fill="#ffffff"/>
<text x="79.5" y="570" font-size="12.5" fill="#f8c070" text-anchor="start" font-weight="bold">1</text>
<rect x="9" y="731" width="1664" height="1" fill="#2f8f8f"/>
<rect x="10" y="732" width="1643" height="64" fill="#404040"/>
<rect x="10" y="794" width="1643" height="2" fill="#383838"/>
<rect x="1653" y="732" width="20" height="64" fill="#000"/>
<rect x="65" y="733" width="1" height="61" fill="#5c5c5c"/>
<rect x="120" y="733" width="1" height="61" fill="#5c5c5c"/>
<rect x="175" y="733" width="1" height="61" fill="#5c5c5c"/>
<rect x="230" y="733" width="1" height="61" fill="#5c5c5c"/>
<rect x="296" y="733" width="1" height="61" fill="#5c5c5c"/>
<rect x="360" y="733" width="1" height="61" fill="#5c5c5c"/>
<rect x="436" y="733" width="1" height="61" fill="#5c5c5c"/>
<rect x="511" y="733" width="1" height="61" fill="#5c5c5c"/>
<rect x="585" y="733" width="1" height="61" fill="#5c5c5c"/>
<rect x="640" y="733" width="1" height="61" fill="#5c5c5c"/>
<rect x="695" y="733" width="1" height="61" fill="#5c5c5c"/>
<rect x="750" y="733" width="1" height="61" fill="#5c5c5c"/>
<rect x="823" y="733" width="1" height="61" fill="#5c5c5c"/>
<rect x="892" y="733" width="1" height="61" fill="#5c5c5c"/>
<rect x="956" y="733" width="1" height="61" fill="#5c5c5c"/>
<rect x="1026" y="733" width="1" height="61" fill="#5c5c5c"/>
<text x="11" y="768.7" font-size="13" fill="#e6e6e6" text-anchor="start">Region</text>
<text x="67" y="760.9" font-size="13" fill="#e6e6e6" text-anchor="start">Ref</text>
<text x="67" y="776.5" font-size="13" fill="#e6e6e6" text-anchor="start">Region</text>
<text x="122" y="753.1" font-size="13" fill="#e6e6e6" text-anchor="start">Power</text>
<text x="122" y="768.7" font-size="13" fill="#e6e6e6" text-anchor="start">Mean</text>
<text x="122" y="784.3" font-size="13" fill="#e6e6e6" text-anchor="start">(dBm)</text>
<text x="177" y="745.3" font-size="13" fill="#e6e6e6" text-anchor="start">Power</text>
<text x="177" y="760.9" font-size="13" fill="#e6e6e6" text-anchor="start">Pk-Pk</text>
<text x="177" y="776.5" font-size="13" fill="#e6e6e6" text-anchor="start">Dev</text>
<text x="177" y="792.1" font-size="13" fill="#e6e6e6" text-anchor="start">(dB)</text>
<text x="232" y="760.9" font-size="13" fill="#e6e6e6" text-anchor="start">Time Start</text>
<text x="232" y="776.5" font-size="13" fill="#e6e6e6" text-anchor="start">(sec)</text>
<text x="298" y="753.1" font-size="13" fill="#e6e6e6" text-anchor="start">Time</text>
<text x="298" y="768.7" font-size="13" fill="#e6e6e6" text-anchor="start">Length</text>
<text x="298" y="784.3" font-size="13" fill="#e6e6e6" text-anchor="start">(sec)</text>
<text x="362" y="753.1" font-size="13" fill="#e6e6e6" text-anchor="start">Best-Fit FM</text>
<text x="362" y="768.7" font-size="13" fill="#e6e6e6" text-anchor="start">Mean</text>
<text x="362" y="784.3" font-size="13" fill="#e6e6e6" text-anchor="start">(Hz)</text>
<text x="438" y="753.1" font-size="13" fill="#e6e6e6" text-anchor="start">Best-Fit FM</text>
<text x="438" y="768.7" font-size="13" fill="#e6e6e6" text-anchor="start">Pk-Pk Dev</text>
<text x="438" y="784.3" font-size="13" fill="#e6e6e6" text-anchor="start">(Hz)</text>
<text x="513" y="753.1" font-size="13" fill="#e6e6e6" text-anchor="start">Best-Fit FM</text>
<text x="513" y="768.7" font-size="13" fill="#e6e6e6" text-anchor="start">Slope</text>
<text x="513" y="784.3" font-size="13" fill="#e6e6e6" text-anchor="start">(Hz/µs)</text>
<text x="587" y="753.1" font-size="13" fill="#e6e6e6" text-anchor="start">Best-Fit</text>
<text x="587" y="768.7" font-size="13" fill="#e6e6e6" text-anchor="start">FM INL</text>
<text x="587" y="784.3" font-size="13" fill="#e6e6e6" text-anchor="start">(%)</text>
<text x="642" y="745.3" font-size="13" fill="#e6e6e6" text-anchor="start">Phase</text>
<text x="642" y="760.9" font-size="13" fill="#e6e6e6" text-anchor="start">Error</text>
<text x="642" y="776.5" font-size="13" fill="#e6e6e6" text-anchor="start">RMS</text>
<text x="642" y="792.1" font-size="13" fill="#e6e6e6" text-anchor="start">(deg)</text>
<text x="697" y="745.3" font-size="13" fill="#e6e6e6" text-anchor="start">Phase</text>
<text x="697" y="760.9" font-size="13" fill="#e6e6e6" text-anchor="start">Error</text>
<text x="697" y="776.5" font-size="13" fill="#e6e6e6" text-anchor="start">Peak</text>
<text x="697" y="792.1" font-size="13" fill="#e6e6e6" text-anchor="start">(deg)</text>
<text x="752" y="753.1" font-size="13" fill="#e6e6e6" text-anchor="start">FM Error</text>
<text x="752" y="768.7" font-size="13" fill="#e6e6e6" text-anchor="start">RMS</text>
<text x="752" y="784.3" font-size="13" fill="#e6e6e6" text-anchor="start">(Hz)</text>
<text x="825" y="753.1" font-size="13" fill="#e6e6e6" text-anchor="start">FM Error</text>
<text x="825" y="768.7" font-size="13" fill="#e6e6e6" text-anchor="start">Peak</text>
<text x="825" y="784.3" font-size="13" fill="#e6e6e6" text-anchor="start">(Hz)</text>
<text x="894" y="745.3" font-size="13" fill="#e6e6e6" text-anchor="start">FM Slope</text>
<text x="894" y="760.9" font-size="13" fill="#e6e6e6" text-anchor="start">Error</text>
<text x="894" y="776.5" font-size="13" fill="#e6e6e6" text-anchor="start">RMS</text>
<text x="894" y="792.1" font-size="13" fill="#e6e6e6" text-anchor="start">(Hz/µs)</text>
<text x="958" y="753.1" font-size="13" fill="#e6e6e6" text-anchor="start">FM Slope</text>
<text x="958" y="768.7" font-size="13" fill="#e6e6e6" text-anchor="start">Error Peak</text>
<text x="958" y="784.3" font-size="13" fill="#e6e6e6" text-anchor="start">(Hz/µs)</text>
<clipPath id="tclip"><rect x="9" y="796" width="1650" height="117"/></clipPath><g clip-path="url(#tclip)">
<text x="57.7" y="810.0" font-size="13" fill="#f0f0f0" text-anchor="end">1</text>
<text x="113.4" y="810.0" font-size="13" fill="#f0f0f0" text-anchor="end">1</text>
<text x="168.6" y="810.0" font-size="13" fill="#f0f0f0" text-anchor="end">-7.28</text>
<text x="223.2" y="810.0" font-size="13" fill="#f0f0f0" text-anchor="end">2.21</text>
<text x="289.6" y="810.0" font-size="13" fill="#f0f0f0" text-anchor="end">2.50854 µ</text>
<text x="354" y="810.0" font-size="13" fill="#f0f0f0" text-anchor="end">45.1538 µ</text>
<text x="430" y="810.0" font-size="13" fill="#f0f0f0" text-anchor="end">-5.704847 k</text>
<text x="505.7" y="810.0" font-size="13" fill="#f0f0f0" text-anchor="end">126.4316 M</text>
<text x="577.3" y="810.0" font-size="13" fill="#f0f0f0" text-anchor="end">2.80002 M</text>
<text x="634" y="810.0" font-size="13" fill="#f0f0f0" text-anchor="end">0.004</text>
<text x="689" y="810.0" font-size="13" fill="#f0f0f0" text-anchor="end">2.065</text>
<text x="744.3" y="810.0" font-size="13" fill="#f0f0f0" text-anchor="end">-4.016</text>
<text x="816.7" y="810.0" font-size="13" fill="#f0f0f0" text-anchor="end">1.5277 k</text>
<text x="885.7" y="810.0" font-size="13" fill="#f0f0f0" text-anchor="end">4.59 k</text>
<text x="950.7" y="810.0" font-size="13" fill="#f0f0f0" text-anchor="end">9.37174 k</text>
<text x="1020" y="810.0" font-size="13" fill="#f0f0f0" text-anchor="end">28.7128 k</text>
<text x="57.7" y="827.5" font-size="13" fill="#f0f0f0" text-anchor="end">2</text>
<text x="113.4" y="827.5" font-size="13" fill="#f0f0f0" text-anchor="end">2</text>
<text x="168.6" y="827.5" font-size="13" fill="#f0f0f0" text-anchor="end">-7.70</text>
<text x="223.2" y="827.5" font-size="13" fill="#f0f0f0" text-anchor="end">2.48</text>
<text x="289.6" y="827.5" font-size="13" fill="#f0f0f0" text-anchor="end">57.4463 µ</text>
<text x="354" y="827.5" font-size="13" fill="#f0f0f0" text-anchor="end">45.2637 µ</text>
<text x="430" y="827.5" font-size="13" fill="#f0f0f0" text-anchor="end">26.15339 k</text>
<text x="505.7" y="827.5" font-size="13" fill="#f0f0f0" text-anchor="end">126.7373 M</text>
<text x="577.3" y="827.5" font-size="13" fill="#f0f0f0" text-anchor="end">-2.79998 M</text>
<text x="634" y="827.5" font-size="13" fill="#f0f0f0" text-anchor="end">0.003</text>
<text x="689" y="827.5" font-size="13" fill="#f0f0f0" text-anchor="end">1.841</text>
<text x="744.3" y="827.5" font-size="13" fill="#f0f0f0" text-anchor="end">-3.733</text>
<text x="816.7" y="827.5" font-size="13" fill="#f0f0f0" text-anchor="end">1.40364 k</text>
<text x="885.7" y="827.5" font-size="13" fill="#f0f0f0" text-anchor="end">4.251 k</text>
<text x="950.7" y="827.5" font-size="13" fill="#f0f0f0" text-anchor="end">8.27512 k</text>
<text x="1020" y="827.5" font-size="13" fill="#f0f0f0" text-anchor="end">-26.6013 k</text>
<text x="57.7" y="844.9" font-size="13" fill="#f0f0f0" text-anchor="end">3</text>
<text x="113.4" y="844.9" font-size="13" fill="#f0f0f0" text-anchor="end">1</text>
<text x="168.6" y="844.9" font-size="13" fill="#f0f0f0" text-anchor="end">-7.28</text>
<text x="223.2" y="844.9" font-size="13" fill="#f0f0f0" text-anchor="end">2.22</text>
<text x="289.6" y="844.9" font-size="13" fill="#f0f0f0" text-anchor="end">112.494 µ</text>
<text x="354" y="844.9" font-size="13" fill="#f0f0f0" text-anchor="end">45.1538 µ</text>
<text x="430" y="844.9" font-size="13" fill="#f0f0f0" text-anchor="end">-46.73476 k</text>
<text x="505.7" y="844.9" font-size="13" fill="#f0f0f0" text-anchor="end">126.4316 M</text>
<text x="577.3" y="844.9" font-size="13" fill="#f0f0f0" text-anchor="end">2.80002 M</text>
<text x="634" y="844.9" font-size="13" fill="#f0f0f0" text-anchor="end">0.003</text>
<text x="689" y="844.9" font-size="13" fill="#f0f0f0" text-anchor="end">2.003</text>
<text x="744.3" y="844.9" font-size="13" fill="#f0f0f0" text-anchor="end">-3.95</text>
<text x="816.7" y="844.9" font-size="13" fill="#f0f0f0" text-anchor="end">1.4602 k</text>
<text x="885.7" y="844.9" font-size="13" fill="#f0f0f0" text-anchor="end">3.766 k</text>
<text x="950.7" y="844.9" font-size="13" fill="#f0f0f0" text-anchor="end">9.13451 k</text>
<text x="1020" y="844.9" font-size="13" fill="#f0f0f0" text-anchor="end">25.2215 k</text>
<text x="57.7" y="862.4" font-size="13" fill="#f0f0f0" text-anchor="end">4</text>
<text x="113.4" y="862.4" font-size="13" fill="#f0f0f0" text-anchor="end">2</text>
<text x="168.6" y="862.4" font-size="13" fill="#f0f0f0" text-anchor="end">-7.70</text>
<text x="223.2" y="862.4" font-size="13" fill="#f0f0f0" text-anchor="end">2.47</text>
<text x="289.6" y="862.4" font-size="13" fill="#f0f0f0" text-anchor="end">167.432 µ</text>
<text x="354" y="862.4" font-size="13" fill="#f0f0f0" text-anchor="end">45.2637 µ</text>
<text x="430" y="862.4" font-size="13" fill="#f0f0f0" text-anchor="end">67.19404 k</text>
<text x="505.7" y="862.4" font-size="13" fill="#f0f0f0" text-anchor="end">126.7374 M</text>
<text x="577.3" y="862.4" font-size="13" fill="#f0f0f0" text-anchor="end">-2.79998 M</text>
<text x="634" y="862.4" font-size="13" fill="#f0f0f0" text-anchor="end">0.004</text>
<text x="689" y="862.4" font-size="13" fill="#f0f0f0" text-anchor="end">1.8</text>
<text x="744.3" y="862.4" font-size="13" fill="#f0f0f0" text-anchor="end">-3.697</text>
<text x="816.7" y="862.4" font-size="13" fill="#f0f0f0" text-anchor="end">1.42515 k</text>
<text x="885.7" y="862.4" font-size="13" fill="#f0f0f0" text-anchor="end">-4.712 k</text>
<text x="950.7" y="862.4" font-size="13" fill="#f0f0f0" text-anchor="end">9.82221 k</text>
<text x="1020" y="862.4" font-size="13" fill="#f0f0f0" text-anchor="end">27.2953 k</text>
<text x="57.7" y="879.8" font-size="13" fill="#f0f0f0" text-anchor="end">5</text>
<text x="113.4" y="879.8" font-size="13" fill="#f0f0f0" text-anchor="end">1</text>
<text x="168.6" y="879.8" font-size="13" fill="#f0f0f0" text-anchor="end">-7.28</text>
<text x="223.2" y="879.8" font-size="13" fill="#f0f0f0" text-anchor="end">2.22</text>
<text x="289.6" y="879.8" font-size="13" fill="#f0f0f0" text-anchor="end">222.485 µ</text>
<text x="354" y="879.8" font-size="13" fill="#f0f0f0" text-anchor="end">45.2637 µ</text>
<text x="430" y="879.8" font-size="13" fill="#f0f0f0" text-anchor="end">83.15977 k</text>
<text x="505.7" y="879.8" font-size="13" fill="#f0f0f0" text-anchor="end">126.7392 M</text>
<text x="577.3" y="879.8" font-size="13" fill="#f0f0f0" text-anchor="end">2.80002 M</text>
<text x="634" y="879.8" font-size="13" fill="#f0f0f0" text-anchor="end">0.004</text>
<text x="689" y="879.8" font-size="13" fill="#f0f0f0" text-anchor="end">2.07</text>
<text x="744.3" y="879.8" font-size="13" fill="#f0f0f0" text-anchor="end">-4.169</text>
<text x="816.7" y="879.8" font-size="13" fill="#f0f0f0" text-anchor="end">1.50275 k</text>
<text x="885.7" y="879.8" font-size="13" fill="#f0f0f0" text-anchor="end">4.52 k</text>
<text x="950.7" y="879.8" font-size="13" fill="#f0f0f0" text-anchor="end">9.35082 k</text>
<text x="1020" y="879.8" font-size="13" fill="#f0f0f0" text-anchor="end">27.1403 k</text>
<text x="57.7" y="897.3" font-size="13" fill="#f0f0f0" text-anchor="end">6</text>
<text x="113.4" y="897.3" font-size="13" fill="#f0f0f0" text-anchor="end">2</text>
<text x="168.6" y="897.3" font-size="13" fill="#f0f0f0" text-anchor="end">-7.69</text>
<text x="223.2" y="897.3" font-size="13" fill="#f0f0f0" text-anchor="end">2.48</text>
<text x="289.6" y="897.3" font-size="13" fill="#f0f0f0" text-anchor="end">277.533 µ</text>
<text x="354" y="897.3" font-size="13" fill="#f0f0f0" text-anchor="end">45.1538 µ</text>
<text x="430" y="897.3" font-size="13" fill="#f0f0f0" text-anchor="end">-62.70564 k</text>
<text x="505.7" y="897.3" font-size="13" fill="#f0f0f0" text-anchor="end">126.4298 M</text>
<text x="577.3" y="897.3" font-size="13" fill="#f0f0f0" text-anchor="end">-2.79998 M</text>
<text x="634" y="897.3" font-size="13" fill="#f0f0f0" text-anchor="end">0.004</text>
<text x="689" y="897.3" font-size="13" fill="#f0f0f0" text-anchor="end">1.853</text>
<text x="744.3" y="897.3" font-size="13" fill="#f0f0f0" text-anchor="end">-3.734</text>
<text x="816.7" y="897.3" font-size="13" fill="#f0f0f0" text-anchor="end">1.44599 k</text>
<text x="885.7" y="897.3" font-size="13" fill="#f0f0f0" text-anchor="end">4.5825 k</text>
<text x="950.7" y="897.3" font-size="13" fill="#f0f0f0" text-anchor="end">9.1611 k</text>
<text x="1020" y="897.3" font-size="13" fill="#f0f0f0" text-anchor="end">26.641 k</text>
<text x="57.7" y="914.8" font-size="13" fill="#f0f0f0" text-anchor="end">7</text>
<text x="113.4" y="914.8" font-size="13" fill="#f0f0f0" text-anchor="end">1</text>
<text x="168.6" y="914.8" font-size="13" fill="#f0f0f0" text-anchor="end">-7.28</text>
<text x="223.2" y="914.8" font-size="13" fill="#f0f0f0" text-anchor="end">2.22</text>
<text x="289.6" y="914.8" font-size="13" fill="#f0f0f0" text-anchor="end">332.471 µ</text>
<text x="354" y="914.8" font-size="13" fill="#f0f0f0" text-anchor="end">45.2637 µ</text>
<text x="430" y="914.8" font-size="13" fill="#f0f0f0" text-anchor="end">42.13295 k</text>
<text x="505.7" y="914.8" font-size="13" fill="#f0f0f0" text-anchor="end">126.7392 M</text>
<text x="577.3" y="914.8" font-size="13" fill="#f0f0f0" text-anchor="end">2.80002 M</text>
<text x="634" y="914.8" font-size="13" fill="#f0f0f0" text-anchor="end">0.004</text>
<text x="689" y="914.8" font-size="13" fill="#f0f0f0" text-anchor="end">2.035</text>
<text x="744.3" y="914.8" font-size="13" fill="#f0f0f0" text-anchor="end">-4.135</text>
<text x="816.7" y="914.8" font-size="13" fill="#f0f0f0" text-anchor="end">1.53197 k</text>
<text x="885.7" y="914.8" font-size="13" fill="#f0f0f0" text-anchor="end">4.936 k</text>
<text x="950.7" y="914.8" font-size="13" fill="#f0f0f0" text-anchor="end">9.55687 k</text>
<text x="1020" y="914.8" font-size="13" fill="#f0f0f0" text-anchor="end">-29.7748 k</text>
</g>
<rect x="1655" y="796" width="18" height="117" fill="#f0f0f0"/>
<rect x="1656.5" y="797.5" width="15" height="15" fill="#f8f8f8" stroke="#c8c8c8"/>
<rect x="1656.5" y="813.5" width="15" height="14" fill="#ffffff" stroke="#c8c8c8"/>
<rect x="1656.5" y="896.5" width="15" height="15" fill="#f8f8f8" stroke="#c8c8c8"/>
<path d="M1660.5,807 L1664,803 L1667.5,807 Z" fill="#a0a0a0"/>
<path d="M1660.5,902 L1664,906 L1667.5,902 Z" fill="#a0a0a0"/>
<text x="18.3" y="939" font-size="12" fill="#ffffff" text-anchor="start" textLength="531.7" lengthAdjust="spacingAndGlyphs">Measurement paused - recording FMCW_140MHzDeviation_50_5_50_5usec_UpCwDnCwChirp.sdf</text>
<line x1="1509.5" y1="921" x2="1509.5" y2="945" stroke="#7ab4e8" stroke-width="1"/>
<line x1="1511.5" y1="921" x2="1511.5" y2="945" stroke="#d8ecff" stroke-width="1"/>
<line x1="1589.5" y1="921" x2="1589.5" y2="945" stroke="#7ab4e8" stroke-width="1"/>
<line x1="1591.5" y1="921" x2="1591.5" y2="945" stroke="#d8ecff" stroke-width="1"/>
<text x="1531.5" y="939" font-size="12.5" fill="#ffffff" text-anchor="start" textLength="40.3" lengthAdjust="spacingAndGlyphs">INT REF</text>
<text x="1608.7" y="939" font-size="12.5" fill="#ffffff" text-anchor="start" textLength="57.3" lengthAdjust="spacingAndGlyphs">CAL: None</text>
<rect x="8" y="38" width="2" height="2" fill="#9a9a9a"/>
<rect x="8" y="42" width="2" height="2" fill="#9a9a9a"/>
<rect x="8" y="46" width="2" height="2" fill="#9a9a9a"/>
<rect x="8" y="50" width="2" height="2" fill="#9a9a9a"/>
<path d="M23.5,34 L38.5,44.5 L23.5,55.5 Z" fill="none" stroke="#3cba3c" stroke-width="1.4"/>
<rect x="48" y="29" width="33" height="32" fill="#bcd6ec"/>
<rect x="59" y="33.5" width="2" height="22" fill="#1a1a1a"/>
<rect x="67.5" y="33.5" width="2" height="22" fill="#1a1a1a"/>
<line x1="83.5" y1="31" x2="83.5" y2="59" stroke="#c0c0c0" stroke-width="1"/>
<rect x="86" y="29" width="34" height="32" fill="#bcd6ec"/>
<ellipse cx="102.5" cy="47" rx="11" ry="7" fill="none" stroke="#1a1a1a" stroke-width="1.5"/>
<path d="M100,36.5 L107,41 L100,44.5 Z" fill="#1a1a1a"/>
<line x1="122.5" y1="31" x2="122.5" y2="59" stroke="#b0b0b0" stroke-width="1"/>
<rect x="127.5" y="29.5" width="31" height="31" fill="#f2f2f2" stroke="#e4e4e4"/>
<path d="M133,40 C136,30 139,33 141,45 C143,57 146,56 148,50" fill="none" stroke="#a8a8a8" stroke-width="1.2"/>
<path d="M141,33.5 L154,33.5 M151.5,34 L151.5,55 M148,38 L151.5,34 L155,38 M148,51 L151.5,55 L155,51 M148,55.5 L155,55.5" fill="none" stroke="#a8a8a8" stroke-width="1"/>
<rect x="161.5" y="29.5" width="204" height="30" fill="#f3f3f3" stroke="#c8c8c8"/>
<text x="165.7" y="50" font-size="13" fill="#8a8a8a" text-anchor="start" textLength="179" lengthAdjust="spacingAndGlyphs">Range To Peak Power (Default)</text>
<path d="M353,43 L361,43 L357,47.5 Z" fill="#707070"/>
<rect x="371.5" y="51" width="7" height="1" fill="#b4b4b4"/>
<rect x="371.5" y="53" width="7" height="1" fill="#b4b4b4"/>
<path d="M371.5,54.5 L378.5,54.5 L375,58 Z" fill="#a8a8a8"/>
<rect x="389" y="38" width="2" height="2" fill="#9a9a9a"/>
<rect x="389" y="42" width="2" height="2" fill="#9a9a9a"/>
<rect x="389" y="46" width="2" height="2" fill="#9a9a9a"/>
<rect x="389" y="50" width="2" height="2" fill="#9a9a9a"/>
<circle cx="412.5" cy="44.5" r="11.5" fill="#e82020"/>
<line x1="432.5" y1="31" x2="432.5" y2="59" stroke="#b0b0b0" stroke-width="1"/>
<rect x="434.5" y="29.5" width="33" height="31" fill="#aacbe8" stroke="#1f63b8"/>
<path d="M441.5,34 L452.5,34 L457.5,39 L457.5,52.5 L441.5,52.5 Z" fill="#acd6f2" stroke="#1a1a1a" stroke-width="1.3"/>
<path d="M452.5,34.5 L452.5,39 L457,39" fill="#ffffff" stroke="#1a1a1a" stroke-width="1"/>
<rect x="444" y="36.8" width="6.5" height="1.1" fill="#111"/>
<rect x="444" y="38.9" width="6.5" height="1.1" fill="#111"/>
<rect x="444" y="40.9" width="11.5" height="1.1" fill="#111"/>
<rect x="444" y="42.9" width="11.5" height="1.1" fill="#111"/>
<rect x="444" y="44.9" width="11.5" height="1.1" fill="#111"/>
<rect x="444" y="46.9" width="11.5" height="1.1" fill="#111"/>
<rect x="444" y="49.0" width="11.5" height="1.1" fill="#111"/>
<circle cx="457" cy="51.3" r="4.3" fill="#e82020"/>
<rect x="473.5" y="39.5" width="21.5" height="12" rx="1" fill="#ffffff" stroke="#111" stroke-width="1.6"/>
<circle cx="487.9" cy="42.2" r="1" fill="#111"/>
<circle cx="492.1" cy="41.8" r="1" fill="#111"/>
<circle cx="488.3" cy="45.1" r="1" fill="#111"/>
<circle cx="492.1" cy="45.3" r="1" fill="#111"/>
<circle cx="490.4" cy="48" r="1" fill="#111"/>
<path d="M476,36.5 L491.5,53 M491.5,36.5 L476,53" stroke="#ee2020" stroke-width="2.3"/>
<rect x="504.5" y="51" width="7" height="1" fill="#b4b4b4"/>
<rect x="504.5" y="53" width="7" height="1" fill="#b4b4b4"/>
<path d="M504.5,54.5 L511.5,54.5 L508,58 Z" fill="#a8a8a8"/>
<rect x="522" y="38" width="2" height="2" fill="#9a9a9a"/>
<rect x="522" y="42" width="2" height="2" fill="#9a9a9a"/>
<rect x="522" y="46" width="2" height="2" fill="#9a9a9a"/>
<rect x="522" y="50" width="2" height="2" fill="#9a9a9a"/>
<rect x="534" y="36" width="15" height="17" fill="#5a5a5a"/>
<text x="541.5" y="50" font-size="13" fill="#ffffff" text-anchor="middle" font-weight="bold">B</text>
<rect x="560.5" y="37.5" width="6" height="6" fill="none" stroke="#1a1a1a" stroke-width="1.2"/>
<rect x="569.5" y="37.5" width="6" height="6" fill="none" stroke="#1a1a1a" stroke-width="1.2"/>
<rect x="560.5" y="45.5" width="6" height="6" fill="none" stroke="#1a1a1a" stroke-width="1.2"/>
<rect x="569.5" y="45.5" width="6" height="6" fill="none" stroke="#1a1a1a" stroke-width="1.2"/>
<path d="M579,43.5 L585,43.5 L582,46.5 Z" fill="#404040"/>
<path d="M597,49.2 L617,49.2 M607,42 L607,47 M607,40 L617,40" stroke="#000" stroke-width="1.4"/>
<rect x="594.6" y="46.4" width="5.7" height="5.6" fill="#000"/>
<rect x="604.1" y="46.4" width="5.7" height="5.6" fill="#000"/>
<rect x="614" y="46.4" width="5.7" height="5.6" fill="#000"/>
<rect x="604.1" y="37.1" width="5.7" height="5.6" fill="#000"/>
<rect x="614" y="37.1" width="5.7" height="5.6" fill="#000"/>
<rect x="628.5" y="51" width="7" height="1" fill="#b4b4b4"/>
<rect x="628.5" y="53" width="7" height="1" fill="#b4b4b4"/>
<path d="M628.5,54.5 L635.5,54.5 L632,58 Z" fill="#a8a8a8"/>
<rect x="646" y="38" width="2" height="2" fill="#9a9a9a"/>
<rect x="646" y="42" width="2" height="2" fill="#9a9a9a"/>
<rect x="646" y="46" width="2" height="2" fill="#9a9a9a"/>
<rect x="646" y="50" width="2" height="2" fill="#9a9a9a"/>
<rect x="652" y="29" width="33" height="32" fill="#bcd6ec"/>
<path d="M662.8,34.5 L674.5,45.2 L670,46.3 L674,54.3 L671.2,55.6 L667.4,47.6 L664.3,50.8 Z" fill="none" stroke="#1a1a1a" stroke-width="1.1"/>
<rect x="690.5" y="33.5" width="16" height="13" fill="none" stroke="#1a1a1a" stroke-width="1.2" stroke-dasharray="1.5,1.5"/>
<path d="M707,46.5 L713,52.5 L710.5,52.5 L712,55.5 L710.5,56 L709,53 L707,55 Z" fill="#1a1a1a"/>
<path d="M735,36 L741,45 L735,54 L729,45 Z" fill="none" stroke="#1a1a1a" stroke-width="1.5"/>
<rect x="762" y="33.5" width="2" height="22" fill="#555"/>
<rect x="774" y="33.5" width="2" height="22" fill="#555"/>
<line x1="768.5" y1="33.5" x2="768.5" y2="55.5" stroke="#555" stroke-width="1.5" stroke-dasharray="2,1.5"/>
<rect x="790" y="33.5" width="2" height="22" fill="#1a1a1a"/>
<rect x="810" y="33.5" width="2" height="22" fill="#1a1a1a"/>
<path d="M792,36 L800.5,40.2 L792,44 Z" fill="#e82020"/>
<path d="M810,36 L801.5,40.2 L810,44 Z" fill="#20c010"/>
<rect x="821.5" y="51" width="7" height="1" fill="#b4b4b4"/>
<rect x="821.5" y="53" width="7" height="1" fill="#b4b4b4"/>
<path d="M821.5,54.5 L828.5,54.5 L825,58 Z" fill="#a8a8a8"/>
<rect x="839" y="38" width="2" height="2" fill="#9a9a9a"/>
<rect x="839" y="42" width="2" height="2" fill="#9a9a9a"/>
<rect x="839" y="46" width="2" height="2" fill="#9a9a9a"/>
<rect x="839" y="50" width="2" height="2" fill="#9a9a9a"/>
<rect x="849" y="32" width="26" height="25" fill="#3010b0"/>
<clipPath id="wfc"><rect x="849" y="32" width="26" height="25"/></clipPath><g clip-path="url(#wfc)">
<path d="M861.5,30 L865.5,39.3 L859.2,50 L863,58.5" fill="none" stroke="#00e0ff" stroke-width="8"/>
<path d="M861.5,30 L865.5,39.3 L859.2,50 L863,58.5" fill="none" stroke="#e8f000" stroke-width="6.2"/>
<path d="M861.5,30 L865.5,39.3 L859.2,50 L863,58.5" fill="none" stroke="#ff1010" stroke-width="4.6"/>
</g>
<path d="M884,56 L889.3,33.5 L890.0999999999999,33.5 L890.0999999999999,56 Z" fill="#d0f4fa"/>
<path d="M889,56 L894.4,33.5 L895.1999999999999,33.5 L895.1999999999999,56 Z" fill="#a0e0f4"/>
<path d="M895,56 L900.6,33.5 L901.4,33.5 L901.4,56 Z" fill="#48d4e0"/>
<path d="M900,56 L906.3,33.5 L907.0999999999999,33.5 L907.0999999999999,56 Z" fill="#38d8e0"/>
<path d="M928,33 L940,56 L917,56 Z" fill="#2a70e0"/>
<path d="M928,38 L937,55 L920,55 Z" fill="#30d040"/>
<path d="M928,44 L933,55 L923,55 Z" fill="#f0e020"/>
<path d="M927,48 L931,55 L924,55 Z" fill="#f03020"/>
<line x1="947.5" y1="31" x2="947.5" y2="59" stroke="#b0b0b0" stroke-width="1"/>
<rect x="951.5" y="29.5" width="39" height="30" fill="#f3f3f3" stroke="#b8b8b8"/>
<text x="971" y="50" font-size="13" fill="#6a6a6a" text-anchor="middle">50 %</text>
<rect x="993.5" y="29.5" width="33" height="30" fill="#f3f3f3" stroke="#b8b8b8"/>
<text x="1010" y="50" font-size="13" fill="#6a6a6a" text-anchor="middle">0 %</text>
<rect x="1028.5" y="29.5" width="110" height="30" fill="#e6e6e6" stroke="#dadada"/>
<text x="1033" y="50" font-size="13" fill="#8a8a8a" text-anchor="start">Color Normal</text>
<path d="M1127,43 L1134,43 L1130.5,46.5 Z" fill="#c8c8c8"/>
<rect x="1144.5" y="51" width="7" height="1" fill="#b4b4b4"/>
<rect x="1144.5" y="53" width="7" height="1" fill="#b4b4b4"/>
<path d="M1144.5,54.5 L1151.5,54.5 L1148,58 Z" fill="#a8a8a8"/>
<rect x="1162" y="38" width="2" height="2" fill="#9a9a9a"/>
<rect x="1162" y="42" width="2" height="2" fill="#9a9a9a"/>
<rect x="1162" y="46" width="2" height="2" fill="#9a9a9a"/>
<rect x="1162" y="50" width="2" height="2" fill="#9a9a9a"/>
<rect x="1171.5" y="51" width="7" height="1" fill="#b4b4b4"/>
<rect x="1171.5" y="53" width="7" height="1" fill="#b4b4b4"/>
<path d="M1171.5,54.5 L1178.5,54.5 L1175,58 Z" fill="#a8a8a8"/>
</svg>
</body></html>
